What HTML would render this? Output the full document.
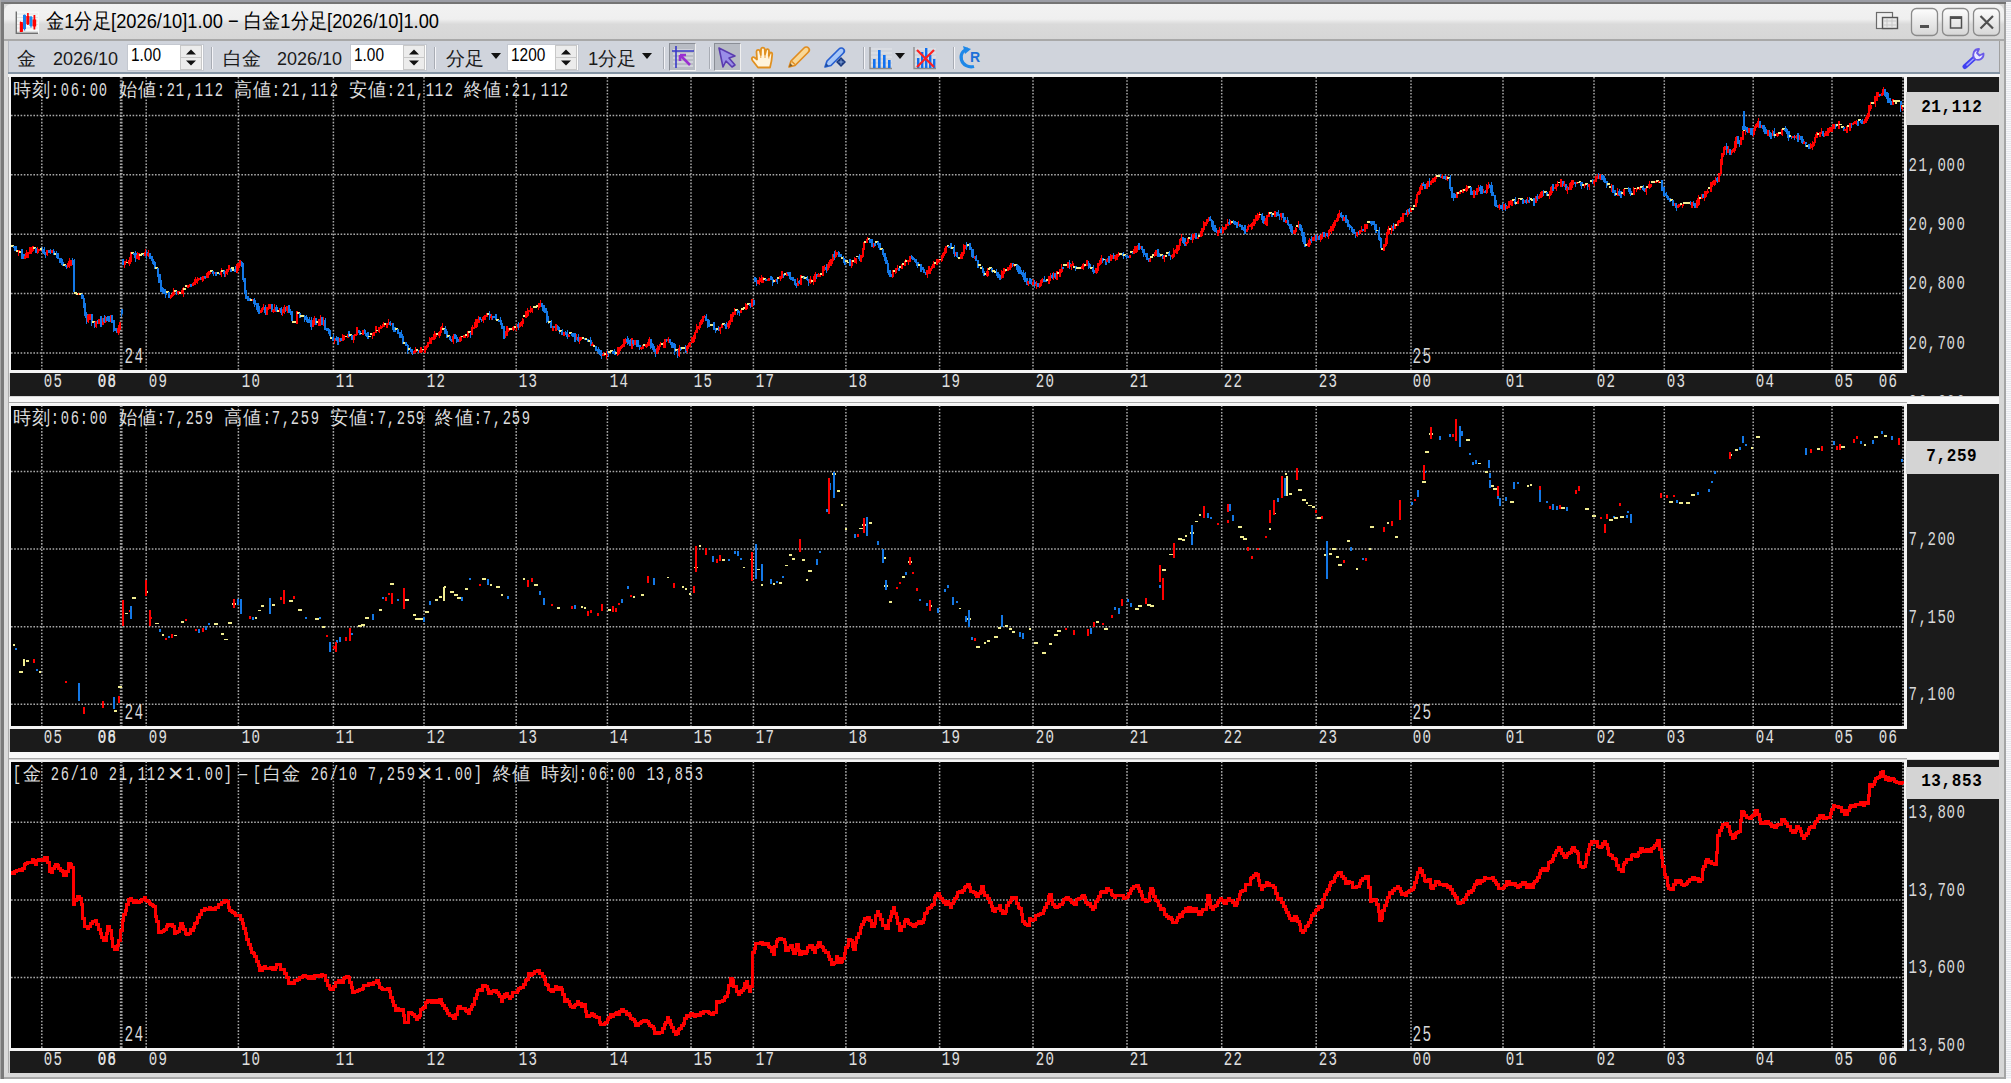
<!DOCTYPE html><html><head><meta charset="utf-8"><style>
*{margin:0;padding:0;box-sizing:border-box}
html,body{width:2011px;height:1083px;overflow:hidden;background:#ffffff}
body{position:relative;font-family:"Liberation Sans",sans-serif}
.abs{position:absolute}
.m{position:absolute;height:16px;line-height:16px;font-family:"Liberation Mono",monospace;transform-origin:0 0;white-space:nowrap}
.m i{position:absolute;top:0;font-style:normal;text-align:center;display:block}
.tt{position:absolute;white-space:nowrap;transform-origin:0 0;color:#000}
</style></head><body>
<div class="abs" style="left:0;top:0;width:2011px;height:1080px;background:#d6d6d6"></div>
<div class="abs" style="left:0;top:0;width:2011px;height:2px;background:#9b9da5"></div>
<div class="abs" style="left:0;top:2px;width:2006px;height:2px;background:#747474"></div>
<div class="abs" style="left:0;top:0;width:1px;height:1080px;background:#a8a8a8"></div>
<div class="abs" style="left:1px;top:2px;width:3px;height:1078px;background:#7a7a7a"></div>
<div class="abs" style="left:4px;top:4px;width:5px;height:1076px;background:#dadada"></div>
<div class="abs" style="left:2004px;top:4px;width:2px;height:1076px;background:#a4a4a4"></div>
<div class="abs" style="left:2006px;top:2px;width:5px;height:1078px;background:repeating-linear-gradient(0deg,#e6e8ee 0 1px,#f8f8fa 1px 2px)"></div>
<div class="abs" style="left:8px;top:74px;width:1px;height:999px;background:#acacac"></div>
<div class="abs" style="left:4px;top:1073px;width:2000px;height:5px;background:#d8d8d8"></div>
<div class="abs" style="left:4px;top:1077px;width:2000px;height:2px;background:#a8a8a8"></div>
<div class="abs" style="left:0;top:1079px;width:2011px;height:4px;background:#ffffff"></div>
<div class="abs" style="left:4px;top:4px;width:2000px;height:36px;border-radius:8px 8px 0 0;background:linear-gradient(#f2f2f2,#efefef 42%,#dadada 56%,#d6d6d6)"></div>
<div class="abs" style="left:4px;top:39px;width:2000px;height:2px;background:#a8a8a8"></div>
<svg class="abs" style="left:14px;top:10px" width="26" height="26" viewBox="0 0 26 26">
<rect x="2" y="1.5" width="23" height="22" fill="#f6f8f8"/>
<path d="M3 4H24M3 7.5H24M3 11H24M3 14.5H24M3 18H24M3 21.5H24" stroke="#dcdcdc" stroke-width="0.8"/>
<path d="M2.3 1.5V23.3H24" stroke="#707070" stroke-width="1.4" fill="none"/>
<path d="M6 22V11M9.2 21V4.5M12.8 15V3M16 18V6M19.5 19V4.5" stroke-width="1.4" stroke="#000" stroke-opacity="0"/>
<path d="M6.2 11L8.8 14V21L6.2 22Z" fill="#ff0000"/>
<rect x="5.8" y="12" width="3" height="10" fill="#ff0000"/>
<rect x="9" y="5" width="3" height="14" fill="#1a7ee8"/>
<path d="M10.5 4.5V20.5" stroke="#1a7ee8" stroke-width="1.4"/>
<rect x="12.3" y="6" width="3.2" height="8" fill="#ff0000"/>
<path d="M13.9 3V15" stroke="#ff0000" stroke-width="1.6"/>
<rect x="15.5" y="7" width="3" height="9" fill="#1a8ef0"/>
<path d="M17 6V17.5" stroke="#1a8ef0" stroke-width="1.4"/>
<rect x="18.6" y="9.5" width="3.6" height="7" fill="#ff0000"/>
<path d="M20.4 5V19.5" stroke="#ff0000" stroke-width="1.8"/>
</svg>
<div class="tt" style="left:46px;top:8px;font-size:21px;line-height:26px;transform:scaleX(0.871)">金1分足[2026/10]1.00 − 白金1分足[2026/10]1.00</div>
<svg class="abs" style="left:1874px;top:6px" width="130" height="34" viewBox="0 0 130 34">
<defs><linearGradient id="bg" x1="0" y1="0" x2="0" y2="1"><stop offset="0" stop-color="#fdfdfd"/><stop offset="1" stop-color="#d6d6d6"/></linearGradient></defs>
<rect x="2.5" y="6.5" width="16" height="16" fill="#f0f0f0" stroke="#6a6a6a" stroke-width="1.2"/>
<rect x="8.5" y="11.5" width="15" height="11" fill="#e8e8e8" stroke="#555" stroke-width="1.4"/>
<path d="M9 15H23M9 19H23M13 12V22M18 12V22" stroke="#c8c8c8" stroke-width="1"/>
<rect x="37.5" y="2.5" width="26" height="27" rx="5" fill="url(#bg)" stroke="#8a8a8a" stroke-width="1.3"/>
<rect x="46" y="19" width="9" height="3" fill="#505050"/>
<rect x="68.5" y="2.5" width="26" height="27" rx="5" fill="url(#bg)" stroke="#8a8a8a" stroke-width="1.3"/>
<rect x="76.5" y="11" width="11" height="11" fill="none" stroke="#505050" stroke-width="1.5"/>
<rect x="76" y="10.5" width="12" height="2.5" fill="#505050"/>
<rect x="99.5" y="2.5" width="26" height="27" rx="5" fill="url(#bg)" stroke="#8a8a8a" stroke-width="1.3"/>
<path d="M106.5 10L119 22.5M119 10L106.5 22.5" stroke="#505050" stroke-width="2.2"/>
</svg>
<div class="abs" style="left:8px;top:41px;width:1992px;height:32px;background:#d0d4dc;border-left:1px solid #b4b8c0;border-right:1px solid #a0a0a0"></div>
<div class="abs" style="left:8px;top:72px;width:1992px;height:2px;background:#8494a4"></div>
<div class="abs" style="left:8px;top:74px;width:1992px;height:3px;background:#f4f4f4"></div>
<div class="tt" style="left:17px;top:49px;font-size:18.5px;line-height:20px;color:#1a1a1a;transform:scaleX(1.0)">金</div>
<div class="tt" style="left:53px;top:49px;font-size:18px;line-height:20px;color:#1a1a1a;transform:scaleX(1.0)">2026/10</div>
<div class="abs" style="left:127px;top:44px;width:77px;height:27px;background:#fff;border:1px solid #c4c8d0"></div>
<div class="tt" style="left:131px;top:45px;font-size:17.5px;line-height:20px;color:#000;transform:scaleX(0.88)">1.00</div>
<svg class="abs" style="left:180px;top:45px" width="22" height="25" viewBox="0 0 22 25">
<rect x="0.5" y="0.5" width="21" height="24" fill="#ececec" stroke="#c8c8c8"/>
<path d="M0.5 12.5H21.5" stroke="#c8c8c8"/>
<path d="M6 9.5L11 4.5L16 9.5Z" fill="#111"/><path d="M6 15.5L11 20.5L16 15.5Z" fill="#111"/>
</svg>
<div class="abs" style="left:211px;top:47px;width:1px;height:22px;background:#a8acb4"></div>
<div class="abs" style="left:212px;top:47px;width:1px;height:22px;background:#f4f4f8"></div>
<div class="tt" style="left:223px;top:49px;font-size:18.5px;line-height:20px;color:#1a1a1a;transform:scaleX(1.0)">白金</div>
<div class="tt" style="left:277px;top:49px;font-size:18px;line-height:20px;color:#1a1a1a;transform:scaleX(1.0)">2026/10</div>
<div class="abs" style="left:350px;top:44px;width:77px;height:27px;background:#fff;border:1px solid #c4c8d0"></div>
<div class="tt" style="left:354px;top:45px;font-size:17.5px;line-height:20px;color:#000;transform:scaleX(0.88)">1.00</div>
<svg class="abs" style="left:403px;top:45px" width="22" height="25" viewBox="0 0 22 25">
<rect x="0.5" y="0.5" width="21" height="24" fill="#ececec" stroke="#c8c8c8"/>
<path d="M0.5 12.5H21.5" stroke="#c8c8c8"/>
<path d="M6 9.5L11 4.5L16 9.5Z" fill="#111"/><path d="M6 15.5L11 20.5L16 15.5Z" fill="#111"/>
</svg>
<div class="abs" style="left:434px;top:47px;width:1px;height:22px;background:#a8acb4"></div>
<div class="abs" style="left:435px;top:47px;width:1px;height:22px;background:#f4f4f8"></div>
<div class="tt" style="left:446px;top:49px;font-size:18.5px;line-height:20px;color:#1a1a1a;transform:scaleX(1.0)">分足</div>
<svg class="abs" style="left:491px;top:53px" width="10" height="6" viewBox="0 0 10 6"><path d="M0 0H10L5 6Z" fill="#111"/></svg>
<div class="abs" style="left:507px;top:44px;width:72px;height:27px;background:#fff;border:1px solid #c4c8d0"></div>
<div class="tt" style="left:511px;top:45px;font-size:17.5px;line-height:20px;color:#000;transform:scaleX(0.88)">1200</div>
<svg class="abs" style="left:555px;top:45px" width="22" height="25" viewBox="0 0 22 25">
<rect x="0.5" y="0.5" width="21" height="24" fill="#ececec" stroke="#c8c8c8"/>
<path d="M0.5 12.5H21.5" stroke="#c8c8c8"/>
<path d="M6 9.5L11 4.5L16 9.5Z" fill="#111"/><path d="M6 15.5L11 20.5L16 15.5Z" fill="#111"/>
</svg>
<div class="tt" style="left:588px;top:49px;font-size:18.5px;line-height:20px;color:#1a1a1a;transform:scaleX(1.0)">1分足</div>
<svg class="abs" style="left:642px;top:53px" width="10" height="6" viewBox="0 0 10 6"><path d="M0 0H10L5 6Z" fill="#111"/></svg>
<div class="abs" style="left:663px;top:47px;width:1px;height:22px;background:#a8acb4"></div>
<div class="abs" style="left:664px;top:47px;width:1px;height:22px;background:#f4f4f8"></div>
<div class="abs" style="left:669px;top:43px;width:27px;height:28px;background:#b8bcc4;border:1px solid #8a8e96;border-bottom-color:#f4f4f4;border-right-color:#f0f0f0"></div>
<svg class="abs" style="left:672px;top:46px" width="22" height="22" viewBox="0 0 22 22">
<path d="M1 4H21M1 8H21M1 12H21M1 16H21M1 20H21" stroke="#e8e8f0" stroke-width="1"/>
<path d="M4 0V22M0 5H22" stroke="#3838c8" stroke-width="1.6"/>
<path d="M8 9L18 19M8 9V15M8 9H14" stroke="#9a30d0" stroke-width="2.6" fill="none"/>
</svg>
<div class="abs" style="left:709px;top:47px;width:1px;height:22px;background:#a8acb4"></div>
<div class="abs" style="left:710px;top:47px;width:1px;height:22px;background:#f4f4f8"></div>
<div class="abs" style="left:714px;top:43px;width:27px;height:28px;background:#b8bcc4;border:1px solid #8a8e96;border-bottom-color:#f4f4f4;border-right-color:#f0f0f0"></div>
<svg class="abs" style="left:716px;top:46px" width="24" height="24" viewBox="0 0 24 24">
<path d="M3 2L19 10L13 12L19 19L16 21L10 15L7 21Z" fill="#9a8ee8" stroke="#5a3cb0" stroke-width="1.6" stroke-linejoin="round"/>
</svg>
<svg class="abs" style="left:745px;top:40px" width="32" height="32" viewBox="0 0 32 32">
<path d="M13 27.5C11 25 9.5 23 7.5 20.5C6 18.5 7.5 16 9.5 17.5L12 19.5L11.5 12C11.3 9.5 14.5 9 15 11.5L15.8 15L16 9.5C16.2 7 19.5 7 19.8 9.5L20 14.5L21 10.5C21.5 8.5 24 8.8 24 11L23.8 16L24.8 13.5C25.5 11.8 27.5 12.5 27.2 14.5C27 18 26.5 22 25 27.5Z" fill="#fff4dc" stroke="#e09020" stroke-width="1.8" stroke-linejoin="round"/>
<path d="M15.8 15V18M20 14.5V18M23.8 16V18.5" stroke="#e8a040" stroke-width="1"/>
</svg>
<svg class="abs" style="left:786px;top:45px" width="25" height="25" viewBox="0 0 25 25">
<path d="M3 22L5 16L18 3C19.5 1.5 21.5 2 22.5 3C23.5 4 23.5 6 22 7.5L9 20.5Z" fill="#f8d898" stroke="#e08c20" stroke-width="1.7" stroke-linejoin="round"/>
<path d="M6 16.5L9 19.5" stroke="#e08c20" stroke-width="1.2"/>
<path d="M3 22L4.3 18.3L6.7 20.7Z" fill="#806030"/>
</svg>
<svg class="abs" style="left:822px;top:45px" width="26" height="25" viewBox="0 0 26 25">
<path d="M3 22L5 16L17 4C18.5 2.5 20.5 3 21.5 4C22.5 5 22.5 7 21 8.5L9 20.5Z" fill="#a8c8f8" stroke="#2860d0" stroke-width="1.7" stroke-linejoin="round"/>
<path d="M3 22L4.3 18.3L6.7 20.7Z" fill="#2050a0"/>
<path d="M19 12L24 17L19 22L14 17Z" fill="#1a3a80"/>
<path d="M16.5 17H21.5M19 14.5V19.5" stroke="#a0c0f0" stroke-width="0.8"/>
</svg>
<div class="abs" style="left:863px;top:47px;width:1px;height:22px;background:#a8acb4"></div>
<div class="abs" style="left:864px;top:47px;width:1px;height:22px;background:#f4f4f8"></div>
<svg class="abs" style="left:869px;top:46px" width="24" height="24" viewBox="0 0 24 24">
<path d="M2 3H23M2 7H23M2 11H23M2 15H23M2 19H23" stroke="#e4e6ea" stroke-width="1"/>
<path d="M1 1V22.5H23" stroke="#8a8a8a" stroke-width="1.3" fill="none"/>
<rect x="4" y="13" width="2.6" height="9" fill="#1070f0"/>
<rect x="9" y="4" width="2.6" height="18" fill="#1070f0"/>
<rect x="14" y="9" width="2.6" height="13" fill="#1070f0"/>
<rect x="19" y="14" width="2.6" height="8" fill="#1070f0"/>
</svg>
<svg class="abs" style="left:895px;top:53px" width="10" height="6" viewBox="0 0 10 6"><path d="M0 0H10L5 6Z" fill="#111"/></svg>
<svg class="abs" style="left:913px;top:46px" width="24" height="24" viewBox="0 0 24 24">
<path d="M2 3H23M2 7H23M2 11H23M2 15H23M2 19H23" stroke="#e4e6ea" stroke-width="1"/>
<path d="M1 1V22.5H23" stroke="#8a8a8a" stroke-width="1.3" fill="none"/>
<rect x="4" y="12" width="2.4" height="10" fill="#1070f0"/>
<rect x="8" y="6" width="2.4" height="16" fill="#1070f0"/>
<rect x="12" y="2" width="2.4" height="20" fill="#1070f0"/>
<rect x="16" y="9" width="2.4" height="13" fill="#1070f0"/>
<rect x="20" y="13" width="2.4" height="9" fill="#1070f0"/>
<path d="M4 4L21 21M21 4L4 21" stroke="#ff2020" stroke-width="2.2"/>
</svg>
<div class="abs" style="left:953px;top:47px;width:1px;height:22px;background:#a8acb4"></div>
<div class="abs" style="left:954px;top:47px;width:1px;height:22px;background:#f4f4f8"></div>
<svg class="abs" style="left:958px;top:45px" width="26" height="26" viewBox="0 0 26 26">
<path d="M10 4C4.5 5 2 10 3.5 15C5 20 10.5 23 16 21.5" stroke="#1e88e8" stroke-width="3.2" fill="none"/>
<path d="M5 1L13 4L7 9Z" fill="#1e88e8"/>
<text x="12" y="17" font-family="Liberation Sans" font-weight="bold" font-size="14" fill="#1e70d8">R</text>
</svg>
<svg class="abs" style="left:1962px;top:45px" width="26" height="26" viewBox="0 0 26 26">
<path d="M3 21.5L13 12.5" stroke="#4040f0" stroke-width="5" stroke-linecap="round"/>
<path d="M5 20L12 13.5" stroke="#a0a0ff" stroke-width="1.6" stroke-linecap="round"/>
<path d="M12 13C10 9 12 4 17 4L15 8L17.5 10.5L21.5 8.5C22 13 18 16 13.5 14.5Z" fill="#e8e8ff" stroke="#6a5ae8" stroke-width="1.8" stroke-linejoin="round"/>
</svg>
<svg class="abs" style="left:0;top:0" width="2011" height="1083" viewBox="0 0 2011 1083" shape-rendering="crispEdges">
<defs>
<clipPath id="c0"><rect x="11" y="77" width="1893" height="293"/></clipPath>
<clipPath id="a0"><rect x="1907" y="77" width="92" height="319"/></clipPath>
<clipPath id="c1"><rect x="11" y="405.5" width="1893" height="320.5"/></clipPath>
<clipPath id="a1"><rect x="1907" y="405.5" width="92" height="346.0"/></clipPath>
<clipPath id="c2"><rect x="11" y="761.5" width="1893" height="286.5"/></clipPath>
<clipPath id="a2"><rect x="1907" y="761.5" width="92" height="311.5"/></clipPath>
</defs>
<rect x="10" y="76.5" width="1989" height="319.5" fill="#1b1b1b"/>
<rect x="9" y="76.5" width="1898" height="296.0" fill="#f4f4f4"/>
<rect x="11" y="77" width="1893" height="293" fill="#000"/>
<g clip-path="url(#c0)" stroke="#a8a8a8" stroke-width="1.5" stroke-dasharray="1.6 1.6" fill="none" shape-rendering="geometricPrecision"><path d="M11 115.5H1903"/><path d="M11 174.8H1903"/><path d="M11 234.2H1903"/><path d="M11 293.6H1903"/><path d="M11 352.9H1903"/><path d="M41.8 77V370"/><path d="M121.8 77V370"/><path d="M146.2 77V370"/><path d="M238.4 77V370"/><path d="M333.4 77V370"/><path d="M424.0 77V370"/><path d="M516.2 77V370"/><path d="M607.4 77V370"/><path d="M691.0 77V370"/><path d="M753.4 77V370"/><path d="M845.9 77V370"/><path d="M939.6 77V370"/><path d="M1033.0 77V370"/><path d="M1127.0 77V370"/><path d="M1221.7 77V370"/><path d="M1316.2 77V370"/><path d="M1411.0 77V370"/><path d="M1503.0 77V370"/><path d="M1594.0 77V370"/><path d="M1664.3 77V370"/><path d="M1753.2 77V370"/><path d="M1832.0 77V370"/><path d="M120.6 77V370"/><path d="M1903 77V370"/></g>
<rect x="10" y="403.5" width="1989" height="348.0" fill="#1b1b1b"/>
<rect x="9" y="403.5" width="1898" height="325.0" fill="#f4f4f4"/>
<rect x="11" y="405.5" width="1893" height="320.5" fill="#000"/>
<g clip-path="url(#c1)" stroke="#a8a8a8" stroke-width="1.5" stroke-dasharray="1.6 1.6" fill="none" shape-rendering="geometricPrecision"><path d="M11 471.5H1903"/><path d="M11 549.1H1903"/><path d="M11 626.7H1903"/><path d="M11 704.3H1903"/><path d="M41.8 405.5V726"/><path d="M121.8 405.5V726"/><path d="M146.2 405.5V726"/><path d="M238.4 405.5V726"/><path d="M333.4 405.5V726"/><path d="M424.0 405.5V726"/><path d="M516.2 405.5V726"/><path d="M607.4 405.5V726"/><path d="M691.0 405.5V726"/><path d="M753.4 405.5V726"/><path d="M845.9 405.5V726"/><path d="M939.6 405.5V726"/><path d="M1033.0 405.5V726"/><path d="M1127.0 405.5V726"/><path d="M1221.7 405.5V726"/><path d="M1316.2 405.5V726"/><path d="M1411.0 405.5V726"/><path d="M1503.0 405.5V726"/><path d="M1594.0 405.5V726"/><path d="M1664.3 405.5V726"/><path d="M1753.2 405.5V726"/><path d="M1832.0 405.5V726"/><path d="M120.6 405.5V726"/><path d="M1903 405.5V726"/></g>
<rect x="10" y="759.5" width="1989" height="313.5" fill="#1b1b1b"/>
<rect x="9" y="759.5" width="1898" height="291.0" fill="#f4f4f4"/>
<rect x="11" y="761.5" width="1893" height="286.5" fill="#000"/>
<g clip-path="url(#c2)" stroke="#a8a8a8" stroke-width="1.5" stroke-dasharray="1.6 1.6" fill="none" shape-rendering="geometricPrecision"><path d="M11 822.3H1903"/><path d="M11 899.9H1903"/><path d="M11 977.5H1903"/><path d="M41.8 761.5V1048"/><path d="M121.8 761.5V1048"/><path d="M146.2 761.5V1048"/><path d="M238.4 761.5V1048"/><path d="M333.4 761.5V1048"/><path d="M424.0 761.5V1048"/><path d="M516.2 761.5V1048"/><path d="M607.4 761.5V1048"/><path d="M691.0 761.5V1048"/><path d="M753.4 761.5V1048"/><path d="M845.9 761.5V1048"/><path d="M939.6 761.5V1048"/><path d="M1033.0 761.5V1048"/><path d="M1127.0 761.5V1048"/><path d="M1221.7 761.5V1048"/><path d="M1316.2 761.5V1048"/><path d="M1411.0 761.5V1048"/><path d="M1503.0 761.5V1048"/><path d="M1594.0 761.5V1048"/><path d="M1664.3 761.5V1048"/><path d="M1753.2 761.5V1048"/><path d="M1832.0 761.5V1048"/><path d="M120.6 761.5V1048"/><path d="M1903 761.5V1048"/></g>
<rect x="9" y="396.5" width="1990" height="7.0" fill="#f8f8f8"/>
<rect x="9" y="402" width="1898" height="1" fill="#a8a8a8"/>
<rect x="9" y="752" width="1990" height="7.0" fill="#f8f8f8"/>
<rect x="9" y="757.5" width="1898" height="1" fill="#a8a8a8"/>
<g clip-path="url(#c0)"><rect x="11.1" y="244.9" width="2.8" height="1.9" fill="#f0ec90"/><rect x="13.5" y="245.7" width="1.2" height="5.2" fill="#1478e6"/><rect x="13.1" y="245.7" width="2.1" height="2.2" fill="#1478e6"/><rect x="14.7" y="246.3" width="2.1" height="4.6" fill="#1478e6"/><rect x="15.8" y="250.2" width="2.8" height="1.9" fill="#f0ec90"/><rect x="18.2" y="250.4" width="1.2" height="5.2" fill="#ff0000"/><rect x="17.8" y="250.4" width="2.1" height="2.2" fill="#ff0000"/><rect x="19.0" y="251.4" width="2.8" height="1.9" fill="#f0ec90"/><rect x="21.4" y="249.2" width="1.2" height="9.4" fill="#1478e6"/><rect x="21.0" y="252.2" width="2.1" height="3.4" fill="#1478e6"/><rect x="22.6" y="254.0" width="2.1" height="5.2" fill="#1478e6"/><rect x="24.5" y="253.3" width="1.2" height="5.8" fill="#ff0000"/><rect x="24.1" y="256.3" width="2.1" height="2.8" fill="#ff0000"/><rect x="26.1" y="250.4" width="1.2" height="7.6" fill="#ff0000"/><rect x="25.7" y="253.4" width="2.1" height="4.6" fill="#ff0000"/><rect x="27.7" y="252.2" width="1.2" height="5.8" fill="#ff0000"/><rect x="27.3" y="252.2" width="2.1" height="2.8" fill="#ff0000"/><rect x="29.3" y="247.4" width="1.2" height="6.4" fill="#ff0000"/><rect x="28.9" y="250.4" width="2.1" height="3.4" fill="#ff0000"/><rect x="30.9" y="247.0" width="1.2" height="7.0" fill="#ff0000"/><rect x="30.5" y="248.0" width="2.1" height="4.0" fill="#ff0000"/><rect x="32.4" y="245.5" width="1.2" height="5.2" fill="#ff0000"/><rect x="32.0" y="247.5" width="2.1" height="2.2" fill="#ff0000"/><rect x="33.2" y="246.7" width="2.8" height="1.9" fill="#f0ec90"/><rect x="35.2" y="247.5" width="2.1" height="5.2" fill="#1478e6"/><rect x="37.2" y="247.2" width="1.2" height="6.4" fill="#ff0000"/><rect x="36.8" y="249.2" width="2.1" height="3.4" fill="#ff0000"/><rect x="38.4" y="248.6" width="2.1" height="2.2" fill="#ff0000"/><rect x="39.5" y="247.8" width="2.8" height="1.9" fill="#f0ec90"/><rect x="41.9" y="246.6" width="1.2" height="6.8" fill="#1478e6"/><rect x="41.5" y="248.6" width="2.1" height="2.8" fill="#1478e6"/><rect x="43.5" y="246.8" width="1.2" height="8.6" fill="#1478e6"/><rect x="43.1" y="249.8" width="2.1" height="4.6" fill="#1478e6"/><rect x="45.1" y="251.8" width="1.2" height="6.2" fill="#1478e6"/><rect x="44.7" y="252.8" width="2.1" height="2.2" fill="#1478e6"/><rect x="46.7" y="249.8" width="1.2" height="6.2" fill="#ff0000"/><rect x="46.3" y="249.8" width="2.1" height="5.2" fill="#ff0000"/><rect x="47.8" y="249.8" width="2.1" height="2.8" fill="#1478e6"/><rect x="49.8" y="249.0" width="1.2" height="5.2" fill="#1478e6"/><rect x="49.4" y="251.0" width="2.1" height="2.2" fill="#1478e6"/><rect x="51.4" y="250.0" width="1.2" height="3.2" fill="#ff0000"/><rect x="51.0" y="251.0" width="2.1" height="2.2" fill="#ff0000"/><rect x="53.0" y="249.0" width="1.2" height="6.0" fill="#1478e6"/><rect x="52.6" y="251.0" width="2.1" height="4.0" fill="#1478e6"/><rect x="53.8" y="252.6" width="2.8" height="1.9" fill="#f0ec90"/><rect x="56.1" y="251.4" width="1.2" height="6.8" fill="#1478e6"/><rect x="55.7" y="253.4" width="2.1" height="2.8" fill="#1478e6"/><rect x="57.7" y="252.6" width="1.2" height="6.6" fill="#1478e6"/><rect x="57.3" y="254.6" width="2.1" height="4.6" fill="#1478e6"/><rect x="59.3" y="257.5" width="1.2" height="5.4" fill="#1478e6"/><rect x="58.9" y="257.5" width="2.1" height="3.4" fill="#1478e6"/><rect x="60.9" y="258.3" width="1.2" height="7.0" fill="#1478e6"/><rect x="60.5" y="259.3" width="2.1" height="4.0" fill="#1478e6"/><rect x="62.1" y="261.7" width="2.1" height="4.6" fill="#1478e6"/><rect x="63.2" y="263.8" width="2.8" height="1.9" fill="#f0ec90"/><rect x="65.6" y="264.6" width="1.2" height="4.8" fill="#1478e6"/><rect x="65.2" y="264.6" width="2.1" height="2.8" fill="#1478e6"/><rect x="67.2" y="263.4" width="1.2" height="5.0" fill="#ff0000"/><rect x="66.8" y="263.4" width="2.1" height="4.0" fill="#ff0000"/><rect x="68.8" y="258.1" width="1.2" height="10.0" fill="#ff0000"/><rect x="68.4" y="261.1" width="2.1" height="4.0" fill="#ff0000"/><rect x="70.4" y="259.9" width="1.2" height="5.8" fill="#ff0000"/><rect x="70.0" y="259.9" width="2.1" height="2.8" fill="#ff0000"/><rect x="71.9" y="257.9" width="1.2" height="7.2" fill="#1478e6"/><rect x="71.5" y="259.9" width="2.1" height="2.2" fill="#1478e6"/><rect x="73.5" y="258.5" width="1.2" height="35.8" fill="#1478e6"/><rect x="73.1" y="260.5" width="2.1" height="31.8" fill="#1478e6"/><rect x="74.3" y="291.6" width="2.8" height="1.9" fill="#f0ec90"/><rect x="75.9" y="292.8" width="2.8" height="1.9" fill="#f0ec90"/><rect x="77.9" y="293.0" width="2.1" height="2.2" fill="#ff0000"/><rect x="79.0" y="292.8" width="2.8" height="1.9" fill="#f0ec90"/><rect x="81.0" y="293.6" width="2.1" height="5.7" fill="#1478e6"/><rect x="83.0" y="294.8" width="1.2" height="13.1" fill="#1478e6"/><rect x="82.6" y="297.8" width="2.1" height="8.1" fill="#1478e6"/><rect x="84.6" y="303.3" width="1.2" height="14.7" fill="#1478e6"/><rect x="84.2" y="304.3" width="2.1" height="11.7" fill="#1478e6"/><rect x="86.2" y="312.4" width="1.2" height="11.5" fill="#1478e6"/><rect x="85.8" y="314.4" width="2.1" height="7.5" fill="#1478e6"/><rect x="87.7" y="313.9" width="1.2" height="8.9" fill="#ff0000"/><rect x="87.3" y="314.9" width="2.1" height="6.9" fill="#ff0000"/><rect x="89.3" y="314.4" width="1.2" height="5.2" fill="#ff0000"/><rect x="88.9" y="314.4" width="2.1" height="2.2" fill="#ff0000"/><rect x="90.9" y="314.4" width="1.2" height="11.7" fill="#1478e6"/><rect x="90.5" y="314.4" width="2.1" height="8.7" fill="#1478e6"/><rect x="91.7" y="320.7" width="2.8" height="1.9" fill="#f0ec90"/><rect x="94.1" y="321.5" width="1.2" height="6.2" fill="#1478e6"/><rect x="93.7" y="321.5" width="2.1" height="5.2" fill="#1478e6"/><rect x="95.6" y="320.9" width="1.2" height="6.7" fill="#ff0000"/><rect x="95.2" y="320.9" width="2.1" height="5.7" fill="#ff0000"/><rect x="97.2" y="319.9" width="1.2" height="3.8" fill="#1478e6"/><rect x="96.8" y="320.9" width="2.1" height="2.8" fill="#1478e6"/><rect x="98.4" y="319.1" width="2.1" height="4.6" fill="#ff0000"/><rect x="100.4" y="316.1" width="1.2" height="11.3" fill="#1478e6"/><rect x="100.0" y="319.1" width="2.1" height="6.3" fill="#1478e6"/><rect x="101.6" y="317.9" width="2.1" height="7.5" fill="#ff0000"/><rect x="103.5" y="314.9" width="1.2" height="8.0" fill="#1478e6"/><rect x="103.1" y="317.9" width="2.1" height="4.0" fill="#1478e6"/><rect x="105.1" y="315.7" width="1.2" height="7.2" fill="#ff0000"/><rect x="104.7" y="316.7" width="2.1" height="5.2" fill="#ff0000"/><rect x="106.7" y="315.7" width="1.2" height="5.0" fill="#1478e6"/><rect x="106.3" y="316.7" width="2.1" height="4.0" fill="#1478e6"/><rect x="108.3" y="316.1" width="1.2" height="5.8" fill="#1478e6"/><rect x="107.9" y="319.1" width="2.1" height="2.8" fill="#1478e6"/><rect x="109.5" y="314.9" width="2.1" height="6.9" fill="#ff0000"/><rect x="111.4" y="314.9" width="1.2" height="8.3" fill="#1478e6"/><rect x="111.0" y="314.9" width="2.1" height="6.3" fill="#1478e6"/><rect x="113.0" y="319.7" width="1.2" height="11.9" fill="#1478e6"/><rect x="112.6" y="319.7" width="2.1" height="9.9" fill="#1478e6"/><rect x="114.2" y="328.0" width="2.1" height="3.4" fill="#1478e6"/><rect x="116.2" y="327.7" width="1.2" height="4.8" fill="#1478e6"/><rect x="115.8" y="329.7" width="2.1" height="2.8" fill="#1478e6"/><rect x="117.8" y="325.0" width="1.2" height="9.6" fill="#ff0000"/><rect x="117.4" y="328.0" width="2.1" height="4.6" fill="#ff0000"/><rect x="118.9" y="321.5" width="2.1" height="8.1" fill="#ff0000"/><rect x="120.9" y="308.6" width="1.2" height="8.6" fill="#1478e6"/><rect x="120.5" y="308.6" width="2.1" height="5.6" fill="#1478e6"/><rect x="122.1" y="259.4" width="2.1" height="5.6" fill="#1478e6"/><rect x="124.1" y="260.7" width="1.2" height="7.4" fill="#ff0000"/><rect x="123.7" y="261.7" width="2.1" height="3.4" fill="#ff0000"/><rect x="125.7" y="259.1" width="1.2" height="4.2" fill="#ff0000"/><rect x="125.3" y="261.1" width="2.1" height="2.2" fill="#ff0000"/><rect x="126.4" y="261.5" width="2.8" height="1.9" fill="#f0ec90"/><rect x="128.8" y="256.9" width="1.2" height="9.0" fill="#ff0000"/><rect x="128.4" y="259.9" width="2.1" height="4.0" fill="#ff0000"/><rect x="130.4" y="251.6" width="1.2" height="9.9" fill="#ff0000"/><rect x="130.0" y="254.6" width="2.1" height="6.9" fill="#ff0000"/><rect x="131.2" y="252.0" width="2.8" height="1.9" fill="#f0ec90"/><rect x="133.6" y="252.8" width="1.2" height="5.2" fill="#1478e6"/><rect x="133.2" y="252.8" width="2.1" height="2.2" fill="#1478e6"/><rect x="135.1" y="251.4" width="1.2" height="10.2" fill="#1478e6"/><rect x="134.7" y="253.4" width="2.1" height="5.2" fill="#1478e6"/><rect x="136.7" y="252.2" width="1.2" height="6.4" fill="#ff0000"/><rect x="136.3" y="255.2" width="2.1" height="3.4" fill="#ff0000"/><rect x="138.3" y="253.4" width="1.2" height="6.4" fill="#ff0000"/><rect x="137.9" y="253.4" width="2.1" height="3.4" fill="#ff0000"/><rect x="139.1" y="253.8" width="2.8" height="1.9" fill="#f0ec90"/><rect x="140.7" y="253.2" width="2.8" height="1.9" fill="#f0ec90"/><rect x="142.6" y="254.0" width="2.1" height="2.2" fill="#1478e6"/><rect x="144.6" y="249.2" width="1.2" height="7.0" fill="#ff0000"/><rect x="144.2" y="252.2" width="2.1" height="4.0" fill="#ff0000"/><rect x="146.2" y="250.2" width="1.2" height="9.0" fill="#1478e6"/><rect x="145.8" y="252.2" width="2.1" height="4.0" fill="#1478e6"/><rect x="147.8" y="250.4" width="1.2" height="6.8" fill="#ff0000"/><rect x="147.4" y="253.4" width="2.1" height="2.8" fill="#ff0000"/><rect x="149.4" y="253.4" width="1.2" height="6.0" fill="#1478e6"/><rect x="149.0" y="253.4" width="2.1" height="4.0" fill="#1478e6"/><rect x="150.5" y="255.7" width="2.1" height="5.2" fill="#1478e6"/><rect x="152.5" y="259.3" width="1.2" height="5.6" fill="#1478e6"/><rect x="152.1" y="259.3" width="2.1" height="4.6" fill="#1478e6"/><rect x="154.1" y="261.3" width="1.2" height="7.9" fill="#1478e6"/><rect x="153.7" y="262.3" width="2.1" height="6.9" fill="#1478e6"/><rect x="154.9" y="266.8" width="2.8" height="1.9" fill="#f0ec90"/><rect x="157.3" y="267.6" width="1.2" height="9.5" fill="#1478e6"/><rect x="156.9" y="267.6" width="2.1" height="7.5" fill="#1478e6"/><rect x="158.4" y="273.5" width="2.1" height="9.3" fill="#1478e6"/><rect x="160.4" y="280.2" width="1.2" height="11.7" fill="#1478e6"/><rect x="160.0" y="281.2" width="2.1" height="8.7" fill="#1478e6"/><rect x="162.0" y="287.3" width="1.2" height="5.6" fill="#1478e6"/><rect x="161.6" y="288.3" width="2.1" height="4.6" fill="#1478e6"/><rect x="163.6" y="289.3" width="1.2" height="4.8" fill="#1478e6"/><rect x="163.2" y="291.3" width="2.1" height="2.8" fill="#1478e6"/><rect x="165.2" y="289.4" width="1.2" height="8.8" fill="#1478e6"/><rect x="164.8" y="292.4" width="2.1" height="2.8" fill="#1478e6"/><rect x="165.9" y="291.1" width="2.8" height="1.9" fill="#f0ec90"/><rect x="167.9" y="291.9" width="2.1" height="5.7" fill="#1478e6"/><rect x="169.9" y="294.8" width="1.2" height="3.8" fill="#ff0000"/><rect x="169.5" y="294.8" width="2.1" height="2.8" fill="#ff0000"/><rect x="171.5" y="291.6" width="1.2" height="5.8" fill="#ff0000"/><rect x="171.1" y="293.6" width="2.1" height="2.8" fill="#ff0000"/><rect x="173.1" y="288.1" width="1.2" height="8.2" fill="#ff0000"/><rect x="172.7" y="290.1" width="2.1" height="5.2" fill="#ff0000"/><rect x="173.8" y="289.9" width="2.8" height="1.9" fill="#f0ec90"/><rect x="176.2" y="290.7" width="1.2" height="4.4" fill="#1478e6"/><rect x="175.8" y="290.7" width="2.1" height="3.4" fill="#1478e6"/><rect x="177.8" y="291.3" width="1.2" height="3.8" fill="#ff0000"/><rect x="177.4" y="291.3" width="2.1" height="2.8" fill="#ff0000"/><rect x="178.6" y="291.6" width="2.8" height="1.9" fill="#f0ec90"/><rect x="181.0" y="289.9" width="1.2" height="4.2" fill="#ff0000"/><rect x="180.6" y="291.9" width="2.1" height="2.2" fill="#ff0000"/><rect x="182.5" y="287.3" width="1.2" height="9.2" fill="#ff0000"/><rect x="182.1" y="288.3" width="2.1" height="5.2" fill="#ff0000"/><rect x="183.3" y="288.1" width="2.8" height="1.9" fill="#f0ec90"/><rect x="184.9" y="285.1" width="2.8" height="1.9" fill="#f0ec90"/><rect x="186.9" y="284.8" width="2.1" height="2.8" fill="#ff0000"/><rect x="188.9" y="284.2" width="1.2" height="3.2" fill="#ff0000"/><rect x="188.5" y="284.2" width="2.1" height="2.2" fill="#ff0000"/><rect x="190.4" y="284.2" width="1.2" height="3.2" fill="#1478e6"/><rect x="190.0" y="284.2" width="2.1" height="2.2" fill="#1478e6"/><rect x="191.6" y="283.0" width="2.1" height="3.4" fill="#ff0000"/><rect x="193.6" y="278.8" width="1.2" height="5.8" fill="#ff0000"/><rect x="193.2" y="281.8" width="2.1" height="2.8" fill="#ff0000"/><rect x="195.2" y="277.4" width="1.2" height="8.0" fill="#ff0000"/><rect x="194.8" y="279.4" width="2.1" height="4.0" fill="#ff0000"/><rect x="196.8" y="276.8" width="1.2" height="7.2" fill="#ff0000"/><rect x="196.4" y="278.8" width="2.1" height="2.2" fill="#ff0000"/><rect x="197.9" y="277.6" width="2.1" height="2.8" fill="#ff0000"/><rect x="199.9" y="276.6" width="1.2" height="3.2" fill="#1478e6"/><rect x="199.5" y="277.6" width="2.1" height="2.2" fill="#1478e6"/><rect x="201.5" y="276.1" width="1.2" height="5.8" fill="#ff0000"/><rect x="201.1" y="277.1" width="2.1" height="2.8" fill="#ff0000"/><rect x="203.1" y="275.9" width="1.2" height="4.8" fill="#ff0000"/><rect x="202.7" y="275.9" width="2.1" height="2.8" fill="#ff0000"/><rect x="204.7" y="275.9" width="1.2" height="3.2" fill="#1478e6"/><rect x="204.3" y="275.9" width="2.1" height="2.2" fill="#1478e6"/><rect x="205.8" y="272.9" width="2.1" height="5.2" fill="#ff0000"/><rect x="207.8" y="270.7" width="1.2" height="6.8" fill="#ff0000"/><rect x="207.4" y="271.7" width="2.1" height="2.8" fill="#ff0000"/><rect x="209.4" y="271.1" width="1.2" height="3.2" fill="#ff0000"/><rect x="209.0" y="271.1" width="2.1" height="2.2" fill="#ff0000"/><rect x="210.2" y="270.3" width="2.8" height="1.9" fill="#f0ec90"/><rect x="212.6" y="271.1" width="1.2" height="4.8" fill="#1478e6"/><rect x="212.2" y="271.1" width="2.1" height="2.8" fill="#1478e6"/><rect x="213.7" y="271.7" width="2.1" height="2.2" fill="#ff0000"/><rect x="215.3" y="271.7" width="2.1" height="4.0" fill="#1478e6"/><rect x="216.5" y="272.1" width="2.8" height="1.9" fill="#f0ec90"/><rect x="218.5" y="272.9" width="2.1" height="2.2" fill="#1478e6"/><rect x="220.5" y="268.1" width="1.2" height="9.0" fill="#ff0000"/><rect x="220.1" y="271.1" width="2.1" height="4.0" fill="#ff0000"/><rect x="221.2" y="270.3" width="2.8" height="1.9" fill="#f0ec90"/><rect x="223.6" y="270.1" width="1.2" height="6.8" fill="#1478e6"/><rect x="223.2" y="271.1" width="2.1" height="2.8" fill="#1478e6"/><rect x="225.2" y="270.5" width="1.2" height="6.4" fill="#ff0000"/><rect x="224.8" y="270.5" width="2.1" height="3.4" fill="#ff0000"/><rect x="226.8" y="268.8" width="1.2" height="6.4" fill="#ff0000"/><rect x="226.4" y="268.8" width="2.1" height="3.4" fill="#ff0000"/><rect x="228.4" y="264.6" width="1.2" height="5.8" fill="#ff0000"/><rect x="228.0" y="267.6" width="2.1" height="2.8" fill="#ff0000"/><rect x="229.5" y="267.6" width="2.1" height="4.0" fill="#1478e6"/><rect x="230.7" y="266.8" width="2.8" height="1.9" fill="#f0ec90"/><rect x="232.3" y="268.6" width="2.8" height="1.9" fill="#f0ec90"/><rect x="234.7" y="266.4" width="1.2" height="5.2" fill="#1478e6"/><rect x="234.3" y="269.4" width="2.1" height="2.2" fill="#1478e6"/><rect x="236.3" y="264.4" width="1.2" height="8.2" fill="#ff0000"/><rect x="235.9" y="266.4" width="2.1" height="5.2" fill="#ff0000"/><rect x="237.8" y="262.8" width="1.2" height="8.2" fill="#ff0000"/><rect x="237.4" y="262.8" width="2.1" height="5.2" fill="#ff0000"/><rect x="239.4" y="260.3" width="1.2" height="5.2" fill="#ff0000"/><rect x="239.0" y="262.3" width="2.1" height="2.2" fill="#ff0000"/><rect x="241.0" y="261.3" width="1.2" height="5.6" fill="#1478e6"/><rect x="240.6" y="262.3" width="2.1" height="4.6" fill="#1478e6"/><rect x="242.6" y="263.2" width="1.2" height="18.6" fill="#1478e6"/><rect x="242.2" y="265.2" width="2.1" height="14.6" fill="#1478e6"/><rect x="244.2" y="278.2" width="1.2" height="15.4" fill="#1478e6"/><rect x="243.8" y="278.2" width="2.1" height="13.4" fill="#1478e6"/><rect x="245.3" y="290.1" width="2.1" height="8.7" fill="#1478e6"/><rect x="247.3" y="296.2" width="1.2" height="4.8" fill="#1478e6"/><rect x="246.9" y="297.2" width="2.1" height="2.8" fill="#1478e6"/><rect x="248.5" y="298.4" width="2.1" height="2.8" fill="#1478e6"/><rect x="249.7" y="298.8" width="2.8" height="1.9" fill="#f0ec90"/><rect x="251.7" y="299.0" width="2.1" height="2.2" fill="#ff0000"/><rect x="253.6" y="298.0" width="1.2" height="9.2" fill="#1478e6"/><rect x="253.2" y="299.0" width="2.1" height="5.2" fill="#1478e6"/><rect x="255.2" y="299.5" width="1.2" height="5.2" fill="#1478e6"/><rect x="254.8" y="302.5" width="2.1" height="2.2" fill="#1478e6"/><rect x="256.8" y="303.1" width="1.2" height="8.9" fill="#1478e6"/><rect x="256.4" y="303.1" width="2.1" height="6.9" fill="#1478e6"/><rect x="258.4" y="306.4" width="1.2" height="7.6" fill="#1478e6"/><rect x="258.0" y="308.4" width="2.1" height="4.6" fill="#1478e6"/><rect x="259.6" y="310.2" width="2.1" height="2.8" fill="#ff0000"/><rect x="261.5" y="306.8" width="1.2" height="5.0" fill="#ff0000"/><rect x="261.1" y="307.8" width="2.1" height="4.0" fill="#ff0000"/><rect x="263.1" y="304.2" width="1.2" height="6.2" fill="#ff0000"/><rect x="262.7" y="307.2" width="2.1" height="2.2" fill="#ff0000"/><rect x="264.7" y="305.2" width="1.2" height="9.7" fill="#1478e6"/><rect x="264.3" y="307.2" width="2.1" height="5.7" fill="#1478e6"/><rect x="266.3" y="307.2" width="1.2" height="7.7" fill="#ff0000"/><rect x="265.9" y="307.2" width="2.1" height="5.7" fill="#ff0000"/><rect x="267.9" y="304.1" width="1.2" height="5.8" fill="#ff0000"/><rect x="267.5" y="306.1" width="2.1" height="2.8" fill="#ff0000"/><rect x="269.4" y="304.3" width="1.2" height="4.4" fill="#ff0000"/><rect x="269.0" y="304.3" width="2.1" height="3.4" fill="#ff0000"/><rect x="270.6" y="304.3" width="2.1" height="8.1" fill="#1478e6"/><rect x="272.6" y="309.2" width="1.2" height="4.2" fill="#ff0000"/><rect x="272.2" y="310.2" width="2.1" height="2.2" fill="#ff0000"/><rect x="274.2" y="304.2" width="1.2" height="7.6" fill="#ff0000"/><rect x="273.8" y="307.2" width="2.1" height="4.6" fill="#ff0000"/><rect x="275.8" y="305.2" width="1.2" height="7.0" fill="#1478e6"/><rect x="275.4" y="307.2" width="2.1" height="4.0" fill="#1478e6"/><rect x="276.5" y="310.0" width="2.8" height="1.9" fill="#f0ec90"/><rect x="278.5" y="307.8" width="2.1" height="4.6" fill="#ff0000"/><rect x="280.5" y="306.8" width="1.2" height="8.2" fill="#1478e6"/><rect x="280.1" y="307.8" width="2.1" height="5.2" fill="#1478e6"/><rect x="282.1" y="308.8" width="1.2" height="7.2" fill="#ff0000"/><rect x="281.7" y="310.8" width="2.1" height="2.2" fill="#ff0000"/><rect x="283.7" y="305.2" width="1.2" height="9.2" fill="#ff0000"/><rect x="283.3" y="307.2" width="2.1" height="5.2" fill="#ff0000"/><rect x="285.2" y="307.2" width="1.2" height="4.4" fill="#1478e6"/><rect x="284.8" y="307.2" width="2.1" height="3.4" fill="#1478e6"/><rect x="286.8" y="305.5" width="1.2" height="7.2" fill="#ff0000"/><rect x="286.4" y="305.5" width="2.1" height="5.2" fill="#ff0000"/><rect x="288.4" y="304.5" width="1.2" height="8.9" fill="#1478e6"/><rect x="288.0" y="305.5" width="2.1" height="6.9" fill="#1478e6"/><rect x="290.0" y="308.8" width="1.2" height="6.6" fill="#1478e6"/><rect x="289.6" y="310.8" width="2.1" height="4.6" fill="#1478e6"/><rect x="291.6" y="310.8" width="1.2" height="12.5" fill="#1478e6"/><rect x="291.2" y="313.8" width="2.1" height="7.5" fill="#1478e6"/><rect x="292.3" y="320.7" width="2.8" height="1.9" fill="#f0ec90"/><rect x="293.9" y="320.7" width="2.8" height="1.9" fill="#f0ec90"/><rect x="296.3" y="311.2" width="1.2" height="12.9" fill="#ff0000"/><rect x="295.9" y="313.2" width="2.1" height="9.9" fill="#ff0000"/><rect x="297.1" y="312.4" width="2.8" height="1.9" fill="#f0ec90"/><rect x="299.1" y="313.2" width="2.1" height="4.6" fill="#1478e6"/><rect x="300.2" y="314.7" width="2.8" height="1.9" fill="#f0ec90"/><rect x="301.8" y="314.7" width="2.8" height="1.9" fill="#f0ec90"/><rect x="304.2" y="314.5" width="1.2" height="7.4" fill="#1478e6"/><rect x="303.8" y="315.5" width="2.1" height="3.4" fill="#1478e6"/><rect x="305.8" y="315.3" width="1.2" height="6.8" fill="#1478e6"/><rect x="305.4" y="317.3" width="2.1" height="2.8" fill="#1478e6"/><rect x="307.4" y="318.5" width="1.2" height="4.8" fill="#1478e6"/><rect x="307.0" y="318.5" width="2.1" height="2.8" fill="#1478e6"/><rect x="308.9" y="316.7" width="1.2" height="6.2" fill="#1478e6"/><rect x="308.5" y="319.7" width="2.1" height="2.2" fill="#1478e6"/><rect x="310.5" y="317.3" width="1.2" height="12.3" fill="#1478e6"/><rect x="310.1" y="320.3" width="2.1" height="6.3" fill="#1478e6"/><rect x="312.1" y="319.9" width="1.2" height="6.7" fill="#ff0000"/><rect x="311.7" y="320.9" width="2.1" height="5.7" fill="#ff0000"/><rect x="313.7" y="315.9" width="1.2" height="8.6" fill="#ff0000"/><rect x="313.3" y="317.9" width="2.1" height="4.6" fill="#ff0000"/><rect x="314.9" y="317.9" width="2.1" height="7.5" fill="#1478e6"/><rect x="316.0" y="321.2" width="2.8" height="1.9" fill="#f0ec90"/><rect x="318.4" y="318.5" width="1.2" height="7.2" fill="#ff0000"/><rect x="318.0" y="321.5" width="2.1" height="2.2" fill="#ff0000"/><rect x="320.0" y="315.3" width="1.2" height="10.7" fill="#ff0000"/><rect x="319.6" y="317.3" width="2.1" height="5.7" fill="#ff0000"/><rect x="321.2" y="317.3" width="2.1" height="8.1" fill="#1478e6"/><rect x="323.2" y="317.3" width="1.2" height="8.2" fill="#ff0000"/><rect x="322.8" y="320.3" width="2.1" height="5.2" fill="#ff0000"/><rect x="324.7" y="318.3" width="1.2" height="11.3" fill="#1478e6"/><rect x="324.3" y="320.3" width="2.1" height="9.3" fill="#1478e6"/><rect x="325.9" y="328.0" width="2.1" height="2.8" fill="#1478e6"/><rect x="327.9" y="328.2" width="1.2" height="6.2" fill="#1478e6"/><rect x="327.5" y="329.2" width="2.1" height="5.2" fill="#1478e6"/><rect x="329.5" y="329.7" width="1.2" height="8.4" fill="#1478e6"/><rect x="329.1" y="332.7" width="2.1" height="3.4" fill="#1478e6"/><rect x="330.3" y="336.6" width="2.8" height="1.9" fill="#f0ec90"/><rect x="332.6" y="334.4" width="1.2" height="6.4" fill="#1478e6"/><rect x="332.2" y="337.4" width="2.1" height="3.4" fill="#1478e6"/><rect x="334.2" y="338.0" width="1.2" height="5.8" fill="#ff0000"/><rect x="333.8" y="338.0" width="2.1" height="2.8" fill="#ff0000"/><rect x="335.8" y="336.0" width="1.2" height="5.2" fill="#1478e6"/><rect x="335.4" y="338.0" width="2.1" height="2.2" fill="#1478e6"/><rect x="337.4" y="336.6" width="1.2" height="8.4" fill="#1478e6"/><rect x="337.0" y="338.6" width="2.1" height="3.4" fill="#1478e6"/><rect x="338.6" y="338.0" width="2.1" height="4.0" fill="#ff0000"/><rect x="340.1" y="338.0" width="2.1" height="2.8" fill="#1478e6"/><rect x="342.1" y="334.3" width="1.2" height="6.6" fill="#ff0000"/><rect x="341.7" y="336.3" width="2.1" height="4.6" fill="#ff0000"/><rect x="343.7" y="335.1" width="1.2" height="4.8" fill="#ff0000"/><rect x="343.3" y="335.1" width="2.1" height="2.8" fill="#ff0000"/><rect x="344.5" y="335.5" width="2.8" height="1.9" fill="#f0ec90"/><rect x="346.5" y="333.9" width="2.1" height="4.0" fill="#ff0000"/><rect x="348.4" y="330.9" width="1.2" height="5.8" fill="#1478e6"/><rect x="348.0" y="333.9" width="2.1" height="2.8" fill="#1478e6"/><rect x="349.2" y="334.3" width="2.8" height="1.9" fill="#f0ec90"/><rect x="351.2" y="335.1" width="2.1" height="5.2" fill="#1478e6"/><rect x="353.2" y="334.5" width="1.2" height="8.7" fill="#ff0000"/><rect x="352.8" y="334.5" width="2.1" height="5.7" fill="#ff0000"/><rect x="354.4" y="333.9" width="2.1" height="2.2" fill="#ff0000"/><rect x="356.3" y="326.7" width="1.2" height="8.7" fill="#ff0000"/><rect x="355.9" y="329.7" width="2.1" height="5.7" fill="#ff0000"/><rect x="357.5" y="329.7" width="2.1" height="2.8" fill="#1478e6"/><rect x="359.1" y="330.9" width="2.1" height="4.0" fill="#1478e6"/><rect x="360.3" y="332.5" width="2.8" height="1.9" fill="#f0ec90"/><rect x="362.3" y="329.7" width="2.1" height="5.2" fill="#ff0000"/><rect x="364.2" y="328.7" width="1.2" height="5.6" fill="#1478e6"/><rect x="363.8" y="329.7" width="2.1" height="4.6" fill="#1478e6"/><rect x="365.8" y="332.7" width="1.2" height="3.8" fill="#1478e6"/><rect x="365.4" y="332.7" width="2.1" height="2.8" fill="#1478e6"/><rect x="367.4" y="331.9" width="1.2" height="7.0" fill="#1478e6"/><rect x="367.0" y="333.9" width="2.1" height="4.0" fill="#1478e6"/><rect x="368.2" y="335.5" width="2.8" height="1.9" fill="#f0ec90"/><rect x="369.8" y="333.1" width="2.8" height="1.9" fill="#f0ec90"/><rect x="372.1" y="332.7" width="1.2" height="5.8" fill="#ff0000"/><rect x="371.7" y="332.7" width="2.1" height="2.8" fill="#ff0000"/><rect x="373.7" y="331.5" width="1.2" height="4.8" fill="#ff0000"/><rect x="373.3" y="331.5" width="2.1" height="2.8" fill="#ff0000"/><rect x="375.3" y="326.0" width="1.2" height="7.2" fill="#ff0000"/><rect x="374.9" y="328.0" width="2.1" height="5.2" fill="#ff0000"/><rect x="376.1" y="329.5" width="2.8" height="1.9" fill="#f0ec90"/><rect x="378.5" y="327.4" width="1.2" height="5.6" fill="#ff0000"/><rect x="378.1" y="327.4" width="2.1" height="4.6" fill="#ff0000"/><rect x="380.0" y="324.8" width="1.2" height="4.2" fill="#ff0000"/><rect x="379.6" y="326.8" width="2.1" height="2.2" fill="#ff0000"/><rect x="381.6" y="323.6" width="1.2" height="4.8" fill="#ff0000"/><rect x="381.2" y="325.6" width="2.1" height="2.8" fill="#ff0000"/><rect x="383.2" y="321.8" width="1.2" height="5.4" fill="#ff0000"/><rect x="382.8" y="323.8" width="2.1" height="3.4" fill="#ff0000"/><rect x="384.0" y="323.0" width="2.8" height="1.9" fill="#f0ec90"/><rect x="386.4" y="323.2" width="1.2" height="5.2" fill="#ff0000"/><rect x="386.0" y="323.2" width="2.1" height="2.2" fill="#ff0000"/><rect x="387.9" y="319.0" width="1.2" height="5.8" fill="#ff0000"/><rect x="387.5" y="322.0" width="2.1" height="2.8" fill="#ff0000"/><rect x="389.5" y="321.0" width="1.2" height="4.8" fill="#1478e6"/><rect x="389.1" y="322.0" width="2.1" height="2.8" fill="#1478e6"/><rect x="390.7" y="322.6" width="2.1" height="2.2" fill="#ff0000"/><rect x="392.7" y="322.6" width="1.2" height="8.9" fill="#1478e6"/><rect x="392.3" y="322.6" width="2.1" height="6.9" fill="#1478e6"/><rect x="394.3" y="327.0" width="1.2" height="5.2" fill="#1478e6"/><rect x="393.9" y="328.0" width="2.1" height="2.2" fill="#1478e6"/><rect x="395.0" y="327.8" width="2.8" height="1.9" fill="#f0ec90"/><rect x="397.4" y="328.6" width="1.2" height="5.6" fill="#1478e6"/><rect x="397.0" y="328.6" width="2.1" height="4.6" fill="#1478e6"/><rect x="399.0" y="331.5" width="1.2" height="6.4" fill="#1478e6"/><rect x="398.6" y="331.5" width="2.1" height="3.4" fill="#1478e6"/><rect x="400.6" y="330.3" width="1.2" height="7.6" fill="#1478e6"/><rect x="400.2" y="333.3" width="2.1" height="4.6" fill="#1478e6"/><rect x="402.2" y="334.3" width="1.2" height="9.5" fill="#1478e6"/><rect x="401.8" y="336.3" width="2.1" height="7.5" fill="#1478e6"/><rect x="402.9" y="342.0" width="2.8" height="1.9" fill="#f0ec90"/><rect x="405.3" y="341.8" width="1.2" height="4.4" fill="#1478e6"/><rect x="404.9" y="342.8" width="2.1" height="3.4" fill="#1478e6"/><rect x="406.9" y="343.5" width="1.2" height="10.3" fill="#1478e6"/><rect x="406.5" y="344.5" width="2.1" height="6.3" fill="#1478e6"/><rect x="407.7" y="347.9" width="2.8" height="1.9" fill="#f0ec90"/><rect x="410.1" y="346.7" width="1.2" height="5.4" fill="#1478e6"/><rect x="409.7" y="348.7" width="2.1" height="3.4" fill="#1478e6"/><rect x="411.6" y="348.5" width="1.2" height="6.8" fill="#1478e6"/><rect x="411.2" y="350.5" width="2.1" height="2.8" fill="#1478e6"/><rect x="413.2" y="350.5" width="1.2" height="3.8" fill="#ff0000"/><rect x="412.8" y="350.5" width="2.1" height="2.8" fill="#ff0000"/><rect x="414.8" y="346.9" width="1.2" height="6.2" fill="#ff0000"/><rect x="414.4" y="349.9" width="2.1" height="2.2" fill="#ff0000"/><rect x="415.6" y="349.1" width="2.8" height="1.9" fill="#f0ec90"/><rect x="417.6" y="349.9" width="2.1" height="3.4" fill="#1478e6"/><rect x="419.5" y="346.9" width="1.2" height="6.4" fill="#ff0000"/><rect x="419.1" y="349.9" width="2.1" height="3.4" fill="#ff0000"/><rect x="421.1" y="347.3" width="1.2" height="5.2" fill="#ff0000"/><rect x="420.7" y="349.3" width="2.1" height="2.2" fill="#ff0000"/><rect x="421.9" y="348.5" width="2.8" height="1.9" fill="#f0ec90"/><rect x="424.3" y="346.3" width="1.2" height="6.6" fill="#ff0000"/><rect x="423.9" y="346.3" width="2.1" height="4.6" fill="#ff0000"/><rect x="425.9" y="344.5" width="1.2" height="5.4" fill="#ff0000"/><rect x="425.5" y="344.5" width="2.1" height="3.4" fill="#ff0000"/><rect x="427.4" y="342.2" width="1.2" height="5.0" fill="#ff0000"/><rect x="427.0" y="342.2" width="2.1" height="4.0" fill="#ff0000"/><rect x="429.0" y="336.8" width="1.2" height="7.0" fill="#ff0000"/><rect x="428.6" y="339.8" width="2.1" height="4.0" fill="#ff0000"/><rect x="430.6" y="337.0" width="1.2" height="7.4" fill="#ff0000"/><rect x="430.2" y="338.0" width="2.1" height="3.4" fill="#ff0000"/><rect x="431.8" y="337.4" width="2.1" height="2.2" fill="#ff0000"/><rect x="433.8" y="330.9" width="1.2" height="9.2" fill="#ff0000"/><rect x="433.4" y="333.9" width="2.1" height="5.2" fill="#ff0000"/><rect x="435.3" y="333.3" width="1.2" height="3.2" fill="#ff0000"/><rect x="434.9" y="333.3" width="2.1" height="2.2" fill="#ff0000"/><rect x="436.1" y="333.1" width="2.8" height="1.9" fill="#f0ec90"/><rect x="438.5" y="330.5" width="1.2" height="7.0" fill="#ff0000"/><rect x="438.1" y="331.5" width="2.1" height="4.0" fill="#ff0000"/><rect x="440.1" y="326.8" width="1.2" height="9.3" fill="#ff0000"/><rect x="439.7" y="326.8" width="2.1" height="6.3" fill="#ff0000"/><rect x="441.7" y="323.2" width="1.2" height="7.2" fill="#ff0000"/><rect x="441.3" y="326.2" width="2.1" height="2.2" fill="#ff0000"/><rect x="442.4" y="328.4" width="2.8" height="1.9" fill="#f0ec90"/><rect x="444.8" y="326.2" width="1.2" height="8.2" fill="#1478e6"/><rect x="444.4" y="329.2" width="2.1" height="5.2" fill="#1478e6"/><rect x="446.4" y="330.7" width="1.2" height="7.6" fill="#1478e6"/><rect x="446.0" y="332.7" width="2.1" height="4.6" fill="#1478e6"/><rect x="447.2" y="334.9" width="2.8" height="1.9" fill="#f0ec90"/><rect x="449.6" y="335.7" width="1.2" height="5.6" fill="#1478e6"/><rect x="449.2" y="335.7" width="2.1" height="4.6" fill="#1478e6"/><rect x="451.1" y="338.6" width="1.2" height="3.8" fill="#1478e6"/><rect x="450.7" y="338.6" width="2.1" height="2.8" fill="#1478e6"/><rect x="452.7" y="334.3" width="1.2" height="9.2" fill="#ff0000"/><rect x="452.3" y="336.3" width="2.1" height="5.2" fill="#ff0000"/><rect x="454.3" y="334.3" width="1.2" height="4.8" fill="#1478e6"/><rect x="453.9" y="336.3" width="2.1" height="2.8" fill="#1478e6"/><rect x="455.9" y="335.4" width="1.2" height="7.8" fill="#1478e6"/><rect x="455.5" y="337.4" width="2.1" height="2.8" fill="#1478e6"/><rect x="457.1" y="338.6" width="2.1" height="3.4" fill="#1478e6"/><rect x="459.0" y="337.2" width="1.2" height="4.8" fill="#ff0000"/><rect x="458.6" y="339.2" width="2.1" height="2.8" fill="#ff0000"/><rect x="460.2" y="336.3" width="2.1" height="4.6" fill="#ff0000"/><rect x="461.4" y="335.5" width="2.8" height="1.9" fill="#f0ec90"/><rect x="463.4" y="335.1" width="2.1" height="2.8" fill="#ff0000"/><rect x="464.6" y="334.3" width="2.8" height="1.9" fill="#f0ec90"/><rect x="466.9" y="330.9" width="1.2" height="6.7" fill="#ff0000"/><rect x="466.5" y="330.9" width="2.1" height="5.7" fill="#ff0000"/><rect x="467.7" y="330.7" width="2.8" height="1.9" fill="#f0ec90"/><rect x="470.1" y="331.5" width="1.2" height="6.4" fill="#1478e6"/><rect x="469.7" y="331.5" width="2.1" height="3.4" fill="#1478e6"/><rect x="471.7" y="325.4" width="1.2" height="9.5" fill="#ff0000"/><rect x="471.3" y="327.4" width="2.1" height="7.5" fill="#ff0000"/><rect x="472.9" y="326.8" width="2.1" height="2.2" fill="#ff0000"/><rect x="474.8" y="319.0" width="1.2" height="9.3" fill="#ff0000"/><rect x="474.4" y="322.0" width="2.1" height="6.3" fill="#ff0000"/><rect x="476.4" y="318.9" width="1.2" height="7.8" fill="#ff0000"/><rect x="476.0" y="320.9" width="2.1" height="2.8" fill="#ff0000"/><rect x="478.0" y="316.3" width="1.2" height="6.2" fill="#ff0000"/><rect x="477.6" y="317.3" width="2.1" height="5.2" fill="#ff0000"/><rect x="479.2" y="317.3" width="2.1" height="2.8" fill="#1478e6"/><rect x="481.2" y="318.5" width="1.2" height="3.2" fill="#1478e6"/><rect x="480.8" y="318.5" width="2.1" height="2.2" fill="#1478e6"/><rect x="482.7" y="315.7" width="1.2" height="7.0" fill="#ff0000"/><rect x="482.3" y="316.7" width="2.1" height="4.0" fill="#ff0000"/><rect x="484.3" y="314.9" width="1.2" height="5.4" fill="#ff0000"/><rect x="483.9" y="314.9" width="2.1" height="3.4" fill="#ff0000"/><rect x="485.5" y="312.6" width="2.1" height="4.0" fill="#ff0000"/><rect x="486.7" y="313.0" width="2.8" height="1.9" fill="#f0ec90"/><rect x="489.1" y="310.8" width="1.2" height="9.0" fill="#1478e6"/><rect x="488.7" y="313.8" width="2.1" height="4.0" fill="#1478e6"/><rect x="490.6" y="313.5" width="1.2" height="6.2" fill="#ff0000"/><rect x="490.2" y="315.5" width="2.1" height="2.2" fill="#ff0000"/><rect x="492.2" y="315.5" width="1.2" height="4.2" fill="#1478e6"/><rect x="491.8" y="315.5" width="2.1" height="2.2" fill="#1478e6"/><rect x="493.4" y="316.1" width="2.1" height="2.2" fill="#1478e6"/><rect x="495.4" y="313.7" width="1.2" height="5.8" fill="#1478e6"/><rect x="495.0" y="316.7" width="2.1" height="2.8" fill="#1478e6"/><rect x="496.2" y="318.9" width="2.8" height="1.9" fill="#f0ec90"/><rect x="498.1" y="319.7" width="2.1" height="2.2" fill="#1478e6"/><rect x="500.1" y="317.3" width="1.2" height="7.6" fill="#1478e6"/><rect x="499.7" y="320.3" width="2.1" height="4.6" fill="#1478e6"/><rect x="501.3" y="323.2" width="2.1" height="5.7" fill="#1478e6"/><rect x="503.3" y="326.4" width="1.2" height="12.1" fill="#1478e6"/><rect x="502.9" y="327.4" width="2.1" height="8.1" fill="#1478e6"/><rect x="504.9" y="331.1" width="1.2" height="6.4" fill="#ff0000"/><rect x="504.5" y="332.1" width="2.1" height="3.4" fill="#ff0000"/><rect x="506.4" y="326.2" width="1.2" height="9.6" fill="#ff0000"/><rect x="506.0" y="329.2" width="2.1" height="4.6" fill="#ff0000"/><rect x="508.0" y="327.6" width="1.2" height="4.2" fill="#ff0000"/><rect x="507.6" y="328.6" width="2.1" height="2.2" fill="#ff0000"/><rect x="508.8" y="327.8" width="2.8" height="1.9" fill="#f0ec90"/><rect x="510.4" y="327.8" width="2.8" height="1.9" fill="#f0ec90"/><rect x="512.8" y="325.8" width="1.2" height="5.4" fill="#ff0000"/><rect x="512.4" y="326.8" width="2.1" height="3.4" fill="#ff0000"/><rect x="513.5" y="326.0" width="2.8" height="1.9" fill="#f0ec90"/><rect x="515.9" y="324.4" width="1.2" height="7.0" fill="#ff0000"/><rect x="515.5" y="324.4" width="2.1" height="4.0" fill="#ff0000"/><rect x="517.5" y="322.4" width="1.2" height="7.8" fill="#1478e6"/><rect x="517.1" y="324.4" width="2.1" height="2.8" fill="#1478e6"/><rect x="519.1" y="323.2" width="1.2" height="5.0" fill="#ff0000"/><rect x="518.7" y="323.2" width="2.1" height="4.0" fill="#ff0000"/><rect x="520.7" y="321.0" width="1.2" height="4.8" fill="#ff0000"/><rect x="520.3" y="322.0" width="2.1" height="2.8" fill="#ff0000"/><rect x="522.2" y="317.5" width="1.2" height="9.2" fill="#ff0000"/><rect x="521.8" y="318.5" width="2.1" height="5.2" fill="#ff0000"/><rect x="523.0" y="315.3" width="2.8" height="1.9" fill="#f0ec90"/><rect x="525.4" y="311.4" width="1.2" height="6.4" fill="#ff0000"/><rect x="525.0" y="314.4" width="2.1" height="3.4" fill="#ff0000"/><rect x="527.0" y="307.8" width="1.2" height="9.2" fill="#ff0000"/><rect x="526.6" y="310.8" width="2.1" height="5.2" fill="#ff0000"/><rect x="528.2" y="310.2" width="2.1" height="2.2" fill="#ff0000"/><rect x="530.1" y="306.0" width="1.2" height="6.8" fill="#ff0000"/><rect x="529.7" y="309.0" width="2.1" height="2.8" fill="#ff0000"/><rect x="531.7" y="308.4" width="1.2" height="4.2" fill="#ff0000"/><rect x="531.3" y="308.4" width="2.1" height="2.2" fill="#ff0000"/><rect x="532.5" y="305.9" width="2.8" height="1.9" fill="#f0ec90"/><rect x="534.1" y="305.9" width="2.8" height="1.9" fill="#f0ec90"/><rect x="535.7" y="305.3" width="2.8" height="1.9" fill="#f0ec90"/><rect x="538.0" y="303.1" width="1.2" height="6.6" fill="#ff0000"/><rect x="537.6" y="303.1" width="2.1" height="4.6" fill="#ff0000"/><rect x="539.6" y="299.5" width="1.2" height="7.2" fill="#ff0000"/><rect x="539.2" y="302.5" width="2.1" height="2.2" fill="#ff0000"/><rect x="540.8" y="302.5" width="2.1" height="4.0" fill="#1478e6"/><rect x="542.8" y="304.9" width="1.2" height="6.7" fill="#1478e6"/><rect x="542.4" y="304.9" width="2.1" height="5.7" fill="#1478e6"/><rect x="544.4" y="308.0" width="1.2" height="5.0" fill="#1478e6"/><rect x="544.0" y="309.0" width="2.1" height="4.0" fill="#1478e6"/><rect x="545.9" y="308.4" width="1.2" height="14.7" fill="#1478e6"/><rect x="545.5" y="311.4" width="2.1" height="8.7" fill="#1478e6"/><rect x="547.5" y="315.5" width="1.2" height="8.4" fill="#1478e6"/><rect x="547.1" y="318.5" width="2.1" height="3.4" fill="#1478e6"/><rect x="548.3" y="320.7" width="2.8" height="1.9" fill="#f0ec90"/><rect x="550.7" y="319.5" width="1.2" height="8.3" fill="#1478e6"/><rect x="550.3" y="321.5" width="2.1" height="6.3" fill="#1478e6"/><rect x="552.3" y="325.6" width="1.2" height="5.2" fill="#ff0000"/><rect x="551.9" y="325.6" width="2.1" height="2.2" fill="#ff0000"/><rect x="553.4" y="325.6" width="2.1" height="2.8" fill="#1478e6"/><rect x="555.4" y="323.6" width="1.2" height="7.8" fill="#ff0000"/><rect x="555.0" y="325.6" width="2.1" height="2.8" fill="#ff0000"/><rect x="557.0" y="324.6" width="1.2" height="5.6" fill="#1478e6"/><rect x="556.6" y="325.6" width="2.1" height="4.6" fill="#1478e6"/><rect x="558.6" y="326.6" width="1.2" height="7.2" fill="#1478e6"/><rect x="558.2" y="328.6" width="2.1" height="2.2" fill="#1478e6"/><rect x="559.4" y="330.1" width="2.8" height="1.9" fill="#f0ec90"/><rect x="561.7" y="328.9" width="1.2" height="6.0" fill="#1478e6"/><rect x="561.3" y="330.9" width="2.1" height="4.0" fill="#1478e6"/><rect x="563.3" y="331.5" width="1.2" height="4.4" fill="#ff0000"/><rect x="562.9" y="331.5" width="2.1" height="3.4" fill="#ff0000"/><rect x="564.9" y="330.5" width="1.2" height="4.4" fill="#1478e6"/><rect x="564.5" y="331.5" width="2.1" height="3.4" fill="#1478e6"/><rect x="566.5" y="330.3" width="1.2" height="8.4" fill="#1478e6"/><rect x="566.1" y="333.3" width="2.1" height="3.4" fill="#1478e6"/><rect x="568.1" y="333.5" width="1.2" height="3.2" fill="#ff0000"/><rect x="567.7" y="334.5" width="2.1" height="2.2" fill="#ff0000"/><rect x="568.8" y="331.9" width="2.8" height="1.9" fill="#f0ec90"/><rect x="570.8" y="332.7" width="2.1" height="2.8" fill="#1478e6"/><rect x="572.8" y="332.9" width="1.2" height="4.4" fill="#1478e6"/><rect x="572.4" y="333.9" width="2.1" height="3.4" fill="#1478e6"/><rect x="574.4" y="332.7" width="1.2" height="9.0" fill="#1478e6"/><rect x="574.0" y="335.7" width="2.1" height="4.0" fill="#1478e6"/><rect x="576.0" y="334.4" width="1.2" height="5.2" fill="#ff0000"/><rect x="575.6" y="337.4" width="2.1" height="2.2" fill="#ff0000"/><rect x="577.5" y="334.4" width="1.2" height="8.0" fill="#1478e6"/><rect x="577.1" y="337.4" width="2.1" height="4.0" fill="#1478e6"/><rect x="579.1" y="336.6" width="1.2" height="7.8" fill="#ff0000"/><rect x="578.7" y="338.6" width="2.1" height="2.8" fill="#ff0000"/><rect x="580.3" y="337.4" width="2.1" height="2.8" fill="#ff0000"/><rect x="581.5" y="337.2" width="2.8" height="1.9" fill="#f0ec90"/><rect x="583.5" y="338.0" width="2.1" height="2.2" fill="#1478e6"/><rect x="584.6" y="338.4" width="2.8" height="1.9" fill="#f0ec90"/><rect x="586.6" y="339.2" width="2.1" height="2.8" fill="#1478e6"/><rect x="587.8" y="339.6" width="2.8" height="1.9" fill="#f0ec90"/><rect x="590.2" y="337.4" width="1.2" height="8.7" fill="#1478e6"/><rect x="589.8" y="340.4" width="2.1" height="5.7" fill="#1478e6"/><rect x="591.8" y="342.0" width="1.2" height="4.2" fill="#ff0000"/><rect x="591.4" y="344.0" width="2.1" height="2.2" fill="#ff0000"/><rect x="592.5" y="344.9" width="2.8" height="1.9" fill="#f0ec90"/><rect x="594.9" y="345.7" width="1.2" height="5.6" fill="#1478e6"/><rect x="594.5" y="345.7" width="2.1" height="4.6" fill="#1478e6"/><rect x="596.5" y="348.7" width="1.2" height="3.2" fill="#1478e6"/><rect x="596.1" y="348.7" width="2.1" height="2.2" fill="#1478e6"/><rect x="598.1" y="347.3" width="1.2" height="6.4" fill="#1478e6"/><rect x="597.7" y="349.3" width="2.1" height="3.4" fill="#1478e6"/><rect x="599.7" y="350.1" width="1.2" height="6.0" fill="#1478e6"/><rect x="599.3" y="351.1" width="2.1" height="4.0" fill="#1478e6"/><rect x="601.2" y="350.4" width="1.2" height="8.8" fill="#1478e6"/><rect x="600.8" y="353.4" width="2.1" height="2.8" fill="#1478e6"/><rect x="602.8" y="352.0" width="1.2" height="4.2" fill="#ff0000"/><rect x="602.4" y="354.0" width="2.1" height="2.2" fill="#ff0000"/><rect x="603.6" y="353.2" width="2.8" height="1.9" fill="#f0ec90"/><rect x="606.0" y="351.1" width="1.2" height="7.6" fill="#ff0000"/><rect x="605.6" y="351.1" width="2.1" height="4.6" fill="#ff0000"/><rect x="607.6" y="351.1" width="1.2" height="5.8" fill="#1478e6"/><rect x="607.2" y="351.1" width="2.1" height="2.8" fill="#1478e6"/><rect x="608.3" y="351.4" width="2.8" height="1.9" fill="#f0ec90"/><rect x="609.9" y="349.7" width="2.8" height="1.9" fill="#f0ec90"/><rect x="612.3" y="350.5" width="1.2" height="3.2" fill="#1478e6"/><rect x="611.9" y="350.5" width="2.1" height="2.2" fill="#1478e6"/><rect x="613.9" y="349.1" width="1.2" height="5.4" fill="#1478e6"/><rect x="613.5" y="351.1" width="2.1" height="3.4" fill="#1478e6"/><rect x="614.7" y="352.0" width="2.8" height="1.9" fill="#f0ec90"/><rect x="617.0" y="346.9" width="1.2" height="8.6" fill="#ff0000"/><rect x="616.6" y="349.9" width="2.1" height="4.6" fill="#ff0000"/><rect x="618.6" y="346.9" width="1.2" height="6.6" fill="#ff0000"/><rect x="618.2" y="346.9" width="2.1" height="4.6" fill="#ff0000"/><rect x="620.2" y="345.7" width="1.2" height="4.8" fill="#ff0000"/><rect x="619.8" y="345.7" width="2.1" height="2.8" fill="#ff0000"/><rect x="621.8" y="344.1" width="1.2" height="4.2" fill="#ff0000"/><rect x="621.4" y="345.1" width="2.1" height="2.2" fill="#ff0000"/><rect x="623.4" y="339.0" width="1.2" height="7.7" fill="#ff0000"/><rect x="623.0" y="341.0" width="2.1" height="5.7" fill="#ff0000"/><rect x="624.9" y="338.2" width="1.2" height="5.4" fill="#ff0000"/><rect x="624.5" y="339.2" width="2.1" height="3.4" fill="#ff0000"/><rect x="626.5" y="336.2" width="1.2" height="8.8" fill="#1478e6"/><rect x="626.1" y="339.2" width="2.1" height="2.8" fill="#1478e6"/><rect x="628.1" y="338.4" width="1.2" height="5.4" fill="#1478e6"/><rect x="627.7" y="340.4" width="2.1" height="3.4" fill="#1478e6"/><rect x="629.7" y="339.2" width="1.2" height="7.0" fill="#1478e6"/><rect x="629.3" y="342.2" width="2.1" height="4.0" fill="#1478e6"/><rect x="631.3" y="338.4" width="1.2" height="10.7" fill="#ff0000"/><rect x="630.9" y="340.4" width="2.1" height="5.7" fill="#ff0000"/><rect x="632.8" y="340.4" width="1.2" height="5.4" fill="#1478e6"/><rect x="632.4" y="340.4" width="2.1" height="3.4" fill="#1478e6"/><rect x="634.4" y="339.8" width="1.2" height="5.0" fill="#ff0000"/><rect x="634.0" y="339.8" width="2.1" height="4.0" fill="#ff0000"/><rect x="636.0" y="339.8" width="1.2" height="7.6" fill="#1478e6"/><rect x="635.6" y="339.8" width="2.1" height="4.6" fill="#1478e6"/><rect x="637.6" y="339.8" width="1.2" height="7.0" fill="#1478e6"/><rect x="637.2" y="342.8" width="2.1" height="4.0" fill="#1478e6"/><rect x="639.2" y="345.1" width="1.2" height="5.0" fill="#1478e6"/><rect x="638.8" y="345.1" width="2.1" height="4.0" fill="#1478e6"/><rect x="640.7" y="346.9" width="1.2" height="3.2" fill="#ff0000"/><rect x="640.3" y="346.9" width="2.1" height="2.2" fill="#ff0000"/><rect x="641.9" y="345.1" width="2.1" height="3.4" fill="#ff0000"/><rect x="643.1" y="344.3" width="2.8" height="1.9" fill="#f0ec90"/><rect x="645.5" y="344.0" width="1.2" height="3.8" fill="#ff0000"/><rect x="645.1" y="344.0" width="2.1" height="2.8" fill="#ff0000"/><rect x="647.1" y="342.2" width="1.2" height="4.4" fill="#ff0000"/><rect x="646.7" y="342.2" width="2.1" height="3.4" fill="#ff0000"/><rect x="648.6" y="337.2" width="1.2" height="8.6" fill="#ff0000"/><rect x="648.2" y="339.2" width="2.1" height="4.6" fill="#ff0000"/><rect x="650.2" y="339.2" width="1.2" height="9.3" fill="#1478e6"/><rect x="649.8" y="339.2" width="2.1" height="6.3" fill="#1478e6"/><rect x="651.8" y="343.0" width="1.2" height="7.0" fill="#1478e6"/><rect x="651.4" y="344.0" width="2.1" height="4.0" fill="#1478e6"/><rect x="653.0" y="346.3" width="2.1" height="5.7" fill="#1478e6"/><rect x="655.0" y="348.5" width="1.2" height="8.4" fill="#1478e6"/><rect x="654.6" y="350.5" width="2.1" height="3.4" fill="#1478e6"/><rect x="656.5" y="345.1" width="1.2" height="8.7" fill="#ff0000"/><rect x="656.1" y="348.1" width="2.1" height="5.7" fill="#ff0000"/><rect x="658.1" y="345.7" width="1.2" height="6.0" fill="#ff0000"/><rect x="657.7" y="345.7" width="2.1" height="4.0" fill="#ff0000"/><rect x="659.7" y="342.0" width="1.2" height="5.4" fill="#ff0000"/><rect x="659.3" y="344.0" width="2.1" height="3.4" fill="#ff0000"/><rect x="660.5" y="343.2" width="2.8" height="1.9" fill="#f0ec90"/><rect x="662.9" y="342.4" width="1.2" height="5.2" fill="#ff0000"/><rect x="662.5" y="343.4" width="2.1" height="2.2" fill="#ff0000"/><rect x="664.4" y="339.2" width="1.2" height="8.7" fill="#ff0000"/><rect x="664.0" y="339.2" width="2.1" height="5.7" fill="#ff0000"/><rect x="666.0" y="339.2" width="1.2" height="3.2" fill="#1478e6"/><rect x="665.6" y="339.2" width="2.1" height="2.2" fill="#1478e6"/><rect x="667.6" y="336.6" width="1.2" height="6.8" fill="#ff0000"/><rect x="667.2" y="338.6" width="2.1" height="2.8" fill="#ff0000"/><rect x="668.8" y="338.6" width="2.1" height="4.6" fill="#1478e6"/><rect x="670.8" y="341.6" width="1.2" height="6.4" fill="#1478e6"/><rect x="670.4" y="341.6" width="2.1" height="3.4" fill="#1478e6"/><rect x="672.3" y="343.4" width="1.2" height="4.2" fill="#1478e6"/><rect x="671.9" y="343.4" width="2.1" height="2.2" fill="#1478e6"/><rect x="673.9" y="343.0" width="1.2" height="11.5" fill="#1478e6"/><rect x="673.5" y="344.0" width="2.1" height="7.5" fill="#1478e6"/><rect x="674.7" y="349.1" width="2.8" height="1.9" fill="#f0ec90"/><rect x="677.1" y="349.9" width="1.2" height="7.7" fill="#1478e6"/><rect x="676.7" y="349.9" width="2.1" height="5.7" fill="#1478e6"/><rect x="678.7" y="345.1" width="1.2" height="11.5" fill="#ff0000"/><rect x="678.3" y="348.1" width="2.1" height="7.5" fill="#ff0000"/><rect x="680.2" y="347.1" width="1.2" height="4.2" fill="#1478e6"/><rect x="679.8" y="348.1" width="2.1" height="2.2" fill="#1478e6"/><rect x="681.0" y="347.3" width="2.8" height="1.9" fill="#f0ec90"/><rect x="682.6" y="347.3" width="2.8" height="1.9" fill="#f0ec90"/><rect x="685.0" y="345.1" width="1.2" height="7.4" fill="#1478e6"/><rect x="684.6" y="348.1" width="2.1" height="3.4" fill="#1478e6"/><rect x="686.6" y="344.7" width="1.2" height="8.7" fill="#ff0000"/><rect x="686.2" y="345.7" width="2.1" height="5.7" fill="#ff0000"/><rect x="688.1" y="343.1" width="1.2" height="6.2" fill="#ff0000"/><rect x="687.7" y="345.1" width="2.1" height="2.2" fill="#ff0000"/><rect x="689.3" y="341.6" width="2.1" height="5.2" fill="#ff0000"/><rect x="691.3" y="337.4" width="1.2" height="5.8" fill="#ff0000"/><rect x="690.9" y="340.4" width="2.1" height="2.8" fill="#ff0000"/><rect x="692.9" y="335.1" width="1.2" height="7.9" fill="#ff0000"/><rect x="692.5" y="335.1" width="2.1" height="6.9" fill="#ff0000"/><rect x="694.5" y="329.5" width="1.2" height="9.2" fill="#ff0000"/><rect x="694.1" y="331.5" width="2.1" height="5.2" fill="#ff0000"/><rect x="696.0" y="323.8" width="1.2" height="9.3" fill="#ff0000"/><rect x="695.6" y="326.8" width="2.1" height="6.3" fill="#ff0000"/><rect x="697.6" y="326.2" width="1.2" height="3.2" fill="#ff0000"/><rect x="697.2" y="326.2" width="2.1" height="2.2" fill="#ff0000"/><rect x="699.2" y="321.6" width="1.2" height="8.2" fill="#ff0000"/><rect x="698.8" y="322.6" width="2.1" height="5.2" fill="#ff0000"/><rect x="700.8" y="318.7" width="1.2" height="6.6" fill="#ff0000"/><rect x="700.4" y="319.7" width="2.1" height="4.6" fill="#ff0000"/><rect x="702.4" y="315.7" width="1.2" height="6.6" fill="#ff0000"/><rect x="702.0" y="316.7" width="2.1" height="4.6" fill="#ff0000"/><rect x="703.9" y="315.1" width="1.2" height="3.2" fill="#ff0000"/><rect x="703.5" y="316.1" width="2.1" height="2.2" fill="#ff0000"/><rect x="705.5" y="314.1" width="1.2" height="6.6" fill="#1478e6"/><rect x="705.1" y="316.1" width="2.1" height="4.6" fill="#1478e6"/><rect x="707.1" y="319.1" width="1.2" height="8.7" fill="#1478e6"/><rect x="706.7" y="319.1" width="2.1" height="5.7" fill="#1478e6"/><rect x="708.7" y="320.2" width="1.2" height="6.4" fill="#1478e6"/><rect x="708.3" y="323.2" width="2.1" height="3.4" fill="#1478e6"/><rect x="709.5" y="324.2" width="2.8" height="1.9" fill="#f0ec90"/><rect x="711.0" y="324.2" width="2.8" height="1.9" fill="#f0ec90"/><rect x="713.4" y="322.0" width="1.2" height="7.6" fill="#1478e6"/><rect x="713.0" y="325.0" width="2.1" height="4.6" fill="#1478e6"/><rect x="715.0" y="328.0" width="1.2" height="4.8" fill="#1478e6"/><rect x="714.6" y="328.0" width="2.1" height="2.8" fill="#1478e6"/><rect x="715.8" y="328.4" width="2.8" height="1.9" fill="#f0ec90"/><rect x="718.2" y="326.2" width="1.2" height="5.2" fill="#1478e6"/><rect x="717.8" y="329.2" width="2.1" height="2.2" fill="#1478e6"/><rect x="719.7" y="326.8" width="1.2" height="7.6" fill="#ff0000"/><rect x="719.3" y="326.8" width="2.1" height="4.6" fill="#ff0000"/><rect x="721.3" y="324.0" width="1.2" height="4.4" fill="#ff0000"/><rect x="720.9" y="325.0" width="2.1" height="3.4" fill="#ff0000"/><rect x="722.1" y="323.0" width="2.8" height="1.9" fill="#f0ec90"/><rect x="724.5" y="323.8" width="1.2" height="5.2" fill="#1478e6"/><rect x="724.1" y="323.8" width="2.1" height="2.2" fill="#1478e6"/><rect x="726.1" y="322.4" width="1.2" height="6.8" fill="#1478e6"/><rect x="725.7" y="324.4" width="2.1" height="2.8" fill="#1478e6"/><rect x="727.6" y="321.2" width="1.2" height="8.0" fill="#ff0000"/><rect x="727.2" y="323.2" width="2.1" height="4.0" fill="#ff0000"/><rect x="729.2" y="320.3" width="1.2" height="7.6" fill="#ff0000"/><rect x="728.8" y="320.3" width="2.1" height="4.6" fill="#ff0000"/><rect x="730.4" y="313.8" width="2.1" height="8.1" fill="#ff0000"/><rect x="732.4" y="312.2" width="1.2" height="5.2" fill="#ff0000"/><rect x="732.0" y="313.2" width="2.1" height="2.2" fill="#ff0000"/><rect x="734.0" y="308.2" width="1.2" height="6.6" fill="#ff0000"/><rect x="733.6" y="310.2" width="2.1" height="4.6" fill="#ff0000"/><rect x="734.7" y="309.4" width="2.8" height="1.9" fill="#f0ec90"/><rect x="737.1" y="310.2" width="1.2" height="5.2" fill="#1478e6"/><rect x="736.7" y="310.2" width="2.1" height="2.2" fill="#1478e6"/><rect x="738.7" y="310.8" width="1.2" height="5.2" fill="#1478e6"/><rect x="738.3" y="310.8" width="2.1" height="2.2" fill="#1478e6"/><rect x="739.9" y="310.2" width="2.1" height="2.8" fill="#ff0000"/><rect x="741.1" y="307.6" width="2.8" height="1.9" fill="#f0ec90"/><rect x="742.6" y="307.0" width="2.8" height="1.9" fill="#f0ec90"/><rect x="745.0" y="302.5" width="1.2" height="7.0" fill="#ff0000"/><rect x="744.6" y="305.5" width="2.1" height="4.0" fill="#ff0000"/><rect x="746.6" y="302.7" width="1.2" height="6.4" fill="#ff0000"/><rect x="746.2" y="303.7" width="2.1" height="3.4" fill="#ff0000"/><rect x="747.4" y="302.9" width="2.8" height="1.9" fill="#f0ec90"/><rect x="749.8" y="302.7" width="1.2" height="5.2" fill="#1478e6"/><rect x="749.4" y="303.7" width="2.1" height="2.2" fill="#1478e6"/><rect x="751.3" y="298.9" width="1.2" height="8.0" fill="#ff0000"/><rect x="750.9" y="301.9" width="2.1" height="4.0" fill="#ff0000"/><rect x="752.9" y="299.7" width="1.2" height="6.6" fill="#1478e6"/><rect x="752.5" y="299.7" width="2.1" height="5.6" fill="#1478e6"/><rect x="754.1" y="276.6" width="2.1" height="5.6" fill="#1478e6"/><rect x="756.1" y="277.6" width="1.2" height="8.4" fill="#1478e6"/><rect x="755.7" y="280.6" width="2.1" height="3.4" fill="#1478e6"/><rect x="757.3" y="280.0" width="2.1" height="4.0" fill="#ff0000"/><rect x="759.2" y="276.8" width="1.2" height="7.8" fill="#ff0000"/><rect x="758.8" y="278.8" width="2.1" height="2.8" fill="#ff0000"/><rect x="760.8" y="275.2" width="1.2" height="8.2" fill="#ff0000"/><rect x="760.4" y="278.2" width="2.1" height="2.2" fill="#ff0000"/><rect x="762.4" y="277.1" width="1.2" height="5.8" fill="#ff0000"/><rect x="762.0" y="277.1" width="2.1" height="2.8" fill="#ff0000"/><rect x="763.2" y="278.0" width="2.8" height="1.9" fill="#f0ec90"/><rect x="765.2" y="278.8" width="2.1" height="2.2" fill="#1478e6"/><rect x="766.7" y="278.8" width="2.1" height="2.2" fill="#ff0000"/><rect x="768.7" y="277.6" width="1.2" height="3.8" fill="#ff0000"/><rect x="768.3" y="277.6" width="2.1" height="2.8" fill="#ff0000"/><rect x="770.3" y="275.6" width="1.2" height="4.8" fill="#1478e6"/><rect x="769.9" y="277.6" width="2.1" height="2.8" fill="#1478e6"/><rect x="771.9" y="276.8" width="1.2" height="9.0" fill="#1478e6"/><rect x="771.5" y="278.8" width="2.1" height="4.0" fill="#1478e6"/><rect x="772.7" y="279.8" width="2.8" height="1.9" fill="#f0ec90"/><rect x="774.6" y="279.4" width="2.1" height="2.8" fill="#ff0000"/><rect x="776.6" y="277.4" width="1.2" height="6.2" fill="#1478e6"/><rect x="776.2" y="279.4" width="2.1" height="2.2" fill="#1478e6"/><rect x="777.4" y="276.8" width="2.8" height="1.9" fill="#f0ec90"/><rect x="779.8" y="275.9" width="1.2" height="5.4" fill="#ff0000"/><rect x="779.4" y="275.9" width="2.1" height="3.4" fill="#ff0000"/><rect x="781.4" y="270.5" width="1.2" height="7.0" fill="#ff0000"/><rect x="781.0" y="273.5" width="2.1" height="4.0" fill="#ff0000"/><rect x="782.9" y="273.5" width="1.2" height="4.8" fill="#1478e6"/><rect x="782.5" y="273.5" width="2.1" height="2.8" fill="#1478e6"/><rect x="783.7" y="273.3" width="2.8" height="1.9" fill="#f0ec90"/><rect x="785.7" y="271.7" width="2.1" height="4.0" fill="#ff0000"/><rect x="787.7" y="271.7" width="1.2" height="4.2" fill="#1478e6"/><rect x="787.3" y="271.7" width="2.1" height="2.2" fill="#1478e6"/><rect x="788.9" y="272.3" width="2.1" height="6.3" fill="#1478e6"/><rect x="790.4" y="277.1" width="2.1" height="2.8" fill="#1478e6"/><rect x="792.4" y="277.2" width="1.2" height="3.8" fill="#1478e6"/><rect x="792.0" y="278.2" width="2.1" height="2.8" fill="#1478e6"/><rect x="793.6" y="279.4" width="2.1" height="5.2" fill="#1478e6"/><rect x="795.6" y="283.0" width="1.2" height="4.8" fill="#1478e6"/><rect x="795.2" y="283.0" width="2.1" height="2.8" fill="#1478e6"/><rect x="797.2" y="278.2" width="1.2" height="7.6" fill="#ff0000"/><rect x="796.8" y="281.2" width="2.1" height="4.6" fill="#ff0000"/><rect x="798.7" y="280.2" width="1.2" height="4.2" fill="#1478e6"/><rect x="798.3" y="281.2" width="2.1" height="2.2" fill="#1478e6"/><rect x="800.3" y="275.1" width="1.2" height="10.3" fill="#ff0000"/><rect x="799.9" y="277.1" width="2.1" height="6.3" fill="#ff0000"/><rect x="801.1" y="276.3" width="2.8" height="1.9" fill="#f0ec90"/><rect x="803.5" y="276.1" width="1.2" height="3.2" fill="#1478e6"/><rect x="803.1" y="277.1" width="2.1" height="2.2" fill="#1478e6"/><rect x="804.3" y="276.8" width="2.8" height="1.9" fill="#f0ec90"/><rect x="806.6" y="275.6" width="1.2" height="5.8" fill="#1478e6"/><rect x="806.2" y="277.6" width="2.1" height="2.8" fill="#1478e6"/><rect x="808.2" y="278.8" width="1.2" height="7.0" fill="#1478e6"/><rect x="807.8" y="278.8" width="2.1" height="4.0" fill="#1478e6"/><rect x="809.8" y="275.8" width="1.2" height="8.0" fill="#ff0000"/><rect x="809.4" y="278.8" width="2.1" height="4.0" fill="#ff0000"/><rect x="810.6" y="279.8" width="2.8" height="1.9" fill="#f0ec90"/><rect x="813.0" y="276.1" width="1.2" height="9.2" fill="#ff0000"/><rect x="812.6" y="277.1" width="2.1" height="5.2" fill="#ff0000"/><rect x="814.5" y="271.5" width="1.2" height="10.2" fill="#ff0000"/><rect x="814.1" y="273.5" width="2.1" height="5.2" fill="#ff0000"/><rect x="816.1" y="273.5" width="1.2" height="5.4" fill="#1478e6"/><rect x="815.7" y="273.5" width="2.1" height="3.4" fill="#1478e6"/><rect x="817.7" y="272.7" width="1.2" height="4.2" fill="#ff0000"/><rect x="817.3" y="274.7" width="2.1" height="2.2" fill="#ff0000"/><rect x="819.3" y="274.1" width="1.2" height="3.2" fill="#ff0000"/><rect x="818.9" y="274.1" width="2.1" height="2.2" fill="#ff0000"/><rect x="820.1" y="273.3" width="2.8" height="1.9" fill="#f0ec90"/><rect x="822.4" y="265.8" width="1.2" height="9.9" fill="#ff0000"/><rect x="822.0" y="268.8" width="2.1" height="6.9" fill="#ff0000"/><rect x="824.0" y="265.0" width="1.2" height="6.4" fill="#ff0000"/><rect x="823.6" y="267.0" width="2.1" height="3.4" fill="#ff0000"/><rect x="825.6" y="264.0" width="1.2" height="9.4" fill="#1478e6"/><rect x="825.2" y="267.0" width="2.1" height="3.4" fill="#1478e6"/><rect x="827.2" y="264.0" width="1.2" height="7.3" fill="#ff0000"/><rect x="826.8" y="264.0" width="2.1" height="6.3" fill="#ff0000"/><rect x="828.8" y="260.3" width="1.2" height="7.4" fill="#ff0000"/><rect x="828.4" y="262.3" width="2.1" height="3.4" fill="#ff0000"/><rect x="830.3" y="259.3" width="1.2" height="6.6" fill="#ff0000"/><rect x="829.9" y="259.3" width="2.1" height="4.6" fill="#ff0000"/><rect x="831.9" y="254.0" width="1.2" height="9.9" fill="#ff0000"/><rect x="831.5" y="254.0" width="2.1" height="6.9" fill="#ff0000"/><rect x="833.5" y="251.0" width="1.2" height="9.4" fill="#1478e6"/><rect x="833.1" y="254.0" width="2.1" height="3.4" fill="#1478e6"/><rect x="835.1" y="250.4" width="1.2" height="8.0" fill="#ff0000"/><rect x="834.7" y="253.4" width="2.1" height="4.0" fill="#ff0000"/><rect x="836.3" y="252.2" width="2.1" height="2.8" fill="#ff0000"/><rect x="838.2" y="251.2" width="1.2" height="5.4" fill="#1478e6"/><rect x="837.8" y="252.2" width="2.1" height="3.4" fill="#1478e6"/><rect x="839.4" y="254.0" width="2.1" height="2.8" fill="#1478e6"/><rect x="840.6" y="256.7" width="2.8" height="1.9" fill="#f0ec90"/><rect x="843.0" y="255.5" width="1.2" height="7.7" fill="#1478e6"/><rect x="842.6" y="257.5" width="2.1" height="5.7" fill="#1478e6"/><rect x="844.6" y="258.7" width="1.2" height="6.4" fill="#1478e6"/><rect x="844.2" y="261.7" width="2.1" height="3.4" fill="#1478e6"/><rect x="845.3" y="260.3" width="2.8" height="1.9" fill="#f0ec90"/><rect x="846.9" y="261.5" width="2.8" height="1.9" fill="#f0ec90"/><rect x="849.3" y="259.3" width="1.2" height="6.4" fill="#1478e6"/><rect x="848.9" y="262.3" width="2.1" height="3.4" fill="#1478e6"/><rect x="850.9" y="260.1" width="1.2" height="7.6" fill="#ff0000"/><rect x="850.5" y="261.1" width="2.1" height="4.6" fill="#ff0000"/><rect x="851.7" y="260.3" width="2.8" height="1.9" fill="#f0ec90"/><rect x="854.0" y="256.9" width="1.2" height="5.8" fill="#ff0000"/><rect x="853.6" y="259.9" width="2.1" height="2.8" fill="#ff0000"/><rect x="855.6" y="257.5" width="1.2" height="6.0" fill="#ff0000"/><rect x="855.2" y="257.5" width="2.1" height="4.0" fill="#ff0000"/><rect x="856.4" y="255.5" width="2.8" height="1.9" fill="#f0ec90"/><rect x="858.8" y="254.3" width="1.2" height="6.2" fill="#1478e6"/><rect x="858.4" y="256.3" width="2.1" height="2.2" fill="#1478e6"/><rect x="860.4" y="255.2" width="1.2" height="6.4" fill="#ff0000"/><rect x="860.0" y="255.2" width="2.1" height="3.4" fill="#ff0000"/><rect x="861.9" y="248.0" width="1.2" height="9.7" fill="#ff0000"/><rect x="861.5" y="248.0" width="2.1" height="8.7" fill="#ff0000"/><rect x="863.1" y="241.5" width="2.1" height="8.1" fill="#ff0000"/><rect x="864.3" y="240.7" width="2.8" height="1.9" fill="#f0ec90"/><rect x="866.7" y="237.2" width="1.2" height="6.0" fill="#ff0000"/><rect x="866.3" y="239.2" width="2.1" height="4.0" fill="#ff0000"/><rect x="867.5" y="238.4" width="2.8" height="1.9" fill="#f0ec90"/><rect x="869.4" y="239.2" width="2.1" height="4.0" fill="#1478e6"/><rect x="871.4" y="238.5" width="1.2" height="8.7" fill="#1478e6"/><rect x="871.0" y="241.5" width="2.1" height="5.7" fill="#1478e6"/><rect x="873.0" y="243.3" width="1.2" height="5.0" fill="#ff0000"/><rect x="872.6" y="243.3" width="2.1" height="4.0" fill="#ff0000"/><rect x="874.6" y="241.3" width="1.2" height="4.8" fill="#1478e6"/><rect x="874.2" y="243.3" width="2.1" height="2.8" fill="#1478e6"/><rect x="875.4" y="241.3" width="2.8" height="1.9" fill="#f0ec90"/><rect x="877.7" y="241.1" width="1.2" height="6.8" fill="#1478e6"/><rect x="877.3" y="242.1" width="2.1" height="2.8" fill="#1478e6"/><rect x="879.3" y="243.3" width="1.2" height="6.6" fill="#1478e6"/><rect x="878.9" y="243.3" width="2.1" height="4.6" fill="#1478e6"/><rect x="880.1" y="248.4" width="2.8" height="1.9" fill="#f0ec90"/><rect x="882.5" y="249.2" width="1.2" height="7.7" fill="#1478e6"/><rect x="882.1" y="249.2" width="2.1" height="5.7" fill="#1478e6"/><rect x="884.1" y="253.4" width="1.2" height="7.2" fill="#1478e6"/><rect x="883.7" y="253.4" width="2.1" height="5.2" fill="#1478e6"/><rect x="885.2" y="256.9" width="2.1" height="7.5" fill="#1478e6"/><rect x="887.2" y="259.8" width="1.2" height="12.7" fill="#1478e6"/><rect x="886.8" y="262.8" width="2.1" height="8.7" fill="#1478e6"/><rect x="888.8" y="270.0" width="1.2" height="7.2" fill="#1478e6"/><rect x="888.4" y="270.0" width="2.1" height="5.2" fill="#1478e6"/><rect x="890.0" y="273.5" width="2.1" height="3.4" fill="#1478e6"/><rect x="892.0" y="270.1" width="1.2" height="7.7" fill="#ff0000"/><rect x="891.6" y="271.1" width="2.1" height="5.7" fill="#ff0000"/><rect x="892.7" y="270.3" width="2.8" height="1.9" fill="#f0ec90"/><rect x="895.1" y="268.2" width="1.2" height="5.6" fill="#ff0000"/><rect x="894.7" y="268.2" width="2.1" height="4.6" fill="#ff0000"/><rect x="896.7" y="264.6" width="1.2" height="5.2" fill="#ff0000"/><rect x="896.3" y="267.6" width="2.1" height="2.2" fill="#ff0000"/><rect x="898.3" y="267.6" width="1.2" height="3.2" fill="#1478e6"/><rect x="897.9" y="267.6" width="2.1" height="2.2" fill="#1478e6"/><rect x="899.1" y="265.6" width="2.8" height="1.9" fill="#f0ec90"/><rect x="901.4" y="264.2" width="1.2" height="4.8" fill="#ff0000"/><rect x="901.0" y="265.2" width="2.1" height="2.8" fill="#ff0000"/><rect x="902.2" y="263.2" width="2.8" height="1.9" fill="#f0ec90"/><rect x="904.6" y="258.5" width="1.2" height="7.2" fill="#ff0000"/><rect x="904.2" y="260.5" width="2.1" height="5.2" fill="#ff0000"/><rect x="905.4" y="259.7" width="2.8" height="1.9" fill="#f0ec90"/><rect x="907.8" y="259.9" width="1.2" height="5.2" fill="#ff0000"/><rect x="907.4" y="259.9" width="2.1" height="2.2" fill="#ff0000"/><rect x="909.3" y="255.7" width="1.2" height="6.7" fill="#ff0000"/><rect x="908.9" y="255.7" width="2.1" height="5.7" fill="#ff0000"/><rect x="910.9" y="254.7" width="1.2" height="3.8" fill="#1478e6"/><rect x="910.5" y="255.7" width="2.1" height="2.8" fill="#1478e6"/><rect x="912.1" y="256.9" width="2.1" height="3.4" fill="#1478e6"/><rect x="914.1" y="257.7" width="1.2" height="3.8" fill="#1478e6"/><rect x="913.7" y="258.7" width="2.1" height="2.8" fill="#1478e6"/><rect x="915.7" y="258.9" width="1.2" height="7.4" fill="#1478e6"/><rect x="915.3" y="259.9" width="2.1" height="3.4" fill="#1478e6"/><rect x="917.2" y="261.7" width="1.2" height="6.4" fill="#1478e6"/><rect x="916.8" y="261.7" width="2.1" height="3.4" fill="#1478e6"/><rect x="918.0" y="263.8" width="2.8" height="1.9" fill="#f0ec90"/><rect x="920.4" y="263.6" width="1.2" height="8.0" fill="#1478e6"/><rect x="920.0" y="264.6" width="2.1" height="4.0" fill="#1478e6"/><rect x="921.6" y="267.0" width="2.1" height="3.4" fill="#1478e6"/><rect x="923.2" y="268.8" width="2.1" height="4.6" fill="#1478e6"/><rect x="924.7" y="271.7" width="2.1" height="2.8" fill="#1478e6"/><rect x="926.7" y="270.0" width="1.2" height="7.6" fill="#ff0000"/><rect x="926.3" y="270.0" width="2.1" height="4.6" fill="#ff0000"/><rect x="928.3" y="266.4" width="1.2" height="7.2" fill="#ff0000"/><rect x="927.9" y="269.4" width="2.1" height="2.2" fill="#ff0000"/><rect x="929.9" y="267.6" width="1.2" height="6.4" fill="#ff0000"/><rect x="929.5" y="267.6" width="2.1" height="3.4" fill="#ff0000"/><rect x="931.5" y="264.4" width="1.2" height="4.8" fill="#ff0000"/><rect x="931.1" y="266.4" width="2.1" height="2.8" fill="#ff0000"/><rect x="933.0" y="260.8" width="1.2" height="7.2" fill="#ff0000"/><rect x="932.6" y="262.8" width="2.1" height="5.2" fill="#ff0000"/><rect x="933.8" y="262.0" width="2.8" height="1.9" fill="#f0ec90"/><rect x="936.2" y="258.9" width="1.2" height="5.6" fill="#ff0000"/><rect x="935.8" y="259.9" width="2.1" height="4.6" fill="#ff0000"/><rect x="937.8" y="259.3" width="1.2" height="3.2" fill="#ff0000"/><rect x="937.4" y="259.3" width="2.1" height="2.2" fill="#ff0000"/><rect x="938.6" y="258.5" width="2.8" height="1.9" fill="#f0ec90"/><rect x="940.9" y="254.6" width="1.2" height="7.3" fill="#ff0000"/><rect x="940.5" y="254.6" width="2.1" height="6.3" fill="#ff0000"/><rect x="942.5" y="251.8" width="1.2" height="6.4" fill="#ff0000"/><rect x="942.1" y="252.8" width="2.1" height="3.4" fill="#ff0000"/><rect x="944.1" y="248.0" width="1.2" height="8.3" fill="#ff0000"/><rect x="943.7" y="248.0" width="2.1" height="6.3" fill="#ff0000"/><rect x="945.7" y="245.7" width="1.2" height="7.0" fill="#ff0000"/><rect x="945.3" y="245.7" width="2.1" height="4.0" fill="#ff0000"/><rect x="946.5" y="244.9" width="2.8" height="1.9" fill="#f0ec90"/><rect x="948.4" y="245.7" width="2.1" height="2.2" fill="#1478e6"/><rect x="950.4" y="243.3" width="1.2" height="5.8" fill="#1478e6"/><rect x="950.0" y="246.3" width="2.1" height="2.8" fill="#1478e6"/><rect x="951.2" y="247.2" width="2.8" height="1.9" fill="#f0ec90"/><rect x="953.6" y="245.0" width="1.2" height="11.7" fill="#1478e6"/><rect x="953.2" y="248.0" width="2.1" height="5.7" fill="#1478e6"/><rect x="955.2" y="251.6" width="1.2" height="4.2" fill="#ff0000"/><rect x="954.8" y="251.6" width="2.1" height="2.2" fill="#ff0000"/><rect x="956.7" y="251.6" width="1.2" height="6.2" fill="#1478e6"/><rect x="956.3" y="251.6" width="2.1" height="5.2" fill="#1478e6"/><rect x="957.5" y="256.7" width="2.8" height="1.9" fill="#f0ec90"/><rect x="959.5" y="254.0" width="2.1" height="5.2" fill="#ff0000"/><rect x="961.5" y="252.2" width="1.2" height="6.4" fill="#ff0000"/><rect x="961.1" y="252.2" width="2.1" height="3.4" fill="#ff0000"/><rect x="963.1" y="243.9" width="1.2" height="11.9" fill="#ff0000"/><rect x="962.7" y="246.9" width="2.1" height="6.9" fill="#ff0000"/><rect x="964.2" y="244.5" width="2.1" height="4.0" fill="#ff0000"/><rect x="966.2" y="241.5" width="1.2" height="8.8" fill="#1478e6"/><rect x="965.8" y="244.5" width="2.1" height="2.8" fill="#1478e6"/><rect x="967.0" y="243.7" width="2.8" height="1.9" fill="#f0ec90"/><rect x="969.4" y="242.5" width="1.2" height="7.7" fill="#1478e6"/><rect x="969.0" y="244.5" width="2.1" height="5.7" fill="#1478e6"/><rect x="971.0" y="246.6" width="1.2" height="10.2" fill="#1478e6"/><rect x="970.6" y="248.6" width="2.1" height="5.2" fill="#1478e6"/><rect x="972.5" y="249.2" width="1.2" height="8.7" fill="#1478e6"/><rect x="972.1" y="252.2" width="2.1" height="5.7" fill="#1478e6"/><rect x="974.1" y="255.7" width="1.2" height="3.2" fill="#ff0000"/><rect x="973.7" y="255.7" width="2.1" height="2.2" fill="#ff0000"/><rect x="975.7" y="254.7" width="1.2" height="6.7" fill="#1478e6"/><rect x="975.3" y="255.7" width="2.1" height="5.7" fill="#1478e6"/><rect x="977.3" y="259.9" width="1.2" height="7.9" fill="#1478e6"/><rect x="976.9" y="259.9" width="2.1" height="6.9" fill="#1478e6"/><rect x="978.1" y="264.4" width="2.8" height="1.9" fill="#f0ec90"/><rect x="979.6" y="266.8" width="2.8" height="1.9" fill="#f0ec90"/><rect x="982.0" y="265.6" width="1.2" height="7.2" fill="#1478e6"/><rect x="981.6" y="267.6" width="2.1" height="5.2" fill="#1478e6"/><rect x="983.2" y="271.1" width="2.1" height="4.6" fill="#1478e6"/><rect x="984.4" y="273.3" width="2.8" height="1.9" fill="#f0ec90"/><rect x="986.8" y="268.1" width="1.2" height="8.6" fill="#ff0000"/><rect x="986.4" y="271.1" width="2.1" height="4.6" fill="#ff0000"/><rect x="987.5" y="268.0" width="2.8" height="1.9" fill="#f0ec90"/><rect x="989.1" y="266.8" width="2.8" height="1.9" fill="#f0ec90"/><rect x="991.5" y="267.6" width="1.2" height="5.0" fill="#1478e6"/><rect x="991.1" y="267.6" width="2.1" height="4.0" fill="#1478e6"/><rect x="992.3" y="270.3" width="2.8" height="1.9" fill="#f0ec90"/><rect x="993.9" y="270.9" width="2.8" height="1.9" fill="#f0ec90"/><rect x="996.2" y="268.7" width="1.2" height="7.4" fill="#1478e6"/><rect x="995.8" y="271.7" width="2.1" height="3.4" fill="#1478e6"/><rect x="997.8" y="271.5" width="1.2" height="6.0" fill="#1478e6"/><rect x="997.4" y="273.5" width="2.1" height="4.0" fill="#1478e6"/><rect x="999.4" y="274.9" width="1.2" height="5.2" fill="#1478e6"/><rect x="999.0" y="275.9" width="2.1" height="2.2" fill="#1478e6"/><rect x="1001.0" y="269.9" width="1.2" height="9.2" fill="#ff0000"/><rect x="1000.6" y="272.9" width="2.1" height="5.2" fill="#ff0000"/><rect x="1002.6" y="267.5" width="1.2" height="10.0" fill="#ff0000"/><rect x="1002.2" y="270.5" width="2.1" height="4.0" fill="#ff0000"/><rect x="1004.1" y="268.4" width="1.2" height="5.8" fill="#ff0000"/><rect x="1003.7" y="269.4" width="2.1" height="2.8" fill="#ff0000"/><rect x="1004.9" y="268.6" width="2.8" height="1.9" fill="#f0ec90"/><rect x="1007.3" y="267.2" width="1.2" height="3.8" fill="#ff0000"/><rect x="1006.9" y="268.2" width="2.1" height="2.8" fill="#ff0000"/><rect x="1008.5" y="265.2" width="2.1" height="4.6" fill="#ff0000"/><rect x="1010.5" y="263.4" width="1.2" height="4.4" fill="#ff0000"/><rect x="1010.1" y="263.4" width="2.1" height="3.4" fill="#ff0000"/><rect x="1012.0" y="263.4" width="1.2" height="3.8" fill="#1478e6"/><rect x="1011.6" y="263.4" width="2.1" height="2.8" fill="#1478e6"/><rect x="1013.6" y="264.0" width="1.2" height="3.2" fill="#ff0000"/><rect x="1013.2" y="264.0" width="2.1" height="2.2" fill="#ff0000"/><rect x="1014.4" y="264.4" width="2.8" height="1.9" fill="#f0ec90"/><rect x="1016.8" y="264.2" width="1.2" height="8.2" fill="#1478e6"/><rect x="1016.4" y="265.2" width="2.1" height="5.2" fill="#1478e6"/><rect x="1018.4" y="265.8" width="1.2" height="7.8" fill="#1478e6"/><rect x="1018.0" y="268.8" width="2.1" height="2.8" fill="#1478e6"/><rect x="1019.9" y="267.0" width="1.2" height="7.0" fill="#1478e6"/><rect x="1019.5" y="270.0" width="2.1" height="4.0" fill="#1478e6"/><rect x="1021.5" y="272.3" width="1.2" height="4.2" fill="#1478e6"/><rect x="1021.1" y="272.3" width="2.1" height="2.2" fill="#1478e6"/><rect x="1023.1" y="269.9" width="1.2" height="10.0" fill="#1478e6"/><rect x="1022.7" y="272.9" width="2.1" height="4.0" fill="#1478e6"/><rect x="1024.7" y="272.3" width="1.2" height="9.3" fill="#1478e6"/><rect x="1024.3" y="275.3" width="2.1" height="6.3" fill="#1478e6"/><rect x="1026.3" y="278.0" width="1.2" height="7.0" fill="#1478e6"/><rect x="1025.9" y="280.0" width="2.1" height="4.0" fill="#1478e6"/><rect x="1027.8" y="280.6" width="1.2" height="5.4" fill="#ff0000"/><rect x="1027.4" y="280.6" width="2.1" height="3.4" fill="#ff0000"/><rect x="1029.4" y="277.6" width="1.2" height="6.4" fill="#1478e6"/><rect x="1029.0" y="280.6" width="2.1" height="3.4" fill="#1478e6"/><rect x="1031.0" y="279.4" width="1.2" height="5.8" fill="#1478e6"/><rect x="1030.6" y="282.4" width="2.1" height="2.8" fill="#1478e6"/><rect x="1032.6" y="278.8" width="1.2" height="6.4" fill="#ff0000"/><rect x="1032.2" y="281.8" width="2.1" height="3.4" fill="#ff0000"/><rect x="1034.2" y="279.8" width="1.2" height="8.6" fill="#1478e6"/><rect x="1033.8" y="281.8" width="2.1" height="4.6" fill="#1478e6"/><rect x="1035.7" y="281.2" width="1.2" height="8.2" fill="#ff0000"/><rect x="1035.3" y="284.2" width="2.1" height="2.2" fill="#ff0000"/><rect x="1037.3" y="283.2" width="1.2" height="3.8" fill="#1478e6"/><rect x="1036.9" y="284.2" width="2.1" height="2.8" fill="#1478e6"/><rect x="1038.9" y="282.8" width="1.2" height="5.2" fill="#ff0000"/><rect x="1038.5" y="284.8" width="2.1" height="2.2" fill="#ff0000"/><rect x="1040.5" y="279.0" width="1.2" height="7.3" fill="#ff0000"/><rect x="1040.1" y="280.0" width="2.1" height="6.3" fill="#ff0000"/><rect x="1042.1" y="277.8" width="1.2" height="4.8" fill="#ff0000"/><rect x="1041.7" y="278.8" width="2.1" height="2.8" fill="#ff0000"/><rect x="1043.6" y="275.8" width="1.2" height="5.8" fill="#1478e6"/><rect x="1043.2" y="278.8" width="2.1" height="2.8" fill="#1478e6"/><rect x="1044.8" y="280.0" width="2.1" height="2.2" fill="#1478e6"/><rect x="1046.0" y="278.6" width="2.8" height="1.9" fill="#f0ec90"/><rect x="1048.4" y="275.5" width="1.2" height="8.6" fill="#ff0000"/><rect x="1048.0" y="276.5" width="2.1" height="4.6" fill="#ff0000"/><rect x="1050.0" y="273.3" width="1.2" height="7.8" fill="#ff0000"/><rect x="1049.6" y="275.3" width="2.1" height="2.8" fill="#ff0000"/><rect x="1051.5" y="273.3" width="1.2" height="5.8" fill="#1478e6"/><rect x="1051.1" y="275.3" width="2.1" height="2.8" fill="#1478e6"/><rect x="1053.1" y="271.9" width="1.2" height="8.2" fill="#ff0000"/><rect x="1052.7" y="272.9" width="2.1" height="5.2" fill="#ff0000"/><rect x="1054.7" y="272.9" width="1.2" height="6.0" fill="#1478e6"/><rect x="1054.3" y="272.9" width="2.1" height="4.0" fill="#1478e6"/><rect x="1056.3" y="270.9" width="1.2" height="9.0" fill="#ff0000"/><rect x="1055.9" y="272.9" width="2.1" height="4.0" fill="#ff0000"/><rect x="1057.1" y="272.1" width="2.8" height="1.9" fill="#f0ec90"/><rect x="1059.4" y="268.5" width="1.2" height="8.0" fill="#ff0000"/><rect x="1059.0" y="270.5" width="2.1" height="4.0" fill="#ff0000"/><rect x="1061.0" y="264.0" width="1.2" height="9.2" fill="#ff0000"/><rect x="1060.6" y="267.0" width="2.1" height="5.2" fill="#ff0000"/><rect x="1062.2" y="267.0" width="2.1" height="2.2" fill="#1478e6"/><rect x="1063.4" y="264.4" width="2.8" height="1.9" fill="#f0ec90"/><rect x="1065.0" y="264.4" width="2.8" height="1.9" fill="#f0ec90"/><rect x="1067.3" y="262.4" width="1.2" height="5.4" fill="#ff0000"/><rect x="1066.9" y="263.4" width="2.1" height="3.4" fill="#ff0000"/><rect x="1068.9" y="260.4" width="1.2" height="8.4" fill="#1478e6"/><rect x="1068.5" y="263.4" width="2.1" height="3.4" fill="#1478e6"/><rect x="1070.5" y="264.0" width="1.2" height="5.8" fill="#ff0000"/><rect x="1070.1" y="264.0" width="2.1" height="2.8" fill="#ff0000"/><rect x="1072.1" y="261.4" width="1.2" height="4.2" fill="#ff0000"/><rect x="1071.7" y="263.4" width="2.1" height="2.2" fill="#ff0000"/><rect x="1072.9" y="265.6" width="2.8" height="1.9" fill="#f0ec90"/><rect x="1075.2" y="266.4" width="1.2" height="4.8" fill="#1478e6"/><rect x="1074.8" y="266.4" width="2.1" height="2.8" fill="#1478e6"/><rect x="1076.0" y="266.8" width="2.8" height="1.9" fill="#f0ec90"/><rect x="1077.6" y="266.8" width="2.8" height="1.9" fill="#f0ec90"/><rect x="1079.2" y="266.8" width="2.8" height="1.9" fill="#f0ec90"/><rect x="1081.6" y="263.8" width="1.2" height="5.4" fill="#ff0000"/><rect x="1081.2" y="265.8" width="2.1" height="3.4" fill="#ff0000"/><rect x="1083.1" y="262.6" width="1.2" height="7.8" fill="#ff0000"/><rect x="1082.7" y="264.6" width="2.1" height="2.8" fill="#ff0000"/><rect x="1083.9" y="263.8" width="2.8" height="1.9" fill="#f0ec90"/><rect x="1086.3" y="259.8" width="1.2" height="6.4" fill="#ff0000"/><rect x="1085.9" y="262.8" width="2.1" height="3.4" fill="#ff0000"/><rect x="1087.9" y="260.8" width="1.2" height="7.8" fill="#1478e6"/><rect x="1087.5" y="262.8" width="2.1" height="2.8" fill="#1478e6"/><rect x="1089.1" y="264.0" width="2.1" height="4.0" fill="#1478e6"/><rect x="1090.2" y="267.4" width="2.8" height="1.9" fill="#f0ec90"/><rect x="1092.6" y="265.2" width="1.2" height="8.4" fill="#1478e6"/><rect x="1092.2" y="268.2" width="2.1" height="3.4" fill="#1478e6"/><rect x="1093.8" y="270.0" width="2.1" height="3.4" fill="#1478e6"/><rect x="1095.8" y="268.2" width="1.2" height="6.2" fill="#ff0000"/><rect x="1095.4" y="268.2" width="2.1" height="5.2" fill="#ff0000"/><rect x="1097.4" y="263.4" width="1.2" height="7.3" fill="#ff0000"/><rect x="1097.0" y="263.4" width="2.1" height="6.3" fill="#ff0000"/><rect x="1098.9" y="259.9" width="1.2" height="6.2" fill="#ff0000"/><rect x="1098.5" y="259.9" width="2.1" height="5.2" fill="#ff0000"/><rect x="1100.5" y="254.5" width="1.2" height="9.0" fill="#ff0000"/><rect x="1100.1" y="257.5" width="2.1" height="4.0" fill="#ff0000"/><rect x="1102.1" y="257.5" width="1.2" height="5.4" fill="#1478e6"/><rect x="1101.7" y="257.5" width="2.1" height="3.4" fill="#1478e6"/><rect x="1102.9" y="258.5" width="2.8" height="1.9" fill="#f0ec90"/><rect x="1105.3" y="259.3" width="1.2" height="5.2" fill="#1478e6"/><rect x="1104.9" y="259.3" width="2.1" height="2.2" fill="#1478e6"/><rect x="1106.8" y="257.7" width="1.2" height="3.8" fill="#ff0000"/><rect x="1106.4" y="258.7" width="2.1" height="2.8" fill="#ff0000"/><rect x="1108.4" y="255.7" width="1.2" height="6.8" fill="#1478e6"/><rect x="1108.0" y="258.7" width="2.1" height="2.8" fill="#1478e6"/><rect x="1110.0" y="253.7" width="1.2" height="7.7" fill="#ff0000"/><rect x="1109.6" y="255.7" width="2.1" height="5.7" fill="#ff0000"/><rect x="1111.6" y="255.2" width="1.2" height="4.2" fill="#ff0000"/><rect x="1111.2" y="255.2" width="2.1" height="2.2" fill="#ff0000"/><rect x="1113.2" y="253.2" width="1.2" height="5.4" fill="#1478e6"/><rect x="1112.8" y="255.2" width="2.1" height="3.4" fill="#1478e6"/><rect x="1114.7" y="255.3" width="1.2" height="5.2" fill="#ff0000"/><rect x="1114.3" y="256.3" width="2.1" height="2.2" fill="#ff0000"/><rect x="1116.3" y="253.6" width="1.2" height="6.4" fill="#ff0000"/><rect x="1115.9" y="254.6" width="2.1" height="3.4" fill="#ff0000"/><rect x="1117.9" y="252.0" width="1.2" height="5.2" fill="#ff0000"/><rect x="1117.5" y="254.0" width="2.1" height="2.2" fill="#ff0000"/><rect x="1118.7" y="253.2" width="2.8" height="1.9" fill="#f0ec90"/><rect x="1120.3" y="252.6" width="2.8" height="1.9" fill="#f0ec90"/><rect x="1122.6" y="252.4" width="1.2" height="6.8" fill="#1478e6"/><rect x="1122.2" y="253.4" width="2.1" height="2.8" fill="#1478e6"/><rect x="1123.4" y="253.8" width="2.8" height="1.9" fill="#f0ec90"/><rect x="1125.8" y="254.6" width="1.2" height="4.8" fill="#1478e6"/><rect x="1125.4" y="254.6" width="2.1" height="2.8" fill="#1478e6"/><rect x="1127.0" y="255.7" width="2.1" height="2.2" fill="#1478e6"/><rect x="1128.6" y="254.6" width="2.1" height="3.4" fill="#ff0000"/><rect x="1129.7" y="250.8" width="2.8" height="1.9" fill="#f0ec90"/><rect x="1131.7" y="251.6" width="2.1" height="2.8" fill="#1478e6"/><rect x="1133.7" y="245.6" width="1.2" height="8.7" fill="#ff0000"/><rect x="1133.3" y="248.6" width="2.1" height="5.7" fill="#ff0000"/><rect x="1135.3" y="245.5" width="1.2" height="7.8" fill="#ff0000"/><rect x="1134.9" y="247.5" width="2.1" height="2.8" fill="#ff0000"/><rect x="1136.9" y="245.3" width="1.2" height="6.8" fill="#ff0000"/><rect x="1136.5" y="246.3" width="2.1" height="2.8" fill="#ff0000"/><rect x="1138.4" y="243.3" width="1.2" height="6.2" fill="#1478e6"/><rect x="1138.0" y="246.3" width="2.1" height="2.2" fill="#1478e6"/><rect x="1139.6" y="246.3" width="2.1" height="2.2" fill="#ff0000"/><rect x="1141.6" y="246.3" width="1.2" height="7.0" fill="#1478e6"/><rect x="1141.2" y="246.3" width="2.1" height="4.0" fill="#1478e6"/><rect x="1143.2" y="248.6" width="1.2" height="8.7" fill="#1478e6"/><rect x="1142.8" y="248.6" width="2.1" height="5.7" fill="#1478e6"/><rect x="1144.8" y="252.8" width="1.2" height="4.2" fill="#1478e6"/><rect x="1144.4" y="252.8" width="2.1" height="2.2" fill="#1478e6"/><rect x="1146.3" y="253.4" width="1.2" height="6.7" fill="#1478e6"/><rect x="1145.9" y="253.4" width="2.1" height="5.7" fill="#1478e6"/><rect x="1147.5" y="257.5" width="2.1" height="4.0" fill="#1478e6"/><rect x="1149.5" y="257.7" width="1.2" height="3.8" fill="#ff0000"/><rect x="1149.1" y="258.7" width="2.1" height="2.8" fill="#ff0000"/><rect x="1150.3" y="256.1" width="2.8" height="1.9" fill="#f0ec90"/><rect x="1151.9" y="253.8" width="2.8" height="1.9" fill="#f0ec90"/><rect x="1154.2" y="252.4" width="1.2" height="4.8" fill="#ff0000"/><rect x="1153.8" y="253.4" width="2.1" height="2.8" fill="#ff0000"/><rect x="1155.8" y="250.4" width="1.2" height="5.6" fill="#ff0000"/><rect x="1155.4" y="250.4" width="2.1" height="4.6" fill="#ff0000"/><rect x="1157.4" y="249.4" width="1.2" height="7.7" fill="#1478e6"/><rect x="1157.0" y="250.4" width="2.1" height="5.7" fill="#1478e6"/><rect x="1159.0" y="252.6" width="1.2" height="4.2" fill="#1478e6"/><rect x="1158.6" y="254.6" width="2.1" height="2.2" fill="#1478e6"/><rect x="1159.8" y="254.4" width="2.8" height="1.9" fill="#f0ec90"/><rect x="1161.7" y="255.2" width="2.1" height="3.4" fill="#1478e6"/><rect x="1163.7" y="255.3" width="1.2" height="6.2" fill="#ff0000"/><rect x="1163.3" y="256.3" width="2.1" height="2.2" fill="#ff0000"/><rect x="1164.5" y="254.9" width="2.8" height="1.9" fill="#f0ec90"/><rect x="1166.1" y="252.0" width="2.8" height="1.9" fill="#f0ec90"/><rect x="1168.5" y="250.8" width="1.2" height="5.4" fill="#1478e6"/><rect x="1168.1" y="252.8" width="2.1" height="3.4" fill="#1478e6"/><rect x="1170.0" y="254.6" width="1.2" height="5.8" fill="#1478e6"/><rect x="1169.6" y="254.6" width="2.1" height="2.8" fill="#1478e6"/><rect x="1171.6" y="254.2" width="1.2" height="5.2" fill="#ff0000"/><rect x="1171.2" y="255.2" width="2.1" height="2.2" fill="#ff0000"/><rect x="1173.2" y="248.0" width="1.2" height="9.7" fill="#ff0000"/><rect x="1172.8" y="251.0" width="2.1" height="5.7" fill="#ff0000"/><rect x="1174.8" y="248.8" width="1.2" height="3.8" fill="#ff0000"/><rect x="1174.4" y="249.8" width="2.1" height="2.8" fill="#ff0000"/><rect x="1176.4" y="245.0" width="1.2" height="9.4" fill="#ff0000"/><rect x="1176.0" y="248.0" width="2.1" height="3.4" fill="#ff0000"/><rect x="1177.9" y="244.5" width="1.2" height="6.2" fill="#ff0000"/><rect x="1177.5" y="244.5" width="2.1" height="5.2" fill="#ff0000"/><rect x="1179.5" y="238.2" width="1.2" height="7.9" fill="#ff0000"/><rect x="1179.1" y="239.2" width="2.1" height="6.9" fill="#ff0000"/><rect x="1181.1" y="234.4" width="1.2" height="6.4" fill="#ff0000"/><rect x="1180.7" y="237.4" width="2.1" height="3.4" fill="#ff0000"/><rect x="1182.7" y="237.4" width="1.2" height="6.2" fill="#1478e6"/><rect x="1182.3" y="237.4" width="2.1" height="5.2" fill="#1478e6"/><rect x="1184.3" y="237.9" width="1.2" height="8.4" fill="#1478e6"/><rect x="1183.9" y="240.9" width="2.1" height="3.4" fill="#1478e6"/><rect x="1185.8" y="241.5" width="1.2" height="4.8" fill="#ff0000"/><rect x="1185.4" y="241.5" width="2.1" height="2.8" fill="#ff0000"/><rect x="1187.4" y="238.4" width="1.2" height="4.8" fill="#ff0000"/><rect x="1187.0" y="240.4" width="2.1" height="2.8" fill="#ff0000"/><rect x="1188.2" y="236.6" width="2.8" height="1.9" fill="#f0ec90"/><rect x="1190.6" y="234.4" width="1.2" height="5.2" fill="#1478e6"/><rect x="1190.2" y="237.4" width="2.1" height="2.2" fill="#1478e6"/><rect x="1192.2" y="234.4" width="1.2" height="8.2" fill="#ff0000"/><rect x="1191.8" y="234.4" width="2.1" height="5.2" fill="#ff0000"/><rect x="1193.7" y="232.8" width="1.2" height="5.2" fill="#ff0000"/><rect x="1193.3" y="233.8" width="2.1" height="2.2" fill="#ff0000"/><rect x="1195.3" y="232.8" width="1.2" height="6.2" fill="#1478e6"/><rect x="1194.9" y="233.8" width="2.1" height="5.2" fill="#1478e6"/><rect x="1196.5" y="236.8" width="2.1" height="2.2" fill="#ff0000"/><rect x="1197.7" y="234.8" width="2.8" height="1.9" fill="#f0ec90"/><rect x="1200.1" y="230.5" width="1.2" height="6.7" fill="#ff0000"/><rect x="1199.7" y="231.5" width="2.1" height="5.7" fill="#ff0000"/><rect x="1201.6" y="227.9" width="1.2" height="8.2" fill="#ff0000"/><rect x="1201.2" y="227.9" width="2.1" height="5.2" fill="#ff0000"/><rect x="1203.2" y="221.4" width="1.2" height="10.2" fill="#ff0000"/><rect x="1202.8" y="224.4" width="2.1" height="5.2" fill="#ff0000"/><rect x="1204.4" y="222.0" width="2.1" height="4.0" fill="#ff0000"/><rect x="1206.0" y="219.0" width="2.1" height="4.6" fill="#ff0000"/><rect x="1208.0" y="217.3" width="1.2" height="4.4" fill="#ff0000"/><rect x="1207.6" y="217.3" width="2.1" height="3.4" fill="#ff0000"/><rect x="1209.5" y="216.3" width="1.2" height="5.0" fill="#1478e6"/><rect x="1209.1" y="217.3" width="2.1" height="4.0" fill="#1478e6"/><rect x="1211.1" y="218.6" width="1.2" height="8.7" fill="#1478e6"/><rect x="1210.7" y="219.6" width="2.1" height="5.7" fill="#1478e6"/><rect x="1212.7" y="220.8" width="1.2" height="9.7" fill="#1478e6"/><rect x="1212.3" y="223.8" width="2.1" height="5.7" fill="#1478e6"/><rect x="1214.3" y="224.9" width="1.2" height="7.0" fill="#1478e6"/><rect x="1213.9" y="227.9" width="2.1" height="4.0" fill="#1478e6"/><rect x="1215.9" y="228.3" width="1.2" height="4.8" fill="#1478e6"/><rect x="1215.5" y="230.3" width="2.1" height="2.8" fill="#1478e6"/><rect x="1217.4" y="229.9" width="1.2" height="6.2" fill="#ff0000"/><rect x="1217.0" y="230.9" width="2.1" height="2.2" fill="#ff0000"/><rect x="1219.0" y="227.1" width="1.2" height="5.4" fill="#ff0000"/><rect x="1218.6" y="229.1" width="2.1" height="3.4" fill="#ff0000"/><rect x="1220.6" y="228.1" width="1.2" height="4.4" fill="#1478e6"/><rect x="1220.2" y="229.1" width="2.1" height="3.4" fill="#1478e6"/><rect x="1222.2" y="225.5" width="1.2" height="8.0" fill="#ff0000"/><rect x="1221.8" y="228.5" width="2.1" height="4.0" fill="#ff0000"/><rect x="1223.4" y="226.7" width="2.1" height="3.4" fill="#ff0000"/><rect x="1225.3" y="224.4" width="1.2" height="5.0" fill="#ff0000"/><rect x="1224.9" y="224.4" width="2.1" height="4.0" fill="#ff0000"/><rect x="1226.9" y="219.0" width="1.2" height="7.0" fill="#ff0000"/><rect x="1226.5" y="222.0" width="2.1" height="4.0" fill="#ff0000"/><rect x="1228.5" y="219.0" width="1.2" height="6.2" fill="#1478e6"/><rect x="1228.1" y="222.0" width="2.1" height="2.2" fill="#1478e6"/><rect x="1230.1" y="220.4" width="1.2" height="4.8" fill="#ff0000"/><rect x="1229.7" y="221.4" width="2.1" height="2.8" fill="#ff0000"/><rect x="1230.9" y="220.6" width="2.8" height="1.9" fill="#f0ec90"/><rect x="1233.2" y="220.4" width="1.2" height="3.8" fill="#1478e6"/><rect x="1232.8" y="221.4" width="2.1" height="2.8" fill="#1478e6"/><rect x="1234.8" y="220.6" width="1.2" height="4.8" fill="#1478e6"/><rect x="1234.4" y="222.6" width="2.1" height="2.8" fill="#1478e6"/><rect x="1236.4" y="221.8" width="1.2" height="6.2" fill="#1478e6"/><rect x="1236.0" y="223.8" width="2.1" height="2.2" fill="#1478e6"/><rect x="1238.0" y="220.8" width="1.2" height="5.2" fill="#ff0000"/><rect x="1237.6" y="223.8" width="2.1" height="2.2" fill="#ff0000"/><rect x="1239.2" y="223.8" width="2.1" height="2.8" fill="#1478e6"/><rect x="1241.1" y="225.0" width="1.2" height="5.4" fill="#1478e6"/><rect x="1240.7" y="225.0" width="2.1" height="3.4" fill="#1478e6"/><rect x="1242.7" y="226.7" width="1.2" height="3.8" fill="#1478e6"/><rect x="1242.3" y="226.7" width="2.1" height="2.8" fill="#1478e6"/><rect x="1244.3" y="224.9" width="1.2" height="9.0" fill="#1478e6"/><rect x="1243.9" y="227.9" width="2.1" height="4.0" fill="#1478e6"/><rect x="1245.5" y="228.5" width="2.1" height="3.4" fill="#ff0000"/><rect x="1247.5" y="223.6" width="1.2" height="6.6" fill="#ff0000"/><rect x="1247.1" y="225.6" width="2.1" height="4.6" fill="#ff0000"/><rect x="1248.6" y="225.0" width="2.1" height="2.2" fill="#ff0000"/><rect x="1250.6" y="223.4" width="1.2" height="6.2" fill="#ff0000"/><rect x="1250.2" y="224.4" width="2.1" height="2.2" fill="#ff0000"/><rect x="1252.2" y="222.0" width="1.2" height="7.0" fill="#ff0000"/><rect x="1251.8" y="222.0" width="2.1" height="4.0" fill="#ff0000"/><rect x="1253.8" y="219.0" width="1.2" height="6.6" fill="#ff0000"/><rect x="1253.4" y="219.0" width="2.1" height="4.6" fill="#ff0000"/><rect x="1255.4" y="215.4" width="1.2" height="5.2" fill="#ff0000"/><rect x="1255.0" y="218.4" width="2.1" height="2.2" fill="#ff0000"/><rect x="1256.9" y="212.5" width="1.2" height="8.6" fill="#ff0000"/><rect x="1256.5" y="215.5" width="2.1" height="4.6" fill="#ff0000"/><rect x="1258.5" y="212.3" width="1.2" height="5.8" fill="#ff0000"/><rect x="1258.1" y="214.3" width="2.1" height="2.8" fill="#ff0000"/><rect x="1259.3" y="213.5" width="2.8" height="1.9" fill="#f0ec90"/><rect x="1261.7" y="213.3" width="1.2" height="9.7" fill="#1478e6"/><rect x="1261.3" y="214.3" width="2.1" height="5.7" fill="#1478e6"/><rect x="1263.3" y="216.4" width="1.2" height="7.2" fill="#1478e6"/><rect x="1262.9" y="218.4" width="2.1" height="5.2" fill="#1478e6"/><rect x="1264.8" y="218.4" width="1.2" height="6.2" fill="#ff0000"/><rect x="1264.4" y="221.4" width="2.1" height="2.2" fill="#ff0000"/><rect x="1266.4" y="214.9" width="1.2" height="11.1" fill="#ff0000"/><rect x="1266.0" y="214.9" width="2.1" height="8.1" fill="#ff0000"/><rect x="1268.0" y="211.5" width="1.2" height="5.0" fill="#ff0000"/><rect x="1267.6" y="212.5" width="2.1" height="4.0" fill="#ff0000"/><rect x="1268.8" y="211.7" width="2.8" height="1.9" fill="#f0ec90"/><rect x="1270.8" y="212.5" width="2.1" height="4.0" fill="#1478e6"/><rect x="1271.9" y="212.9" width="2.8" height="1.9" fill="#f0ec90"/><rect x="1274.3" y="210.9" width="1.2" height="6.4" fill="#ff0000"/><rect x="1273.9" y="211.9" width="2.1" height="3.4" fill="#ff0000"/><rect x="1275.9" y="211.9" width="1.2" height="5.2" fill="#1478e6"/><rect x="1275.5" y="211.9" width="2.1" height="2.2" fill="#1478e6"/><rect x="1277.5" y="209.5" width="1.2" height="6.4" fill="#1478e6"/><rect x="1277.1" y="212.5" width="2.1" height="3.4" fill="#1478e6"/><rect x="1279.1" y="214.3" width="1.2" height="5.8" fill="#1478e6"/><rect x="1278.7" y="214.3" width="2.1" height="2.8" fill="#1478e6"/><rect x="1280.6" y="212.5" width="1.2" height="7.6" fill="#ff0000"/><rect x="1280.2" y="212.5" width="2.1" height="4.6" fill="#ff0000"/><rect x="1281.8" y="212.5" width="2.1" height="5.7" fill="#1478e6"/><rect x="1283.4" y="216.7" width="2.1" height="5.2" fill="#1478e6"/><rect x="1285.4" y="219.6" width="1.2" height="3.2" fill="#ff0000"/><rect x="1285.0" y="219.6" width="2.1" height="2.2" fill="#ff0000"/><rect x="1287.0" y="216.6" width="1.2" height="8.7" fill="#1478e6"/><rect x="1286.6" y="219.6" width="2.1" height="5.7" fill="#1478e6"/><rect x="1288.5" y="223.8" width="1.2" height="5.2" fill="#1478e6"/><rect x="1288.1" y="223.8" width="2.1" height="2.2" fill="#1478e6"/><rect x="1290.1" y="224.4" width="1.2" height="7.6" fill="#1478e6"/><rect x="1289.7" y="224.4" width="2.1" height="4.6" fill="#1478e6"/><rect x="1291.7" y="226.3" width="1.2" height="7.7" fill="#1478e6"/><rect x="1291.3" y="227.3" width="2.1" height="5.7" fill="#1478e6"/><rect x="1293.3" y="230.3" width="1.2" height="3.8" fill="#ff0000"/><rect x="1292.9" y="230.3" width="2.1" height="2.8" fill="#ff0000"/><rect x="1294.9" y="226.9" width="1.2" height="7.0" fill="#ff0000"/><rect x="1294.5" y="227.9" width="2.1" height="4.0" fill="#ff0000"/><rect x="1295.6" y="225.3" width="2.8" height="1.9" fill="#f0ec90"/><rect x="1298.0" y="220.8" width="1.2" height="7.0" fill="#ff0000"/><rect x="1297.6" y="223.8" width="2.1" height="4.0" fill="#ff0000"/><rect x="1299.6" y="223.8" width="1.2" height="6.7" fill="#1478e6"/><rect x="1299.2" y="223.8" width="2.1" height="5.7" fill="#1478e6"/><rect x="1301.2" y="224.9" width="1.2" height="10.7" fill="#1478e6"/><rect x="1300.8" y="227.9" width="2.1" height="5.7" fill="#1478e6"/><rect x="1302.8" y="232.1" width="1.2" height="11.9" fill="#1478e6"/><rect x="1302.4" y="232.1" width="2.1" height="9.9" fill="#1478e6"/><rect x="1304.3" y="237.4" width="1.2" height="9.7" fill="#1478e6"/><rect x="1303.9" y="240.4" width="2.1" height="5.7" fill="#1478e6"/><rect x="1305.1" y="243.7" width="2.8" height="1.9" fill="#f0ec90"/><rect x="1307.5" y="240.3" width="1.2" height="6.8" fill="#ff0000"/><rect x="1307.1" y="243.3" width="2.1" height="2.8" fill="#ff0000"/><rect x="1309.1" y="237.6" width="1.2" height="9.3" fill="#ff0000"/><rect x="1308.7" y="238.6" width="2.1" height="6.3" fill="#ff0000"/><rect x="1310.7" y="235.6" width="1.2" height="7.2" fill="#1478e6"/><rect x="1310.3" y="238.6" width="2.1" height="2.2" fill="#1478e6"/><rect x="1311.8" y="237.4" width="2.1" height="3.4" fill="#ff0000"/><rect x="1313.8" y="234.8" width="1.2" height="6.2" fill="#ff0000"/><rect x="1313.4" y="236.8" width="2.1" height="2.2" fill="#ff0000"/><rect x="1315.4" y="234.8" width="1.2" height="6.2" fill="#1478e6"/><rect x="1315.0" y="236.8" width="2.1" height="2.2" fill="#1478e6"/><rect x="1317.0" y="235.2" width="1.2" height="4.8" fill="#ff0000"/><rect x="1316.6" y="236.2" width="2.1" height="2.8" fill="#ff0000"/><rect x="1318.6" y="235.2" width="1.2" height="5.0" fill="#1478e6"/><rect x="1318.2" y="236.2" width="2.1" height="4.0" fill="#1478e6"/><rect x="1320.1" y="234.6" width="1.2" height="7.6" fill="#ff0000"/><rect x="1319.7" y="235.6" width="2.1" height="4.6" fill="#ff0000"/><rect x="1321.7" y="231.8" width="1.2" height="7.4" fill="#ff0000"/><rect x="1321.3" y="233.8" width="2.1" height="3.4" fill="#ff0000"/><rect x="1323.3" y="231.8" width="1.2" height="5.2" fill="#1478e6"/><rect x="1322.9" y="233.8" width="2.1" height="2.2" fill="#1478e6"/><rect x="1324.9" y="232.7" width="1.2" height="5.4" fill="#ff0000"/><rect x="1324.5" y="232.7" width="2.1" height="3.4" fill="#ff0000"/><rect x="1326.5" y="232.7" width="1.2" height="3.8" fill="#1478e6"/><rect x="1326.1" y="232.7" width="2.1" height="2.8" fill="#1478e6"/><rect x="1328.0" y="230.3" width="1.2" height="8.2" fill="#ff0000"/><rect x="1327.6" y="230.3" width="2.1" height="5.2" fill="#ff0000"/><rect x="1329.6" y="226.1" width="1.2" height="5.8" fill="#ff0000"/><rect x="1329.2" y="229.1" width="2.1" height="2.8" fill="#ff0000"/><rect x="1331.2" y="226.1" width="1.2" height="7.6" fill="#ff0000"/><rect x="1330.8" y="226.1" width="2.1" height="4.6" fill="#ff0000"/><rect x="1332.8" y="221.8" width="1.2" height="9.0" fill="#ff0000"/><rect x="1332.4" y="223.8" width="2.1" height="4.0" fill="#ff0000"/><rect x="1334.4" y="219.8" width="1.2" height="6.6" fill="#ff0000"/><rect x="1334.0" y="220.8" width="2.1" height="4.6" fill="#ff0000"/><rect x="1335.5" y="218.4" width="2.1" height="4.0" fill="#ff0000"/><rect x="1337.5" y="213.3" width="1.2" height="7.7" fill="#ff0000"/><rect x="1337.1" y="214.3" width="2.1" height="5.7" fill="#ff0000"/><rect x="1339.1" y="210.1" width="1.2" height="7.8" fill="#ff0000"/><rect x="1338.7" y="213.1" width="2.1" height="2.8" fill="#ff0000"/><rect x="1340.7" y="212.1" width="1.2" height="5.4" fill="#1478e6"/><rect x="1340.3" y="213.1" width="2.1" height="3.4" fill="#1478e6"/><rect x="1341.9" y="214.9" width="2.1" height="5.7" fill="#1478e6"/><rect x="1343.4" y="217.3" width="2.1" height="3.4" fill="#ff0000"/><rect x="1345.4" y="215.3" width="1.2" height="8.0" fill="#1478e6"/><rect x="1345.0" y="217.3" width="2.1" height="4.0" fill="#1478e6"/><rect x="1347.0" y="218.6" width="1.2" height="7.9" fill="#1478e6"/><rect x="1346.6" y="219.6" width="2.1" height="6.9" fill="#1478e6"/><rect x="1348.6" y="224.0" width="1.2" height="6.2" fill="#1478e6"/><rect x="1348.2" y="225.0" width="2.1" height="2.2" fill="#1478e6"/><rect x="1350.2" y="224.6" width="1.2" height="3.8" fill="#1478e6"/><rect x="1349.8" y="225.6" width="2.1" height="2.8" fill="#1478e6"/><rect x="1351.7" y="226.7" width="1.2" height="6.7" fill="#1478e6"/><rect x="1351.3" y="226.7" width="2.1" height="5.7" fill="#1478e6"/><rect x="1353.3" y="228.9" width="1.2" height="5.2" fill="#1478e6"/><rect x="1352.9" y="230.9" width="2.1" height="2.2" fill="#1478e6"/><rect x="1354.9" y="231.5" width="1.2" height="6.0" fill="#1478e6"/><rect x="1354.5" y="231.5" width="2.1" height="4.0" fill="#1478e6"/><rect x="1356.5" y="232.1" width="1.2" height="4.4" fill="#ff0000"/><rect x="1356.1" y="232.1" width="2.1" height="3.4" fill="#ff0000"/><rect x="1358.1" y="231.1" width="1.2" height="3.2" fill="#1478e6"/><rect x="1357.7" y="232.1" width="2.1" height="2.2" fill="#1478e6"/><rect x="1359.2" y="230.3" width="2.1" height="4.0" fill="#ff0000"/><rect x="1361.2" y="226.1" width="1.2" height="5.8" fill="#ff0000"/><rect x="1360.8" y="229.1" width="2.1" height="2.8" fill="#ff0000"/><rect x="1362.4" y="229.1" width="2.1" height="2.2" fill="#1478e6"/><rect x="1364.4" y="224.3" width="1.2" height="8.0" fill="#ff0000"/><rect x="1364.0" y="227.3" width="2.1" height="4.0" fill="#ff0000"/><rect x="1365.6" y="224.4" width="2.1" height="4.6" fill="#ff0000"/><rect x="1366.7" y="220.6" width="2.8" height="1.9" fill="#f0ec90"/><rect x="1368.3" y="220.6" width="2.8" height="1.9" fill="#f0ec90"/><rect x="1370.7" y="221.4" width="1.2" height="4.2" fill="#1478e6"/><rect x="1370.3" y="221.4" width="2.1" height="2.2" fill="#1478e6"/><rect x="1372.3" y="221.0" width="1.2" height="4.4" fill="#1478e6"/><rect x="1371.9" y="222.0" width="2.1" height="3.4" fill="#1478e6"/><rect x="1373.9" y="220.8" width="1.2" height="9.2" fill="#1478e6"/><rect x="1373.5" y="223.8" width="2.1" height="5.2" fill="#1478e6"/><rect x="1375.4" y="224.3" width="1.2" height="8.4" fill="#1478e6"/><rect x="1375.0" y="227.3" width="2.1" height="3.4" fill="#1478e6"/><rect x="1376.2" y="229.5" width="2.8" height="1.9" fill="#f0ec90"/><rect x="1378.6" y="227.3" width="1.2" height="13.3" fill="#1478e6"/><rect x="1378.2" y="230.3" width="2.1" height="9.3" fill="#1478e6"/><rect x="1380.2" y="237.0" width="1.2" height="10.9" fill="#1478e6"/><rect x="1379.8" y="238.0" width="2.1" height="9.9" fill="#1478e6"/><rect x="1381.0" y="247.8" width="2.8" height="1.9" fill="#f0ec90"/><rect x="1383.3" y="243.9" width="1.2" height="7.3" fill="#ff0000"/><rect x="1382.9" y="243.9" width="2.1" height="6.3" fill="#ff0000"/><rect x="1384.9" y="237.8" width="1.2" height="8.7" fill="#ff0000"/><rect x="1384.5" y="239.8" width="2.1" height="5.7" fill="#ff0000"/><rect x="1386.5" y="229.1" width="1.2" height="15.3" fill="#ff0000"/><rect x="1386.1" y="232.1" width="2.1" height="9.3" fill="#ff0000"/><rect x="1388.1" y="226.1" width="1.2" height="8.6" fill="#ff0000"/><rect x="1387.7" y="229.1" width="2.1" height="4.6" fill="#ff0000"/><rect x="1388.9" y="228.3" width="2.8" height="1.9" fill="#f0ec90"/><rect x="1391.2" y="224.6" width="1.2" height="9.2" fill="#ff0000"/><rect x="1390.8" y="225.6" width="2.1" height="5.2" fill="#ff0000"/><rect x="1392.8" y="222.6" width="1.2" height="8.8" fill="#1478e6"/><rect x="1392.4" y="225.6" width="2.1" height="2.8" fill="#1478e6"/><rect x="1394.4" y="224.4" width="1.2" height="5.0" fill="#ff0000"/><rect x="1394.0" y="224.4" width="2.1" height="4.0" fill="#ff0000"/><rect x="1395.2" y="223.6" width="2.8" height="1.9" fill="#f0ec90"/><rect x="1397.6" y="220.4" width="1.2" height="5.6" fill="#ff0000"/><rect x="1397.2" y="221.4" width="2.1" height="4.6" fill="#ff0000"/><rect x="1398.7" y="220.2" width="2.1" height="2.8" fill="#ff0000"/><rect x="1400.3" y="217.3" width="2.1" height="4.6" fill="#ff0000"/><rect x="1402.3" y="212.7" width="1.2" height="9.2" fill="#ff0000"/><rect x="1401.9" y="213.7" width="2.1" height="5.2" fill="#ff0000"/><rect x="1403.5" y="212.5" width="2.1" height="2.8" fill="#ff0000"/><rect x="1405.5" y="209.5" width="1.2" height="5.8" fill="#1478e6"/><rect x="1405.1" y="212.5" width="2.1" height="2.8" fill="#1478e6"/><rect x="1407.0" y="209.0" width="1.2" height="8.3" fill="#ff0000"/><rect x="1406.6" y="209.0" width="2.1" height="6.3" fill="#ff0000"/><rect x="1408.6" y="208.0" width="1.2" height="6.4" fill="#1478e6"/><rect x="1408.2" y="209.0" width="2.1" height="3.4" fill="#1478e6"/><rect x="1410.2" y="207.4" width="1.2" height="5.0" fill="#ff0000"/><rect x="1409.8" y="208.4" width="2.1" height="4.0" fill="#ff0000"/><rect x="1411.0" y="207.6" width="2.8" height="1.9" fill="#f0ec90"/><rect x="1412.6" y="204.6" width="2.8" height="1.9" fill="#f0ec90"/><rect x="1414.5" y="198.9" width="2.1" height="8.1" fill="#ff0000"/><rect x="1416.5" y="191.6" width="1.2" height="10.9" fill="#ff0000"/><rect x="1416.1" y="193.6" width="2.1" height="6.9" fill="#ff0000"/><rect x="1418.1" y="191.4" width="1.2" height="3.8" fill="#ff0000"/><rect x="1417.7" y="192.4" width="2.1" height="2.8" fill="#ff0000"/><rect x="1419.7" y="185.1" width="1.2" height="8.9" fill="#ff0000"/><rect x="1419.3" y="187.1" width="2.1" height="6.9" fill="#ff0000"/><rect x="1421.3" y="182.5" width="1.2" height="7.2" fill="#ff0000"/><rect x="1420.9" y="183.5" width="2.1" height="5.2" fill="#ff0000"/><rect x="1422.8" y="181.5" width="1.2" height="4.8" fill="#1478e6"/><rect x="1422.4" y="183.5" width="2.1" height="2.8" fill="#1478e6"/><rect x="1424.4" y="183.7" width="1.2" height="5.0" fill="#1478e6"/><rect x="1424.0" y="184.7" width="2.1" height="4.0" fill="#1478e6"/><rect x="1426.0" y="183.1" width="1.2" height="5.6" fill="#ff0000"/><rect x="1425.6" y="184.1" width="2.1" height="4.6" fill="#ff0000"/><rect x="1427.6" y="181.2" width="1.2" height="5.6" fill="#ff0000"/><rect x="1427.2" y="181.2" width="2.1" height="4.6" fill="#ff0000"/><rect x="1429.2" y="178.2" width="1.2" height="8.4" fill="#1478e6"/><rect x="1428.8" y="181.2" width="2.1" height="3.4" fill="#1478e6"/><rect x="1430.7" y="180.2" width="1.2" height="4.4" fill="#ff0000"/><rect x="1430.3" y="181.2" width="2.1" height="3.4" fill="#ff0000"/><rect x="1432.3" y="178.0" width="1.2" height="4.8" fill="#ff0000"/><rect x="1431.9" y="180.0" width="2.1" height="2.8" fill="#ff0000"/><rect x="1433.5" y="177.0" width="2.1" height="4.6" fill="#ff0000"/><rect x="1435.1" y="175.8" width="2.1" height="2.8" fill="#ff0000"/><rect x="1436.3" y="175.0" width="2.8" height="1.9" fill="#f0ec90"/><rect x="1437.8" y="175.0" width="2.8" height="1.9" fill="#f0ec90"/><rect x="1440.2" y="173.8" width="1.2" height="4.2" fill="#1478e6"/><rect x="1439.8" y="175.8" width="2.1" height="2.2" fill="#1478e6"/><rect x="1441.8" y="173.8" width="1.2" height="5.2" fill="#ff0000"/><rect x="1441.4" y="175.8" width="2.1" height="2.2" fill="#ff0000"/><rect x="1443.0" y="175.8" width="2.1" height="3.4" fill="#1478e6"/><rect x="1445.0" y="174.6" width="1.2" height="5.8" fill="#1478e6"/><rect x="1444.6" y="177.6" width="2.1" height="2.8" fill="#1478e6"/><rect x="1446.5" y="176.4" width="1.2" height="5.0" fill="#ff0000"/><rect x="1446.1" y="176.4" width="2.1" height="4.0" fill="#ff0000"/><rect x="1447.3" y="177.4" width="2.8" height="1.9" fill="#f0ec90"/><rect x="1449.7" y="175.2" width="1.2" height="15.5" fill="#1478e6"/><rect x="1449.3" y="178.2" width="2.1" height="10.5" fill="#1478e6"/><rect x="1451.3" y="187.1" width="1.2" height="10.5" fill="#1478e6"/><rect x="1450.9" y="187.1" width="2.1" height="7.5" fill="#1478e6"/><rect x="1452.9" y="193.0" width="1.2" height="7.6" fill="#1478e6"/><rect x="1452.5" y="193.0" width="2.1" height="4.6" fill="#1478e6"/><rect x="1454.4" y="194.0" width="1.2" height="4.2" fill="#1478e6"/><rect x="1454.0" y="196.0" width="2.1" height="2.2" fill="#1478e6"/><rect x="1455.6" y="192.4" width="2.1" height="5.7" fill="#ff0000"/><rect x="1456.8" y="191.6" width="2.8" height="1.9" fill="#f0ec90"/><rect x="1458.8" y="190.6" width="2.1" height="3.4" fill="#ff0000"/><rect x="1460.0" y="189.8" width="2.8" height="1.9" fill="#f0ec90"/><rect x="1462.3" y="189.0" width="1.2" height="4.2" fill="#ff0000"/><rect x="1461.9" y="190.0" width="2.1" height="2.2" fill="#ff0000"/><rect x="1463.1" y="188.6" width="2.8" height="1.9" fill="#f0ec90"/><rect x="1465.5" y="184.7" width="1.2" height="7.4" fill="#ff0000"/><rect x="1465.1" y="187.7" width="2.1" height="3.4" fill="#ff0000"/><rect x="1467.1" y="185.5" width="1.2" height="5.8" fill="#ff0000"/><rect x="1466.7" y="186.5" width="2.1" height="2.8" fill="#ff0000"/><rect x="1467.9" y="185.7" width="2.8" height="1.9" fill="#f0ec90"/><rect x="1470.2" y="186.5" width="1.2" height="8.3" fill="#1478e6"/><rect x="1469.8" y="186.5" width="2.1" height="6.3" fill="#1478e6"/><rect x="1471.4" y="191.2" width="2.1" height="4.0" fill="#1478e6"/><rect x="1473.4" y="190.2" width="1.2" height="8.0" fill="#ff0000"/><rect x="1473.0" y="191.2" width="2.1" height="4.0" fill="#ff0000"/><rect x="1474.6" y="191.2" width="2.1" height="3.4" fill="#1478e6"/><rect x="1476.2" y="187.7" width="2.1" height="6.9" fill="#ff0000"/><rect x="1478.1" y="185.1" width="1.2" height="7.2" fill="#ff0000"/><rect x="1477.7" y="187.1" width="2.1" height="2.2" fill="#ff0000"/><rect x="1479.7" y="185.1" width="1.2" height="8.4" fill="#1478e6"/><rect x="1479.3" y="187.1" width="2.1" height="3.4" fill="#1478e6"/><rect x="1481.3" y="185.8" width="1.2" height="8.6" fill="#1478e6"/><rect x="1480.9" y="188.8" width="2.1" height="4.6" fill="#1478e6"/><rect x="1482.9" y="188.6" width="1.2" height="4.8" fill="#ff0000"/><rect x="1482.5" y="190.6" width="2.1" height="2.8" fill="#ff0000"/><rect x="1484.5" y="189.6" width="1.2" height="3.2" fill="#1478e6"/><rect x="1484.1" y="190.6" width="2.1" height="2.2" fill="#1478e6"/><rect x="1486.0" y="184.1" width="1.2" height="9.7" fill="#ff0000"/><rect x="1485.6" y="187.1" width="2.1" height="5.7" fill="#ff0000"/><rect x="1487.6" y="181.7" width="1.2" height="7.0" fill="#ff0000"/><rect x="1487.2" y="184.7" width="2.1" height="4.0" fill="#ff0000"/><rect x="1489.2" y="183.7" width="1.2" height="4.2" fill="#1478e6"/><rect x="1488.8" y="184.7" width="2.1" height="2.2" fill="#1478e6"/><rect x="1490.8" y="182.3" width="1.2" height="14.1" fill="#1478e6"/><rect x="1490.4" y="185.3" width="2.1" height="8.1" fill="#1478e6"/><rect x="1492.0" y="191.8" width="2.1" height="4.6" fill="#1478e6"/><rect x="1493.9" y="194.8" width="1.2" height="11.1" fill="#1478e6"/><rect x="1493.5" y="194.8" width="2.1" height="8.1" fill="#1478e6"/><rect x="1495.5" y="200.3" width="1.2" height="6.7" fill="#1478e6"/><rect x="1495.1" y="201.3" width="2.1" height="5.7" fill="#1478e6"/><rect x="1496.7" y="205.4" width="2.1" height="2.2" fill="#1478e6"/><rect x="1498.7" y="203.8" width="1.2" height="5.8" fill="#ff0000"/><rect x="1498.3" y="204.8" width="2.1" height="2.8" fill="#ff0000"/><rect x="1500.3" y="204.8" width="1.2" height="3.8" fill="#1478e6"/><rect x="1499.9" y="204.8" width="2.1" height="2.8" fill="#1478e6"/><rect x="1501.8" y="203.0" width="1.2" height="8.2" fill="#1478e6"/><rect x="1501.4" y="206.0" width="2.1" height="2.2" fill="#1478e6"/><rect x="1503.4" y="204.4" width="1.2" height="5.8" fill="#ff0000"/><rect x="1503.0" y="205.4" width="2.1" height="2.8" fill="#ff0000"/><rect x="1505.0" y="203.4" width="1.2" height="7.4" fill="#1478e6"/><rect x="1504.6" y="205.4" width="2.1" height="3.4" fill="#1478e6"/><rect x="1506.2" y="206.0" width="2.1" height="2.8" fill="#ff0000"/><rect x="1508.2" y="200.6" width="1.2" height="7.0" fill="#ff0000"/><rect x="1507.8" y="203.6" width="2.1" height="4.0" fill="#ff0000"/><rect x="1509.7" y="200.3" width="1.2" height="5.0" fill="#ff0000"/><rect x="1509.3" y="201.3" width="2.1" height="4.0" fill="#ff0000"/><rect x="1511.3" y="200.1" width="1.2" height="5.8" fill="#ff0000"/><rect x="1510.9" y="200.1" width="2.1" height="2.8" fill="#ff0000"/><rect x="1512.1" y="199.3" width="2.8" height="1.9" fill="#f0ec90"/><rect x="1514.5" y="197.1" width="1.2" height="8.0" fill="#1478e6"/><rect x="1514.1" y="200.1" width="2.1" height="4.0" fill="#1478e6"/><rect x="1515.3" y="201.7" width="2.8" height="1.9" fill="#f0ec90"/><rect x="1517.6" y="198.7" width="1.2" height="5.4" fill="#ff0000"/><rect x="1517.2" y="200.7" width="2.1" height="3.4" fill="#ff0000"/><rect x="1518.4" y="197.5" width="2.8" height="1.9" fill="#f0ec90"/><rect x="1520.0" y="198.1" width="2.8" height="1.9" fill="#f0ec90"/><rect x="1522.4" y="198.9" width="1.2" height="5.4" fill="#1478e6"/><rect x="1522.0" y="198.9" width="2.1" height="3.4" fill="#1478e6"/><rect x="1524.0" y="200.1" width="1.2" height="3.2" fill="#ff0000"/><rect x="1523.6" y="200.1" width="2.1" height="2.2" fill="#ff0000"/><rect x="1525.5" y="199.1" width="1.2" height="4.8" fill="#1478e6"/><rect x="1525.1" y="200.1" width="2.1" height="2.8" fill="#1478e6"/><rect x="1527.1" y="197.1" width="1.2" height="5.8" fill="#ff0000"/><rect x="1526.7" y="200.1" width="2.1" height="2.8" fill="#ff0000"/><rect x="1528.7" y="197.1" width="1.2" height="6.2" fill="#1478e6"/><rect x="1528.3" y="200.1" width="2.1" height="2.2" fill="#1478e6"/><rect x="1529.5" y="198.1" width="2.8" height="1.9" fill="#f0ec90"/><rect x="1531.1" y="198.7" width="2.8" height="1.9" fill="#f0ec90"/><rect x="1533.4" y="197.5" width="1.2" height="8.4" fill="#1478e6"/><rect x="1533.0" y="199.5" width="2.1" height="3.4" fill="#1478e6"/><rect x="1534.6" y="196.0" width="2.1" height="6.9" fill="#ff0000"/><rect x="1536.6" y="194.0" width="1.2" height="7.4" fill="#1478e6"/><rect x="1536.2" y="196.0" width="2.1" height="3.4" fill="#1478e6"/><rect x="1537.8" y="196.0" width="2.1" height="3.4" fill="#ff0000"/><rect x="1539.8" y="191.6" width="1.2" height="6.0" fill="#ff0000"/><rect x="1539.4" y="193.6" width="2.1" height="4.0" fill="#ff0000"/><rect x="1541.3" y="190.6" width="1.2" height="6.6" fill="#ff0000"/><rect x="1540.9" y="190.6" width="2.1" height="4.6" fill="#ff0000"/><rect x="1542.9" y="189.6" width="1.2" height="6.8" fill="#1478e6"/><rect x="1542.5" y="190.6" width="2.1" height="2.8" fill="#1478e6"/><rect x="1543.7" y="191.0" width="2.8" height="1.9" fill="#f0ec90"/><rect x="1545.7" y="191.8" width="2.1" height="4.0" fill="#1478e6"/><rect x="1546.9" y="194.0" width="2.8" height="1.9" fill="#f0ec90"/><rect x="1549.2" y="191.2" width="1.2" height="8.2" fill="#ff0000"/><rect x="1548.8" y="191.2" width="2.1" height="5.2" fill="#ff0000"/><rect x="1550.8" y="186.1" width="1.2" height="8.7" fill="#ff0000"/><rect x="1550.4" y="187.1" width="2.1" height="5.7" fill="#ff0000"/><rect x="1552.4" y="184.1" width="1.2" height="7.2" fill="#1478e6"/><rect x="1552.0" y="187.1" width="2.1" height="2.2" fill="#1478e6"/><rect x="1553.6" y="186.5" width="2.1" height="2.8" fill="#ff0000"/><rect x="1555.6" y="184.1" width="1.2" height="7.0" fill="#ff0000"/><rect x="1555.2" y="184.1" width="2.1" height="4.0" fill="#ff0000"/><rect x="1557.1" y="180.5" width="1.2" height="6.2" fill="#ff0000"/><rect x="1556.7" y="183.5" width="2.1" height="2.2" fill="#ff0000"/><rect x="1557.9" y="181.5" width="2.8" height="1.9" fill="#f0ec90"/><rect x="1560.3" y="179.2" width="1.2" height="7.8" fill="#ff0000"/><rect x="1559.9" y="181.2" width="2.1" height="2.8" fill="#ff0000"/><rect x="1561.9" y="181.2" width="1.2" height="6.2" fill="#1478e6"/><rect x="1561.5" y="181.2" width="2.1" height="5.2" fill="#1478e6"/><rect x="1563.5" y="181.1" width="1.2" height="6.2" fill="#ff0000"/><rect x="1563.1" y="184.1" width="2.1" height="2.2" fill="#ff0000"/><rect x="1564.6" y="184.1" width="2.1" height="6.3" fill="#1478e6"/><rect x="1566.6" y="185.7" width="1.2" height="7.8" fill="#ff0000"/><rect x="1566.2" y="187.7" width="2.1" height="2.8" fill="#ff0000"/><rect x="1568.2" y="186.7" width="1.2" height="3.2" fill="#1478e6"/><rect x="1567.8" y="187.7" width="2.1" height="2.2" fill="#1478e6"/><rect x="1569.8" y="181.9" width="1.2" height="7.9" fill="#ff0000"/><rect x="1569.4" y="182.9" width="2.1" height="6.9" fill="#ff0000"/><rect x="1571.4" y="180.3" width="1.2" height="7.2" fill="#ff0000"/><rect x="1571.0" y="182.3" width="2.1" height="2.2" fill="#ff0000"/><rect x="1572.9" y="179.7" width="1.2" height="5.2" fill="#ff0000"/><rect x="1572.5" y="181.7" width="2.1" height="2.2" fill="#ff0000"/><rect x="1574.5" y="181.7" width="1.2" height="5.2" fill="#1478e6"/><rect x="1574.1" y="181.7" width="2.1" height="2.2" fill="#1478e6"/><rect x="1575.7" y="181.7" width="2.1" height="2.2" fill="#ff0000"/><rect x="1576.9" y="181.5" width="2.8" height="1.9" fill="#f0ec90"/><rect x="1578.5" y="180.9" width="2.8" height="1.9" fill="#f0ec90"/><rect x="1580.8" y="181.7" width="1.2" height="7.6" fill="#1478e6"/><rect x="1580.4" y="181.7" width="2.1" height="4.6" fill="#1478e6"/><rect x="1581.6" y="183.9" width="2.8" height="1.9" fill="#f0ec90"/><rect x="1584.0" y="184.1" width="1.2" height="4.2" fill="#ff0000"/><rect x="1583.6" y="184.1" width="2.1" height="2.2" fill="#ff0000"/><rect x="1584.8" y="183.3" width="2.8" height="1.9" fill="#f0ec90"/><rect x="1587.2" y="184.1" width="1.2" height="5.8" fill="#1478e6"/><rect x="1586.8" y="184.1" width="2.1" height="2.8" fill="#1478e6"/><rect x="1588.7" y="184.1" width="1.2" height="5.8" fill="#ff0000"/><rect x="1588.3" y="184.1" width="2.1" height="2.8" fill="#ff0000"/><rect x="1589.5" y="180.4" width="2.8" height="1.9" fill="#f0ec90"/><rect x="1591.9" y="179.2" width="1.2" height="4.8" fill="#1478e6"/><rect x="1591.5" y="181.2" width="2.1" height="2.8" fill="#1478e6"/><rect x="1593.5" y="179.6" width="1.2" height="6.4" fill="#ff0000"/><rect x="1593.1" y="180.6" width="2.1" height="3.4" fill="#ff0000"/><rect x="1594.7" y="176.4" width="2.1" height="5.7" fill="#ff0000"/><rect x="1596.6" y="173.8" width="1.2" height="5.2" fill="#ff0000"/><rect x="1596.2" y="175.8" width="2.1" height="2.2" fill="#ff0000"/><rect x="1598.2" y="172.8" width="1.2" height="5.8" fill="#1478e6"/><rect x="1597.8" y="175.8" width="2.1" height="2.8" fill="#1478e6"/><rect x="1599.8" y="173.6" width="1.2" height="6.0" fill="#ff0000"/><rect x="1599.4" y="174.6" width="2.1" height="4.0" fill="#ff0000"/><rect x="1601.4" y="174.6" width="1.2" height="5.4" fill="#1478e6"/><rect x="1601.0" y="174.6" width="2.1" height="3.4" fill="#1478e6"/><rect x="1603.0" y="175.4" width="1.2" height="6.4" fill="#1478e6"/><rect x="1602.6" y="176.4" width="2.1" height="3.4" fill="#1478e6"/><rect x="1604.1" y="178.2" width="2.1" height="4.6" fill="#1478e6"/><rect x="1606.1" y="181.2" width="1.2" height="6.6" fill="#1478e6"/><rect x="1605.7" y="181.2" width="2.1" height="4.6" fill="#1478e6"/><rect x="1606.9" y="183.3" width="2.8" height="1.9" fill="#f0ec90"/><rect x="1608.5" y="186.3" width="2.8" height="1.9" fill="#f0ec90"/><rect x="1610.9" y="183.5" width="1.2" height="8.2" fill="#ff0000"/><rect x="1610.5" y="186.5" width="2.1" height="2.2" fill="#ff0000"/><rect x="1612.4" y="184.5" width="1.2" height="8.2" fill="#1478e6"/><rect x="1612.0" y="186.5" width="2.1" height="5.2" fill="#1478e6"/><rect x="1613.6" y="190.0" width="2.1" height="5.7" fill="#1478e6"/><rect x="1614.8" y="193.4" width="2.8" height="1.9" fill="#f0ec90"/><rect x="1617.2" y="188.2" width="1.2" height="7.6" fill="#ff0000"/><rect x="1616.8" y="191.2" width="2.1" height="4.6" fill="#ff0000"/><rect x="1618.8" y="189.2" width="1.2" height="7.0" fill="#1478e6"/><rect x="1618.4" y="191.2" width="2.1" height="4.0" fill="#1478e6"/><rect x="1620.3" y="190.6" width="1.2" height="7.4" fill="#1478e6"/><rect x="1619.9" y="193.6" width="2.1" height="3.4" fill="#1478e6"/><rect x="1621.1" y="192.2" width="2.8" height="1.9" fill="#f0ec90"/><rect x="1623.5" y="189.4" width="1.2" height="6.2" fill="#ff0000"/><rect x="1623.1" y="189.4" width="2.1" height="5.2" fill="#ff0000"/><rect x="1624.3" y="187.5" width="2.8" height="1.9" fill="#f0ec90"/><rect x="1625.9" y="187.5" width="2.8" height="1.9" fill="#f0ec90"/><rect x="1628.2" y="187.3" width="1.2" height="5.0" fill="#1478e6"/><rect x="1627.8" y="188.3" width="2.1" height="4.0" fill="#1478e6"/><rect x="1629.8" y="187.6" width="1.2" height="8.4" fill="#1478e6"/><rect x="1629.4" y="190.6" width="2.1" height="3.4" fill="#1478e6"/><rect x="1630.6" y="192.8" width="2.8" height="1.9" fill="#f0ec90"/><rect x="1633.0" y="186.8" width="1.2" height="8.3" fill="#ff0000"/><rect x="1632.6" y="188.8" width="2.1" height="6.3" fill="#ff0000"/><rect x="1633.8" y="187.5" width="2.8" height="1.9" fill="#f0ec90"/><rect x="1636.1" y="187.7" width="1.2" height="4.2" fill="#ff0000"/><rect x="1635.7" y="187.7" width="2.1" height="2.2" fill="#ff0000"/><rect x="1636.9" y="186.9" width="2.8" height="1.9" fill="#f0ec90"/><rect x="1639.3" y="186.5" width="1.2" height="3.8" fill="#ff0000"/><rect x="1638.9" y="186.5" width="2.1" height="2.8" fill="#ff0000"/><rect x="1640.1" y="185.7" width="2.8" height="1.9" fill="#f0ec90"/><rect x="1642.5" y="184.5" width="1.2" height="6.4" fill="#1478e6"/><rect x="1642.1" y="186.5" width="2.1" height="3.4" fill="#1478e6"/><rect x="1643.6" y="188.3" width="2.1" height="4.0" fill="#1478e6"/><rect x="1645.6" y="185.8" width="1.2" height="9.4" fill="#ff0000"/><rect x="1645.2" y="188.8" width="2.1" height="3.4" fill="#ff0000"/><rect x="1646.4" y="185.7" width="2.8" height="1.9" fill="#f0ec90"/><rect x="1648.8" y="181.1" width="1.2" height="8.0" fill="#ff0000"/><rect x="1648.4" y="184.1" width="2.1" height="4.0" fill="#ff0000"/><rect x="1650.4" y="183.5" width="1.2" height="3.2" fill="#ff0000"/><rect x="1650.0" y="183.5" width="2.1" height="2.2" fill="#ff0000"/><rect x="1651.1" y="180.9" width="2.8" height="1.9" fill="#f0ec90"/><rect x="1652.7" y="180.9" width="2.8" height="1.9" fill="#f0ec90"/><rect x="1654.7" y="180.6" width="2.1" height="2.8" fill="#ff0000"/><rect x="1655.9" y="180.4" width="2.8" height="1.9" fill="#f0ec90"/><rect x="1657.9" y="180.6" width="2.1" height="2.2" fill="#ff0000"/><rect x="1659.0" y="181.5" width="2.8" height="1.9" fill="#f0ec90"/><rect x="1661.4" y="180.3" width="1.2" height="10.3" fill="#1478e6"/><rect x="1661.0" y="182.3" width="2.1" height="6.3" fill="#1478e6"/><rect x="1663.0" y="187.1" width="1.2" height="8.5" fill="#1478e6"/><rect x="1662.6" y="187.1" width="2.1" height="7.5" fill="#1478e6"/><rect x="1664.2" y="193.0" width="2.1" height="3.4" fill="#1478e6"/><rect x="1666.2" y="191.8" width="1.2" height="5.8" fill="#1478e6"/><rect x="1665.8" y="194.8" width="2.1" height="2.8" fill="#1478e6"/><rect x="1667.3" y="196.0" width="2.1" height="4.0" fill="#1478e6"/><rect x="1669.3" y="198.3" width="1.2" height="3.8" fill="#1478e6"/><rect x="1668.9" y="198.3" width="2.1" height="2.8" fill="#1478e6"/><rect x="1670.1" y="198.7" width="2.8" height="1.9" fill="#f0ec90"/><rect x="1672.1" y="199.5" width="2.1" height="6.3" fill="#1478e6"/><rect x="1673.7" y="202.5" width="2.1" height="3.4" fill="#ff0000"/><rect x="1675.6" y="202.5" width="1.2" height="8.7" fill="#1478e6"/><rect x="1675.2" y="202.5" width="2.1" height="5.7" fill="#1478e6"/><rect x="1676.8" y="204.8" width="2.1" height="3.4" fill="#ff0000"/><rect x="1678.8" y="203.6" width="1.2" height="3.8" fill="#ff0000"/><rect x="1678.4" y="203.6" width="2.1" height="2.8" fill="#ff0000"/><rect x="1679.6" y="203.4" width="2.8" height="1.9" fill="#f0ec90"/><rect x="1682.0" y="203.6" width="1.2" height="4.2" fill="#ff0000"/><rect x="1681.6" y="203.6" width="2.1" height="2.2" fill="#ff0000"/><rect x="1682.7" y="201.7" width="2.8" height="1.9" fill="#f0ec90"/><rect x="1684.3" y="201.7" width="2.8" height="1.9" fill="#f0ec90"/><rect x="1685.9" y="201.7" width="2.8" height="1.9" fill="#f0ec90"/><rect x="1687.5" y="201.7" width="2.8" height="1.9" fill="#f0ec90"/><rect x="1689.9" y="200.5" width="1.2" height="4.8" fill="#1478e6"/><rect x="1689.5" y="202.5" width="2.1" height="2.8" fill="#1478e6"/><rect x="1691.4" y="201.5" width="1.2" height="6.8" fill="#ff0000"/><rect x="1691.0" y="202.5" width="2.1" height="2.8" fill="#ff0000"/><rect x="1693.0" y="200.5" width="1.2" height="5.4" fill="#1478e6"/><rect x="1692.6" y="202.5" width="2.1" height="3.4" fill="#1478e6"/><rect x="1694.6" y="203.2" width="1.2" height="4.4" fill="#1478e6"/><rect x="1694.2" y="204.2" width="2.1" height="3.4" fill="#1478e6"/><rect x="1696.2" y="200.1" width="1.2" height="7.6" fill="#ff0000"/><rect x="1695.8" y="203.1" width="2.1" height="4.6" fill="#ff0000"/><rect x="1697.8" y="194.7" width="1.2" height="10.9" fill="#ff0000"/><rect x="1697.4" y="197.7" width="2.1" height="6.9" fill="#ff0000"/><rect x="1698.5" y="196.9" width="2.8" height="1.9" fill="#f0ec90"/><rect x="1700.5" y="193.6" width="2.1" height="5.7" fill="#ff0000"/><rect x="1702.1" y="193.6" width="2.1" height="4.0" fill="#1478e6"/><rect x="1704.1" y="191.0" width="1.2" height="9.6" fill="#ff0000"/><rect x="1703.7" y="193.0" width="2.1" height="4.6" fill="#ff0000"/><rect x="1705.7" y="191.2" width="1.2" height="5.4" fill="#ff0000"/><rect x="1705.3" y="191.2" width="2.1" height="3.4" fill="#ff0000"/><rect x="1707.2" y="188.6" width="1.2" height="5.2" fill="#ff0000"/><rect x="1706.8" y="190.6" width="2.1" height="2.2" fill="#ff0000"/><rect x="1708.0" y="186.9" width="2.8" height="1.9" fill="#f0ec90"/><rect x="1710.4" y="181.9" width="1.2" height="10.3" fill="#ff0000"/><rect x="1710.0" y="182.9" width="2.1" height="6.3" fill="#ff0000"/><rect x="1712.0" y="181.3" width="1.2" height="5.2" fill="#ff0000"/><rect x="1711.6" y="182.3" width="2.1" height="2.2" fill="#ff0000"/><rect x="1713.6" y="180.0" width="1.2" height="6.0" fill="#ff0000"/><rect x="1713.2" y="180.0" width="2.1" height="4.0" fill="#ff0000"/><rect x="1715.1" y="176.6" width="1.2" height="8.0" fill="#ff0000"/><rect x="1714.7" y="177.6" width="2.1" height="4.0" fill="#ff0000"/><rect x="1716.7" y="176.6" width="1.2" height="6.4" fill="#1478e6"/><rect x="1716.3" y="177.6" width="2.1" height="3.4" fill="#1478e6"/><rect x="1718.3" y="172.9" width="1.2" height="9.1" fill="#ff0000"/><rect x="1717.9" y="172.9" width="2.1" height="8.1" fill="#ff0000"/><rect x="1719.9" y="159.0" width="1.2" height="17.4" fill="#ff0000"/><rect x="1719.5" y="161.0" width="2.1" height="13.4" fill="#ff0000"/><rect x="1721.5" y="153.3" width="1.2" height="11.3" fill="#ff0000"/><rect x="1721.1" y="153.3" width="2.1" height="9.3" fill="#ff0000"/><rect x="1723.0" y="147.4" width="1.2" height="9.5" fill="#ff0000"/><rect x="1722.6" y="147.4" width="2.1" height="7.5" fill="#ff0000"/><rect x="1724.6" y="145.6" width="1.2" height="4.4" fill="#ff0000"/><rect x="1724.2" y="145.6" width="2.1" height="3.4" fill="#ff0000"/><rect x="1726.2" y="142.6" width="1.2" height="12.5" fill="#1478e6"/><rect x="1725.8" y="145.6" width="2.1" height="7.5" fill="#1478e6"/><rect x="1727.8" y="146.2" width="1.2" height="7.0" fill="#ff0000"/><rect x="1727.4" y="149.2" width="2.1" height="4.0" fill="#ff0000"/><rect x="1729.4" y="149.2" width="1.2" height="5.4" fill="#1478e6"/><rect x="1729.0" y="149.2" width="2.1" height="3.4" fill="#1478e6"/><rect x="1730.9" y="149.8" width="1.2" height="4.8" fill="#ff0000"/><rect x="1730.5" y="149.8" width="2.1" height="2.8" fill="#ff0000"/><rect x="1732.5" y="148.2" width="1.2" height="4.2" fill="#ff0000"/><rect x="1732.1" y="149.2" width="2.1" height="2.2" fill="#ff0000"/><rect x="1734.1" y="140.9" width="1.2" height="11.9" fill="#ff0000"/><rect x="1733.7" y="143.9" width="2.1" height="6.9" fill="#ff0000"/><rect x="1735.7" y="135.8" width="1.2" height="11.7" fill="#ff0000"/><rect x="1735.3" y="136.8" width="2.1" height="8.7" fill="#ff0000"/><rect x="1737.3" y="135.8" width="1.2" height="8.3" fill="#1478e6"/><rect x="1736.9" y="136.8" width="2.1" height="6.3" fill="#1478e6"/><rect x="1738.8" y="139.5" width="1.2" height="7.2" fill="#1478e6"/><rect x="1738.4" y="141.5" width="2.1" height="2.2" fill="#1478e6"/><rect x="1740.4" y="136.5" width="1.2" height="8.2" fill="#ff0000"/><rect x="1740.0" y="138.5" width="2.1" height="5.2" fill="#ff0000"/><rect x="1741.6" y="131.4" width="2.1" height="8.7" fill="#ff0000"/><rect x="1742.8" y="129.4" width="2.8" height="1.9" fill="#f0ec90"/><rect x="1745.2" y="125.7" width="1.2" height="9.2" fill="#ff0000"/><rect x="1744.8" y="126.7" width="2.1" height="5.2" fill="#ff0000"/><rect x="1746.7" y="126.7" width="1.2" height="6.2" fill="#1478e6"/><rect x="1746.3" y="126.7" width="2.1" height="5.2" fill="#1478e6"/><rect x="1748.3" y="127.9" width="1.2" height="5.0" fill="#ff0000"/><rect x="1747.9" y="127.9" width="2.1" height="4.0" fill="#ff0000"/><rect x="1749.9" y="127.9" width="1.2" height="6.6" fill="#1478e6"/><rect x="1749.5" y="127.9" width="2.1" height="4.6" fill="#1478e6"/><rect x="1751.5" y="127.8" width="1.2" height="8.0" fill="#1478e6"/><rect x="1751.1" y="130.8" width="2.1" height="4.0" fill="#1478e6"/><rect x="1753.1" y="129.1" width="1.2" height="7.7" fill="#ff0000"/><rect x="1752.7" y="129.1" width="2.1" height="5.7" fill="#ff0000"/><rect x="1754.6" y="123.5" width="1.2" height="7.2" fill="#ff0000"/><rect x="1754.2" y="125.5" width="2.1" height="5.2" fill="#ff0000"/><rect x="1756.2" y="123.3" width="1.2" height="4.8" fill="#ff0000"/><rect x="1755.8" y="124.3" width="2.1" height="2.8" fill="#ff0000"/><rect x="1757.8" y="117.8" width="1.2" height="10.2" fill="#ff0000"/><rect x="1757.4" y="120.8" width="2.1" height="5.2" fill="#ff0000"/><rect x="1759.0" y="120.8" width="2.1" height="6.9" fill="#1478e6"/><rect x="1760.6" y="124.9" width="2.1" height="2.8" fill="#ff0000"/><rect x="1762.5" y="124.9" width="1.2" height="7.0" fill="#1478e6"/><rect x="1762.1" y="124.9" width="2.1" height="4.0" fill="#1478e6"/><rect x="1764.1" y="125.3" width="1.2" height="8.7" fill="#1478e6"/><rect x="1763.7" y="127.3" width="2.1" height="5.7" fill="#1478e6"/><rect x="1765.7" y="129.4" width="1.2" height="4.8" fill="#1478e6"/><rect x="1765.3" y="131.4" width="2.1" height="2.8" fill="#1478e6"/><rect x="1767.3" y="130.0" width="1.2" height="6.2" fill="#ff0000"/><rect x="1766.9" y="132.0" width="2.1" height="2.2" fill="#ff0000"/><rect x="1768.9" y="130.0" width="1.2" height="6.8" fill="#1478e6"/><rect x="1768.5" y="132.0" width="2.1" height="2.8" fill="#1478e6"/><rect x="1770.4" y="133.2" width="1.2" height="5.8" fill="#1478e6"/><rect x="1770.0" y="133.2" width="2.1" height="2.8" fill="#1478e6"/><rect x="1772.0" y="130.4" width="1.2" height="5.6" fill="#ff0000"/><rect x="1771.6" y="131.4" width="2.1" height="4.6" fill="#ff0000"/><rect x="1773.6" y="128.4" width="1.2" height="9.6" fill="#1478e6"/><rect x="1773.2" y="131.4" width="2.1" height="4.6" fill="#1478e6"/><rect x="1774.4" y="133.6" width="2.8" height="1.9" fill="#f0ec90"/><rect x="1776.8" y="133.2" width="1.2" height="3.8" fill="#ff0000"/><rect x="1776.4" y="133.2" width="2.1" height="2.8" fill="#ff0000"/><rect x="1777.5" y="132.4" width="2.8" height="1.9" fill="#f0ec90"/><rect x="1779.1" y="132.4" width="2.8" height="1.9" fill="#f0ec90"/><rect x="1781.5" y="128.5" width="1.2" height="7.3" fill="#ff0000"/><rect x="1781.1" y="128.5" width="2.1" height="6.3" fill="#ff0000"/><rect x="1782.3" y="127.7" width="2.8" height="1.9" fill="#f0ec90"/><rect x="1784.7" y="125.5" width="1.2" height="6.2" fill="#1478e6"/><rect x="1784.3" y="128.5" width="2.1" height="2.2" fill="#1478e6"/><rect x="1786.2" y="128.1" width="1.2" height="6.0" fill="#1478e6"/><rect x="1785.8" y="129.1" width="2.1" height="4.0" fill="#1478e6"/><rect x="1787.8" y="131.4" width="1.2" height="9.3" fill="#1478e6"/><rect x="1787.4" y="131.4" width="2.1" height="6.3" fill="#1478e6"/><rect x="1788.6" y="135.4" width="2.8" height="1.9" fill="#f0ec90"/><rect x="1791.0" y="136.2" width="1.2" height="3.2" fill="#1478e6"/><rect x="1790.6" y="136.2" width="2.1" height="2.2" fill="#1478e6"/><rect x="1792.2" y="136.2" width="2.1" height="2.2" fill="#ff0000"/><rect x="1794.1" y="135.2" width="1.2" height="5.2" fill="#1478e6"/><rect x="1793.7" y="136.2" width="2.1" height="2.2" fill="#1478e6"/><rect x="1795.7" y="134.6" width="1.2" height="4.8" fill="#ff0000"/><rect x="1795.3" y="135.6" width="2.1" height="2.8" fill="#ff0000"/><rect x="1797.3" y="132.6" width="1.2" height="9.0" fill="#1478e6"/><rect x="1796.9" y="135.6" width="2.1" height="4.0" fill="#1478e6"/><rect x="1798.9" y="134.6" width="1.2" height="5.0" fill="#ff0000"/><rect x="1798.5" y="135.6" width="2.1" height="4.0" fill="#ff0000"/><rect x="1800.5" y="135.6" width="1.2" height="7.6" fill="#1478e6"/><rect x="1800.1" y="135.6" width="2.1" height="4.6" fill="#1478e6"/><rect x="1802.0" y="135.5" width="1.2" height="8.7" fill="#1478e6"/><rect x="1801.6" y="138.5" width="2.1" height="5.7" fill="#1478e6"/><rect x="1803.6" y="141.1" width="1.2" height="3.2" fill="#ff0000"/><rect x="1803.2" y="142.1" width="2.1" height="2.2" fill="#ff0000"/><rect x="1805.2" y="142.1" width="1.2" height="5.2" fill="#1478e6"/><rect x="1804.8" y="142.1" width="2.1" height="2.2" fill="#1478e6"/><rect x="1806.0" y="144.8" width="2.8" height="1.9" fill="#f0ec90"/><rect x="1808.4" y="143.6" width="1.2" height="5.2" fill="#1478e6"/><rect x="1808.0" y="145.6" width="2.1" height="2.2" fill="#1478e6"/><rect x="1809.9" y="142.6" width="1.2" height="6.2" fill="#ff0000"/><rect x="1809.5" y="145.6" width="2.1" height="2.2" fill="#ff0000"/><rect x="1811.5" y="141.4" width="1.2" height="8.8" fill="#ff0000"/><rect x="1811.1" y="144.4" width="2.1" height="2.8" fill="#ff0000"/><rect x="1813.1" y="141.5" width="1.2" height="5.6" fill="#ff0000"/><rect x="1812.7" y="141.5" width="2.1" height="4.6" fill="#ff0000"/><rect x="1814.7" y="133.8" width="1.2" height="9.3" fill="#ff0000"/><rect x="1814.3" y="136.8" width="2.1" height="6.3" fill="#ff0000"/><rect x="1816.3" y="132.2" width="1.2" height="6.2" fill="#ff0000"/><rect x="1815.9" y="133.2" width="2.1" height="5.2" fill="#ff0000"/><rect x="1817.0" y="133.0" width="2.8" height="1.9" fill="#f0ec90"/><rect x="1819.4" y="132.0" width="1.2" height="5.4" fill="#ff0000"/><rect x="1819.0" y="132.0" width="2.1" height="3.4" fill="#ff0000"/><rect x="1821.0" y="127.8" width="1.2" height="5.8" fill="#ff0000"/><rect x="1820.6" y="130.8" width="2.1" height="2.8" fill="#ff0000"/><rect x="1822.6" y="130.8" width="1.2" height="6.2" fill="#1478e6"/><rect x="1822.2" y="130.8" width="2.1" height="5.2" fill="#1478e6"/><rect x="1824.2" y="132.8" width="1.2" height="4.2" fill="#ff0000"/><rect x="1823.8" y="133.8" width="2.1" height="2.2" fill="#ff0000"/><rect x="1825.7" y="131.4" width="1.2" height="5.0" fill="#ff0000"/><rect x="1825.3" y="131.4" width="2.1" height="4.0" fill="#ff0000"/><rect x="1827.3" y="127.8" width="1.2" height="8.2" fill="#ff0000"/><rect x="1826.9" y="130.8" width="2.1" height="2.2" fill="#ff0000"/><rect x="1828.9" y="126.6" width="1.2" height="6.8" fill="#ff0000"/><rect x="1828.5" y="129.6" width="2.1" height="2.8" fill="#ff0000"/><rect x="1830.5" y="127.3" width="1.2" height="5.0" fill="#ff0000"/><rect x="1830.1" y="127.3" width="2.1" height="4.0" fill="#ff0000"/><rect x="1832.1" y="123.7" width="1.2" height="8.2" fill="#ff0000"/><rect x="1831.7" y="126.7" width="2.1" height="2.2" fill="#ff0000"/><rect x="1833.6" y="123.7" width="1.2" height="5.6" fill="#ff0000"/><rect x="1833.2" y="123.7" width="2.1" height="4.6" fill="#ff0000"/><rect x="1835.2" y="123.7" width="1.2" height="4.8" fill="#1478e6"/><rect x="1834.8" y="123.7" width="2.1" height="2.8" fill="#1478e6"/><rect x="1836.0" y="124.1" width="2.8" height="1.9" fill="#f0ec90"/><rect x="1838.4" y="121.3" width="1.2" height="7.2" fill="#ff0000"/><rect x="1838.0" y="124.3" width="2.1" height="2.2" fill="#ff0000"/><rect x="1839.2" y="123.5" width="2.8" height="1.9" fill="#f0ec90"/><rect x="1840.7" y="125.9" width="2.8" height="1.9" fill="#f0ec90"/><rect x="1842.7" y="126.7" width="2.1" height="4.0" fill="#1478e6"/><rect x="1844.3" y="128.5" width="2.1" height="2.2" fill="#ff0000"/><rect x="1846.3" y="126.1" width="1.2" height="7.0" fill="#ff0000"/><rect x="1845.9" y="126.1" width="2.1" height="4.0" fill="#ff0000"/><rect x="1847.1" y="125.3" width="2.8" height="1.9" fill="#f0ec90"/><rect x="1849.4" y="122.5" width="1.2" height="8.2" fill="#ff0000"/><rect x="1849.0" y="122.5" width="2.1" height="5.2" fill="#ff0000"/><rect x="1851.0" y="122.5" width="1.2" height="5.2" fill="#1478e6"/><rect x="1850.6" y="122.5" width="2.1" height="2.2" fill="#1478e6"/><rect x="1852.6" y="121.5" width="1.2" height="3.2" fill="#ff0000"/><rect x="1852.2" y="122.5" width="2.1" height="2.2" fill="#ff0000"/><rect x="1853.8" y="121.4" width="2.1" height="2.8" fill="#ff0000"/><rect x="1855.8" y="119.8" width="1.2" height="5.2" fill="#ff0000"/><rect x="1855.4" y="120.8" width="2.1" height="2.2" fill="#ff0000"/><rect x="1857.3" y="120.8" width="1.2" height="5.0" fill="#1478e6"/><rect x="1856.9" y="120.8" width="2.1" height="4.0" fill="#1478e6"/><rect x="1858.1" y="119.4" width="2.8" height="1.9" fill="#f0ec90"/><rect x="1860.5" y="120.2" width="1.2" height="3.8" fill="#1478e6"/><rect x="1860.1" y="120.2" width="2.1" height="2.8" fill="#1478e6"/><rect x="1862.1" y="119.4" width="1.2" height="4.2" fill="#1478e6"/><rect x="1861.7" y="121.4" width="2.1" height="2.2" fill="#1478e6"/><rect x="1863.7" y="119.4" width="1.2" height="4.2" fill="#ff0000"/><rect x="1863.3" y="121.4" width="2.1" height="2.2" fill="#ff0000"/><rect x="1864.8" y="117.2" width="2.1" height="5.7" fill="#ff0000"/><rect x="1866.8" y="113.4" width="1.2" height="7.4" fill="#ff0000"/><rect x="1866.4" y="115.4" width="2.1" height="3.4" fill="#ff0000"/><rect x="1868.4" y="105.2" width="1.2" height="11.9" fill="#ff0000"/><rect x="1868.0" y="107.2" width="2.1" height="9.9" fill="#ff0000"/><rect x="1870.0" y="102.4" width="1.2" height="8.4" fill="#ff0000"/><rect x="1869.6" y="105.4" width="2.1" height="3.4" fill="#ff0000"/><rect x="1870.8" y="102.2" width="2.8" height="1.9" fill="#f0ec90"/><rect x="1872.3" y="101.6" width="2.8" height="1.9" fill="#f0ec90"/><rect x="1874.7" y="95.9" width="1.2" height="11.1" fill="#ff0000"/><rect x="1874.3" y="95.9" width="2.1" height="8.1" fill="#ff0000"/><rect x="1876.3" y="92.3" width="1.2" height="8.2" fill="#ff0000"/><rect x="1875.9" y="95.3" width="2.1" height="2.2" fill="#ff0000"/><rect x="1877.9" y="92.1" width="1.2" height="4.8" fill="#ff0000"/><rect x="1877.5" y="94.1" width="2.1" height="2.8" fill="#ff0000"/><rect x="1879.1" y="94.1" width="2.1" height="2.2" fill="#1478e6"/><rect x="1880.6" y="92.9" width="2.1" height="3.4" fill="#ff0000"/><rect x="1882.6" y="87.4" width="1.2" height="7.2" fill="#ff0000"/><rect x="1882.2" y="89.4" width="2.1" height="5.2" fill="#ff0000"/><rect x="1884.2" y="89.4" width="1.2" height="6.6" fill="#1478e6"/><rect x="1883.8" y="89.4" width="2.1" height="4.6" fill="#1478e6"/><rect x="1885.8" y="92.4" width="1.2" height="6.6" fill="#1478e6"/><rect x="1885.4" y="92.4" width="2.1" height="4.6" fill="#1478e6"/><rect x="1887.4" y="93.3" width="1.2" height="9.6" fill="#1478e6"/><rect x="1887.0" y="95.3" width="2.1" height="4.6" fill="#1478e6"/><rect x="1888.5" y="98.3" width="2.1" height="4.6" fill="#1478e6"/><rect x="1890.1" y="101.2" width="2.1" height="3.4" fill="#1478e6"/><rect x="1891.7" y="98.9" width="2.1" height="5.7" fill="#ff0000"/><rect x="1892.9" y="99.8" width="2.8" height="1.9" fill="#f0ec90"/><rect x="1894.5" y="102.2" width="2.8" height="1.9" fill="#f0ec90"/><rect x="1896.0" y="100.4" width="2.8" height="1.9" fill="#f0ec90"/><rect x="1897.6" y="100.4" width="2.8" height="1.9" fill="#f0ec90"/><rect x="1900.0" y="101.2" width="1.2" height="10.5" fill="#1478e6"/><rect x="1899.6" y="101.2" width="2.1" height="7.5" fill="#1478e6"/><rect x="1901.6" y="105.4" width="1.2" height="5.4" fill="#ff0000"/><rect x="1901.2" y="105.4" width="2.1" height="3.4" fill="#ff0000"/><rect x="1902.4" y="104.6" width="2.8" height="1.9" fill="#f0ec90"/><rect x="1743" y="111" width="2" height="17" fill="#1478e6"/><rect x="1742" y="126" width="4" height="4" fill="#1478e6"/></g>
<g clip-path="url(#c1)"><rect x="12.8" y="643.7" width="2.5" height="1.9" fill="#f0ec90"/><rect x="14.5" y="647.7" width="2" height="2" fill="#1478e6"/><rect x="25.5" y="659.6" width="3" height="1.9" fill="#f0ec90"/><rect x="32.6" y="658.5" width="2" height="4" fill="#ff0000"/><rect x="18.8" y="670.6" width="4.5" height="1.9" fill="#f0ec90"/><rect x="36.0" y="668.6" width="2" height="2" fill="#1478e6"/><rect x="38.8" y="670.6" width="2.5" height="1.9" fill="#f0ec90"/><rect x="65.0" y="681.4" width="2" height="2" fill="#ff0000"/><rect x="83.0" y="706.5" width="2" height="7" fill="#ff0000"/><rect x="101.6" y="700.5" width="2" height="7" fill="#ff0000"/><rect x="114.2" y="709.7" width="2.5" height="1.9" fill="#f0ec90"/><rect x="118.0" y="695.5" width="2" height="7" fill="#ff0000"/><rect x="117.8" y="686.1" width="4.5" height="1.9" fill="#f0ec90"/><rect x="122.0" y="608.1" width="2" height="7" fill="#ff0000"/><rect x="129.0" y="610.0" width="2" height="2" fill="#ff0000"/><rect x="131.8" y="596.8" width="4.5" height="1.9" fill="#f0ec90"/><rect x="144.5" y="590.8" width="3" height="1.9" fill="#f0ec90"/><rect x="150.0" y="616.6" width="2" height="2" fill="#ff0000"/><rect x="165.0" y="638.4" width="2" height="2" fill="#ff0000"/><rect x="171.0" y="633.5" width="2" height="4" fill="#ff0000"/><rect x="185.0" y="618.6" width="2" height="2" fill="#ff0000"/><rect x="195.0" y="628.5" width="2" height="2" fill="#ff0000"/><rect x="214.0" y="622.6" width="4" height="1.9" fill="#f0ec90"/><rect x="224.0" y="638.5" width="4" height="1.9" fill="#f0ec90"/><rect x="232.0" y="602.8" width="4" height="1.9" fill="#f0ec90"/><rect x="240.0" y="608.6" width="2" height="2" fill="#1478e6"/><rect x="254.8" y="616.7" width="2.5" height="1.9" fill="#f0ec90"/><rect x="260.5" y="604.7" width="3" height="1.9" fill="#f0ec90"/><rect x="269.0" y="607.1" width="2" height="5" fill="#ff0000"/><rect x="283.0" y="592.2" width="2" height="7" fill="#1478e6"/><rect x="293.0" y="596.2" width="2" height="3" fill="#ff0000"/><rect x="305.0" y="616.6" width="2" height="2" fill="#1478e6"/><rect x="319.0" y="616.6" width="2" height="2" fill="#1478e6"/><rect x="326.0" y="634.5" width="2" height="2" fill="#ff0000"/><rect x="333.0" y="645.9" width="2" height="3" fill="#ff0000"/><rect x="339.0" y="636.9" width="2" height="5" fill="#1478e6"/><rect x="351.0" y="632.5" width="2" height="2" fill="#1478e6"/><rect x="358.0" y="624.6" width="4" height="1.9" fill="#f0ec90"/><rect x="378.5" y="608.7" width="3" height="1.9" fill="#f0ec90"/><rect x="390.0" y="582.9" width="4" height="1.9" fill="#f0ec90"/><rect x="397.0" y="598.7" width="2" height="2" fill="#1478e6"/><rect x="402.8" y="598.3" width="2.5" height="1.9" fill="#f0ec90"/><rect x="412.5" y="614.2" width="3" height="1.9" fill="#f0ec90"/><rect x="423.0" y="616.6" width="2" height="5" fill="#1478e6"/><rect x="429.0" y="601.2" width="2" height="4" fill="#1478e6"/><rect x="438.5" y="596.3" width="3" height="1.9" fill="#f0ec90"/><rect x="443.8" y="586.4" width="2.5" height="1.9" fill="#f0ec90"/><rect x="454.0" y="594.4" width="4" height="1.9" fill="#f0ec90"/><rect x="461.0" y="597.2" width="2" height="4" fill="#1478e6"/><rect x="464.5" y="588.4" width="3" height="1.9" fill="#f0ec90"/><rect x="469.0" y="578.3" width="2" height="2" fill="#1478e6"/><rect x="479.0" y="584.3" width="2" height="2" fill="#ff0000"/><rect x="482.0" y="578.4" width="4" height="1.9" fill="#f0ec90"/><rect x="496.0" y="586.4" width="4" height="1.9" fill="#f0ec90"/><rect x="500.8" y="594.4" width="2.5" height="1.9" fill="#f0ec90"/><rect x="507.0" y="595.7" width="2" height="3" fill="#1478e6"/><rect x="522.8" y="578.4" width="2.5" height="1.9" fill="#f0ec90"/><rect x="527.0" y="579.8" width="2" height="7" fill="#ff0000"/><rect x="533.8" y="584.4" width="4.5" height="1.9" fill="#f0ec90"/><rect x="543.0" y="597.7" width="2" height="7" fill="#1478e6"/><rect x="551.0" y="604.2" width="2" height="2" fill="#ff0000"/><rect x="571.0" y="605.7" width="2" height="3" fill="#ff0000"/><rect x="580.8" y="606.3" width="2.5" height="1.9" fill="#f0ec90"/><rect x="587.0" y="610.6" width="2" height="5" fill="#ff0000"/><rect x="597.0" y="612.6" width="2" height="3" fill="#ff0000"/><rect x="601.0" y="603.7" width="2" height="7" fill="#ff0000"/><rect x="615.0" y="608.2" width="2" height="4" fill="#ff0000"/><rect x="627.0" y="585.8" width="2" height="3" fill="#1478e6"/><rect x="632.8" y="596.3" width="2.5" height="1.9" fill="#f0ec90"/><rect x="640.5" y="594.4" width="3" height="1.9" fill="#f0ec90"/><rect x="647.0" y="575.8" width="2" height="7" fill="#ff0000"/><rect x="653.0" y="577.8" width="2" height="7" fill="#1478e6"/><rect x="666.8" y="576.5" width="2.5" height="1.9" fill="#f0ec90"/><rect x="673.0" y="582.8" width="2" height="5" fill="#ff0000"/><rect x="684.8" y="588.4" width="2.5" height="1.9" fill="#f0ec90"/><rect x="693.0" y="585.8" width="2" height="7" fill="#ff0000"/><rect x="694.0" y="566.5" width="4" height="1.9" fill="#f0ec90"/><rect x="698.8" y="544.6" width="2.5" height="1.9" fill="#f0ec90"/><rect x="705.0" y="548.0" width="2" height="7" fill="#ff0000"/><rect x="716.0" y="559.4" width="2" height="4" fill="#ff0000"/><rect x="737.0" y="551.0" width="2" height="5" fill="#1478e6"/><rect x="742.8" y="566.5" width="2.5" height="1.9" fill="#f0ec90"/><rect x="749.8" y="558.5" width="4.5" height="1.9" fill="#f0ec90"/><rect x="756.5" y="568.5" width="3" height="1.9" fill="#f0ec90"/><rect x="760.8" y="584.4" width="2.5" height="1.9" fill="#f0ec90"/><rect x="770.0" y="578.8" width="2" height="5" fill="#1478e6"/><rect x="778.5" y="582.4" width="3" height="1.9" fill="#f0ec90"/><rect x="784.5" y="564.5" width="3" height="1.9" fill="#f0ec90"/><rect x="788.5" y="553.6" width="3" height="1.9" fill="#f0ec90"/><rect x="799.0" y="547.4" width="2" height="4" fill="#1478e6"/><rect x="805.8" y="579.1" width="2.5" height="1.9" fill="#f0ec90"/><rect x="819.0" y="550.5" width="2" height="2" fill="#1478e6"/><rect x="826.0" y="509.3" width="2" height="3" fill="#1478e6"/><rect x="829.0" y="482.9" width="2" height="7" fill="#1478e6"/><rect x="832.0" y="473.3" width="4" height="1.9" fill="#f0ec90"/><rect x="836.5" y="489.6" width="3" height="1.9" fill="#f0ec90"/><rect x="840.8" y="503.8" width="2.5" height="1.9" fill="#f0ec90"/><rect x="844.8" y="528.2" width="2.5" height="1.9" fill="#f0ec90"/><rect x="857.0" y="533.7" width="2" height="3" fill="#ff0000"/><rect x="862.0" y="524.1" width="4" height="1.9" fill="#f0ec90"/><rect x="868.5" y="522.1" width="3" height="1.9" fill="#f0ec90"/><rect x="877.0" y="541.3" width="2" height="4" fill="#1478e6"/><rect x="882.5" y="556.7" width="3" height="1.9" fill="#f0ec90"/><rect x="884.0" y="585.1" width="4" height="1.9" fill="#f0ec90"/><rect x="888.5" y="601.4" width="3" height="1.9" fill="#f0ec90"/><rect x="896.0" y="587.0" width="2" height="2" fill="#ff0000"/><rect x="905.0" y="572.3" width="2" height="3" fill="#1478e6"/><rect x="907.8" y="560.7" width="4.5" height="1.9" fill="#f0ec90"/><rect x="919.0" y="599.2" width="2" height="2" fill="#1478e6"/><rect x="928.5" y="605.4" width="3" height="1.9" fill="#f0ec90"/><rect x="937.0" y="607.9" width="2" height="5" fill="#1478e6"/><rect x="947.0" y="584.5" width="2" height="3" fill="#1478e6"/><rect x="952.0" y="597.7" width="2" height="5" fill="#ff0000"/><rect x="958.8" y="607.5" width="2.5" height="1.9" fill="#f0ec90"/><rect x="966.8" y="617.6" width="4.5" height="1.9" fill="#f0ec90"/><rect x="971.0" y="637.4" width="2" height="3" fill="#1478e6"/><rect x="975.8" y="646.1" width="4.5" height="1.9" fill="#f0ec90"/><rect x="983.8" y="642.0" width="2.5" height="1.9" fill="#f0ec90"/><rect x="993.8" y="635.9" width="4.5" height="1.9" fill="#f0ec90"/><rect x="1000.8" y="621.7" width="2.5" height="1.9" fill="#f0ec90"/><rect x="1008.5" y="627.8" width="3" height="1.9" fill="#f0ec90"/><rect x="1019.0" y="632.3" width="2" height="5" fill="#1478e6"/><rect x="1028.8" y="627.8" width="2.5" height="1.9" fill="#f0ec90"/><rect x="1034.0" y="642.0" width="4" height="1.9" fill="#f0ec90"/><rect x="1041.8" y="652.2" width="4.5" height="1.9" fill="#f0ec90"/><rect x="1054.0" y="633.9" width="4" height="1.9" fill="#f0ec90"/><rect x="1065.0" y="627.7" width="2" height="2" fill="#ff0000"/><rect x="1073.0" y="630.3" width="2" height="5" fill="#ff0000"/><rect x="1087.0" y="629.3" width="2" height="7" fill="#ff0000"/><rect x="1093.0" y="622.1" width="2" height="5" fill="#ff0000"/><rect x="1103.8" y="627.8" width="4.5" height="1.9" fill="#f0ec90"/><rect x="1111.0" y="615.0" width="2" height="3" fill="#ff0000"/><rect x="1121.0" y="598.8" width="2" height="7" fill="#ff0000"/><rect x="1127.0" y="598.7" width="2" height="3" fill="#1478e6"/><rect x="1137.8" y="605.4" width="4.5" height="1.9" fill="#f0ec90"/><rect x="1149.8" y="605.4" width="4.5" height="1.9" fill="#f0ec90"/><rect x="1159.0" y="584.5" width="2" height="3" fill="#1478e6"/><rect x="1161.8" y="568.9" width="4.5" height="1.9" fill="#f0ec90"/><rect x="1173.0" y="548.2" width="2" height="2" fill="#ff0000"/><rect x="1178.0" y="538.4" width="4" height="1.9" fill="#f0ec90"/><rect x="1189.8" y="532.4" width="4.5" height="1.9" fill="#f0ec90"/><rect x="1194.5" y="520.5" width="3" height="1.9" fill="#f0ec90"/><rect x="1203.0" y="505.9" width="2" height="7" fill="#ff0000"/><rect x="1207.0" y="512.9" width="2" height="5" fill="#1478e6"/><rect x="1217.0" y="523.4" width="2" height="2" fill="#ff0000"/><rect x="1227.0" y="519.9" width="2" height="3" fill="#ff0000"/><rect x="1229.0" y="504.0" width="2" height="7" fill="#1478e6"/><rect x="1238.0" y="526.4" width="4" height="1.9" fill="#f0ec90"/><rect x="1240.0" y="536.4" width="4" height="1.9" fill="#f0ec90"/><rect x="1247.0" y="547.2" width="2" height="4" fill="#ff0000"/><rect x="1251.0" y="555.6" width="2" height="3" fill="#ff0000"/><rect x="1257.0" y="548.2" width="2" height="2" fill="#ff0000"/><rect x="1265.0" y="536.3" width="2" height="2" fill="#ff0000"/><rect x="1268.8" y="528.4" width="2.5" height="1.9" fill="#f0ec90"/><rect x="1272.5" y="512.5" width="3" height="1.9" fill="#f0ec90"/><rect x="1277.0" y="497.5" width="2" height="4" fill="#1478e6"/><rect x="1281.0" y="482.1" width="2" height="7" fill="#ff0000"/><rect x="1284.8" y="472.8" width="2.5" height="1.9" fill="#f0ec90"/><rect x="1288.5" y="492.6" width="3" height="1.9" fill="#f0ec90"/><rect x="1297.8" y="488.6" width="4.5" height="1.9" fill="#f0ec90"/><rect x="1301.8" y="498.6" width="4.5" height="1.9" fill="#f0ec90"/><rect x="1307.8" y="504.5" width="4.5" height="1.9" fill="#f0ec90"/><rect x="1315.0" y="509.9" width="2" height="3" fill="#ff0000"/><rect x="1321.0" y="515.9" width="2" height="3" fill="#ff0000"/><rect x="1323.8" y="554.1" width="4.5" height="1.9" fill="#f0ec90"/><rect x="1331.8" y="548.3" width="4.5" height="1.9" fill="#f0ec90"/><rect x="1338.0" y="564.2" width="4" height="1.9" fill="#f0ec90"/><rect x="1346.5" y="540.3" width="3" height="1.9" fill="#f0ec90"/><rect x="1355.8" y="568.1" width="2.5" height="1.9" fill="#f0ec90"/><rect x="1365.0" y="557.6" width="2" height="3" fill="#ff0000"/><rect x="1368.8" y="548.3" width="2.5" height="1.9" fill="#f0ec90"/><rect x="1370.0" y="526.4" width="4" height="1.9" fill="#f0ec90"/><rect x="1383.0" y="526.8" width="2" height="5" fill="#ff0000"/><rect x="1391.0" y="520.8" width="2" height="5" fill="#ff0000"/><rect x="1394.5" y="536.4" width="3" height="1.9" fill="#f0ec90"/><rect x="1399.0" y="507.4" width="2" height="4" fill="#ff0000"/><rect x="1411.0" y="501.9" width="2" height="3" fill="#1478e6"/><rect x="1417.0" y="490.0" width="2" height="7" fill="#1478e6"/><rect x="1422.0" y="480.7" width="4" height="1.9" fill="#f0ec90"/><rect x="1424.0" y="470.6" width="2" height="2" fill="#1478e6"/><rect x="1424.8" y="450.8" width="4.5" height="1.9" fill="#f0ec90"/><rect x="1428.8" y="433.0" width="4.5" height="1.9" fill="#f0ec90"/><rect x="1439.0" y="435.8" width="2" height="4" fill="#1478e6"/><rect x="1449.0" y="434.3" width="2" height="3" fill="#1478e6"/><rect x="1455.0" y="428.0" width="2" height="4" fill="#1478e6"/><rect x="1461.0" y="431.4" width="2" height="5" fill="#1478e6"/><rect x="1465.8" y="438.9" width="4.5" height="1.9" fill="#f0ec90"/><rect x="1469.0" y="452.7" width="2" height="2" fill="#1478e6"/><rect x="1475.0" y="459.7" width="2" height="4" fill="#1478e6"/><rect x="1484.5" y="470.7" width="3" height="1.9" fill="#f0ec90"/><rect x="1489.0" y="473.1" width="2" height="5" fill="#1478e6"/><rect x="1489.8" y="484.7" width="4.5" height="1.9" fill="#f0ec90"/><rect x="1497.0" y="492.0" width="2" height="7" fill="#1478e6"/><rect x="1499.0" y="499.0" width="2" height="5" fill="#ff0000"/><rect x="1510.0" y="500.6" width="4" height="1.9" fill="#f0ec90"/><rect x="1513.0" y="482.1" width="2" height="7" fill="#1478e6"/><rect x="1526.8" y="484.7" width="2.5" height="1.9" fill="#f0ec90"/><rect x="1539.0" y="485.5" width="2" height="4" fill="#ff0000"/><rect x="1549.0" y="505.9" width="2" height="3" fill="#ff0000"/><rect x="1565.5" y="507.2" width="2" height="4" fill="#1478e6"/><rect x="1578.0" y="485.8" width="2" height="5" fill="#ff0000"/><rect x="1585.0" y="508.0" width="4" height="1.9" fill="#f0ec90"/><rect x="1600.0" y="517.2" width="2" height="2" fill="#ff0000"/><rect x="1604.0" y="527.3" width="2" height="2" fill="#ff0000"/><rect x="1606.0" y="513.7" width="2" height="5" fill="#ff0000"/><rect x="1609.0" y="518.7" width="4" height="1.9" fill="#f0ec90"/><rect x="1613.0" y="516.0" width="2" height="2" fill="#1478e6"/><rect x="1614.0" y="517.1" width="4" height="1.9" fill="#f0ec90"/><rect x="1619.0" y="502.5" width="2" height="3" fill="#ff0000"/><rect x="1620.0" y="515.6" width="4" height="1.9" fill="#f0ec90"/><rect x="1626.0" y="515.0" width="2" height="3" fill="#1478e6"/><rect x="1627.0" y="510.8" width="2" height="2" fill="#1478e6"/><rect x="1630.0" y="516.5" width="2" height="3" fill="#1478e6"/><rect x="1660.0" y="492.5" width="2" height="5" fill="#ff0000"/><rect x="1676.0" y="499.5" width="2" height="3" fill="#1478e6"/><rect x="1686.0" y="501.9" width="4" height="1.9" fill="#f0ec90"/><rect x="1690.8" y="494.1" width="4.5" height="1.9" fill="#f0ec90"/><rect x="1697.0" y="491.7" width="2" height="3" fill="#1478e6"/><rect x="1708.0" y="488.7" width="2" height="3" fill="#1478e6"/><rect x="1711.0" y="481.2" width="2" height="2" fill="#1478e6"/><rect x="1728.5" y="454.3" width="3" height="1.9" fill="#f0ec90"/><rect x="1742.0" y="436.1" width="2" height="7" fill="#1478e6"/><rect x="1750.8" y="447.1" width="2.5" height="1.9" fill="#f0ec90"/><rect x="1755.8" y="436.1" width="4.5" height="1.9" fill="#f0ec90"/><rect x="1805.0" y="447.5" width="2" height="7" fill="#1478e6"/><rect x="1810.0" y="449.0" width="2" height="4" fill="#ff0000"/><rect x="1821.0" y="445.8" width="2" height="5" fill="#ff0000"/><rect x="1840.8" y="445.6" width="4.5" height="1.9" fill="#f0ec90"/><rect x="1856.0" y="435.5" width="2" height="3" fill="#ff0000"/><rect x="1863.8" y="443.9" width="2.5" height="1.9" fill="#f0ec90"/><rect x="1872.0" y="439.8" width="2" height="4" fill="#1478e6"/><rect x="1881.0" y="430.8" width="2" height="3" fill="#1478e6"/><rect x="1898.0" y="438.2" width="2" height="7" fill="#ff0000"/><rect x="1901.0" y="459.0" width="2" height="3" fill="#1478e6"/><rect x="125.2" y="612.5" width="2.5" height="1.9" fill="#f0ec90"/><rect x="155.0" y="622.5" width="4" height="1.9" fill="#f0ec90"/><rect x="159.0" y="628.6" width="2" height="3" fill="#1478e6"/><rect x="161.8" y="633.9" width="2.5" height="1.9" fill="#f0ec90"/><rect x="168.0" y="636.1" width="2" height="2" fill="#1478e6"/><rect x="174.2" y="634.5" width="2.5" height="1.9" fill="#f0ec90"/><rect x="181.0" y="621.1" width="3" height="1.9" fill="#f0ec90"/><rect x="198.3" y="629.1" width="2" height="4" fill="#1478e6"/><rect x="201.7" y="628.4" width="2" height="4" fill="#ff0000"/><rect x="205.0" y="626.4" width="2" height="4" fill="#1478e6"/><rect x="208.3" y="622.9" width="2" height="2" fill="#1478e6"/><rect x="221.4" y="633.3" width="2.5" height="1.9" fill="#f0ec90"/><rect x="228.0" y="622.0" width="4" height="1.9" fill="#f0ec90"/><rect x="236.5" y="599.3" width="2" height="6" fill="#1478e6"/><rect x="249.0" y="616.0" width="2" height="3" fill="#ff0000"/><rect x="252.0" y="616.5" width="2" height="3" fill="#1478e6"/><rect x="257.5" y="609.5" width="3" height="1.9" fill="#f0ec90"/><rect x="272.2" y="603.8" width="2.5" height="1.9" fill="#f0ec90"/><rect x="279.5" y="596.8" width="2" height="3" fill="#ff0000"/><rect x="288.7" y="599.6" width="4" height="1.9" fill="#f0ec90"/><rect x="298.0" y="609.3" width="4" height="1.9" fill="#f0ec90"/><rect x="314.5" y="617.8" width="4" height="1.9" fill="#f0ec90"/><rect x="322.0" y="626.0" width="3" height="1.9" fill="#f0ec90"/><rect x="336.0" y="639.7" width="2" height="3" fill="#1478e6"/><rect x="345.0" y="636.6" width="2" height="4" fill="#ff0000"/><rect x="361.3" y="624.0" width="4" height="1.9" fill="#f0ec90"/><rect x="364.7" y="617.1" width="4" height="1.9" fill="#f0ec90"/><rect x="372.3" y="613.8" width="2" height="6" fill="#1478e6"/><rect x="382.0" y="596.7" width="2" height="2" fill="#1478e6"/><rect x="385.0" y="596.6" width="2" height="4" fill="#ff0000"/><rect x="388.0" y="593.0" width="2" height="2" fill="#ff0000"/><rect x="405.3" y="598.9" width="4" height="1.9" fill="#f0ec90"/><rect x="415.3" y="617.7" width="4" height="1.9" fill="#f0ec90"/><rect x="418.7" y="618.1" width="4" height="1.9" fill="#f0ec90"/><rect x="425.0" y="611.0" width="4" height="1.9" fill="#f0ec90"/><rect x="435.2" y="598.9" width="3" height="1.9" fill="#f0ec90"/><rect x="450.3" y="591.1" width="4" height="1.9" fill="#f0ec90"/><rect x="457.0" y="597.4" width="4" height="1.9" fill="#f0ec90"/><rect x="486.5" y="578.5" width="2" height="6" fill="#1478e6"/><rect x="489.8" y="584.0" width="2.5" height="1.9" fill="#f0ec90"/><rect x="531.0" y="577.7" width="2" height="4" fill="#ff0000"/><rect x="539.0" y="590.9" width="2" height="4" fill="#1478e6"/><rect x="557.2" y="606.8" width="3" height="1.9" fill="#f0ec90"/><rect x="574.3" y="605.2" width="2" height="4" fill="#1478e6"/><rect x="583.8" y="607.4" width="2.5" height="1.9" fill="#f0ec90"/><rect x="590.3" y="610.2" width="2" height="3" fill="#ff0000"/><rect x="607.5" y="609.0" width="3" height="1.9" fill="#f0ec90"/><rect x="611.5" y="605.5" width="2" height="6" fill="#ff0000"/><rect x="618.0" y="602.8" width="2" height="2" fill="#ff0000"/><rect x="621.0" y="598.5" width="2" height="4" fill="#1478e6"/><rect x="630.0" y="595.1" width="2" height="2" fill="#ff0000"/><rect x="681.8" y="585.8" width="2.5" height="1.9" fill="#f0ec90"/><rect x="688.8" y="592.8" width="2.5" height="1.9" fill="#f0ec90"/><rect x="712.3" y="555.8" width="2" height="6" fill="#1478e6"/><rect x="719.0" y="554.9" width="2" height="6" fill="#ff0000"/><rect x="721.5" y="558.6" width="3" height="1.9" fill="#f0ec90"/><rect x="728.0" y="558.8" width="2" height="2" fill="#1478e6"/><rect x="734.0" y="551.4" width="2" height="3" fill="#1478e6"/><rect x="740.0" y="557.9" width="2" height="2" fill="#1478e6"/><rect x="772.8" y="582.9" width="2.5" height="1.9" fill="#f0ec90"/><rect x="776.0" y="580.9" width="2" height="2" fill="#1478e6"/><rect x="782.0" y="576.3" width="2" height="2" fill="#1478e6"/><rect x="791.8" y="557.7" width="3" height="1.9" fill="#f0ec90"/><rect x="802.0" y="558.6" width="3" height="1.9" fill="#f0ec90"/><rect x="808.2" y="570.0" width="4" height="1.9" fill="#f0ec90"/><rect x="815.8" y="559.2" width="2" height="6" fill="#1478e6"/><rect x="854.0" y="534.3" width="2" height="4" fill="#1478e6"/><rect x="859.0" y="527.5" width="4" height="1.9" fill="#f0ec90"/><rect x="866.0" y="517.2" width="2" height="3" fill="#1478e6"/><rect x="899.0" y="582.2" width="2" height="2" fill="#ff0000"/><rect x="901.5" y="576.1" width="3" height="1.9" fill="#f0ec90"/><rect x="912.3" y="572.3" width="2" height="2" fill="#ff0000"/><rect x="915.7" y="588.1" width="2" height="3" fill="#ff0000"/><rect x="925.7" y="602.8" width="2" height="3" fill="#1478e6"/><rect x="943.7" y="589.2" width="2" height="3" fill="#1478e6"/><rect x="955.5" y="601.3" width="2" height="2" fill="#1478e6"/><rect x="965.0" y="615.6" width="2" height="6" fill="#1478e6"/><rect x="974.0" y="637.8" width="2" height="3" fill="#ff0000"/><rect x="987.4" y="640.2" width="2.5" height="1.9" fill="#f0ec90"/><rect x="997.5" y="626.9" width="3" height="1.9" fill="#f0ec90"/><rect x="1004.5" y="625.0" width="3" height="1.9" fill="#f0ec90"/><rect x="1011.8" y="630.9" width="3" height="1.9" fill="#f0ec90"/><rect x="1022.3" y="632.6" width="2" height="6" fill="#1478e6"/><rect x="1048.5" y="642.6" width="3" height="1.9" fill="#f0ec90"/><rect x="1057.3" y="630.3" width="4" height="1.9" fill="#f0ec90"/><rect x="1090.0" y="627.8" width="2" height="6" fill="#1478e6"/><rect x="1095.5" y="620.9" width="3" height="1.9" fill="#f0ec90"/><rect x="1102.0" y="622.6" width="2" height="2" fill="#ff0000"/><rect x="1114.3" y="607.0" width="2" height="3" fill="#1478e6"/><rect x="1117.7" y="607.7" width="2" height="6" fill="#1478e6"/><rect x="1130.0" y="603.3" width="2" height="4" fill="#1478e6"/><rect x="1135.0" y="608.0" width="4" height="1.9" fill="#f0ec90"/><rect x="1145.0" y="597.7" width="2" height="6" fill="#ff0000"/><rect x="1147.0" y="604.3" width="4" height="1.9" fill="#f0ec90"/><rect x="1168.7" y="553.5" width="4" height="1.9" fill="#f0ec90"/><rect x="1181.5" y="538.7" width="3" height="1.9" fill="#f0ec90"/><rect x="1184.8" y="535.2" width="2.5" height="1.9" fill="#f0ec90"/><rect x="1198.8" y="514.0" width="2.5" height="1.9" fill="#f0ec90"/><rect x="1210.3" y="517.0" width="2" height="2" fill="#1478e6"/><rect x="1232.3" y="515.1" width="2" height="6" fill="#1478e6"/><rect x="1243.0" y="538.3" width="4" height="1.9" fill="#f0ec90"/><rect x="1305.8" y="501.6" width="2.5" height="1.9" fill="#f0ec90"/><rect x="1311.5" y="505.7" width="3" height="1.9" fill="#f0ec90"/><rect x="1317.0" y="516.9" width="4" height="1.9" fill="#f0ec90"/><rect x="1328.5" y="552.7" width="3" height="1.9" fill="#f0ec90"/><rect x="1335.5" y="555.7" width="3" height="1.9" fill="#f0ec90"/><rect x="1343.0" y="559.7" width="2" height="3" fill="#ff0000"/><rect x="1350.0" y="547.2" width="2" height="4" fill="#1478e6"/><rect x="1362.0" y="557.5" width="2" height="2" fill="#1478e6"/><rect x="1386.8" y="521.6" width="2.5" height="1.9" fill="#f0ec90"/><rect x="1414.0" y="498.6" width="2" height="2" fill="#ff0000"/><rect x="1452.0" y="433.6" width="2" height="3" fill="#ff0000"/><rect x="1472.0" y="462.2" width="2" height="3" fill="#1478e6"/><rect x="1477.8" y="462.5" width="3" height="1.9" fill="#f0ec90"/><rect x="1493.0" y="487.9" width="4" height="1.9" fill="#f0ec90"/><rect x="1505.0" y="496.5" width="2" height="4" fill="#1478e6"/><rect x="1516.5" y="481.8" width="2" height="2" fill="#1478e6"/><rect x="1529.8" y="483.8" width="2.5" height="1.9" fill="#f0ec90"/><rect x="1545.7" y="500.7" width="2" height="2" fill="#1478e6"/><rect x="1552.3" y="504.3" width="2" height="6" fill="#1478e6"/><rect x="1555.6" y="505.8" width="2" height="4" fill="#1478e6"/><rect x="1558.9" y="504.6" width="2" height="4" fill="#ff0000"/><rect x="1561.2" y="506.8" width="4" height="1.9" fill="#f0ec90"/><rect x="1574.9" y="489.9" width="2" height="4" fill="#ff0000"/><rect x="1592.0" y="515.3" width="4" height="1.9" fill="#f0ec90"/><rect x="1666.4" y="495.0" width="2" height="3" fill="#ff0000"/><rect x="1668.6" y="500.6" width="4" height="1.9" fill="#f0ec90"/><rect x="1672.8" y="494.8" width="2" height="2" fill="#ff0000"/><rect x="1678.7" y="502.0" width="4" height="1.9" fill="#f0ec90"/><rect x="1714.0" y="471.2" width="2" height="3" fill="#1478e6"/><rect x="1735.2" y="449.3" width="2.5" height="1.9" fill="#f0ec90"/><rect x="1738.8" y="446.7" width="2" height="3" fill="#1478e6"/><rect x="1745.0" y="443.5" width="2" height="2" fill="#1478e6"/><rect x="1816.8" y="448.3" width="3" height="1.9" fill="#f0ec90"/><rect x="1833.0" y="440.7" width="2" height="4" fill="#1478e6"/><rect x="1836.0" y="446.1" width="2" height="4" fill="#ff0000"/><rect x="1839.0" y="444.4" width="2" height="6" fill="#ff0000"/><rect x="1852.5" y="438.6" width="2" height="4" fill="#ff0000"/><rect x="1860.0" y="441.2" width="2" height="3" fill="#1478e6"/><rect x="1874.0" y="436.2" width="4" height="1.9" fill="#f0ec90"/><rect x="1883.9" y="434.9" width="3" height="1.9" fill="#f0ec90"/><rect x="1891.2" y="436.2" width="2" height="4" fill="#1478e6"/><rect x="23.0" y="659.0" width="2" height="7.0" fill="#f0ec90"/><rect x="77.5" y="683.0" width="2" height="18.0" fill="#1478e6"/><rect x="112.5" y="697.0" width="2" height="12.0" fill="#1478e6"/><rect x="695.0" y="545.5" width="2" height="26.9" fill="#ff0000"/><rect x="751.0" y="551.5" width="2" height="29.8" fill="#ff0000"/><rect x="755.0" y="543.5" width="2" height="35.8" fill="#1478e6"/><rect x="761.0" y="564.4" width="2" height="16.9" fill="#1478e6"/><rect x="403.0" y="588.0" width="2" height="21.0" fill="#ff0000"/><rect x="443.0" y="587.0" width="2" height="14.0" fill="#f0ec90"/><rect x="122.0" y="599.7" width="2" height="25.8" fill="#ff0000"/><rect x="130.0" y="605.6" width="2" height="13.0" fill="#1478e6"/><rect x="145.0" y="579.8" width="2" height="15.9" fill="#ff0000"/><rect x="149.0" y="609.6" width="2" height="15.9" fill="#ff0000"/><rect x="233.0" y="598.7" width="2" height="8.9" fill="#ff0000"/><rect x="240.0" y="598.7" width="2" height="14.9" fill="#1478e6"/><rect x="269.0" y="597.7" width="2" height="15.9" fill="#1478e6"/><rect x="283.0" y="589.7" width="2" height="13.9" fill="#ff0000"/><rect x="329.0" y="642.0" width="2" height="10.0" fill="#1478e6"/><rect x="335.0" y="642.0" width="2" height="10.0" fill="#ff0000"/><rect x="349.0" y="627.5" width="2" height="13.0" fill="#ff0000"/><rect x="391.0" y="592.7" width="2" height="10.9" fill="#ff0000"/><rect x="828.0" y="478.0" width="2" height="36.0" fill="#ff0000"/><rect x="833.0" y="472.0" width="2" height="25.6" fill="#1478e6"/><rect x="799.0" y="539.0" width="2" height="12.5" fill="#ff0000"/><rect x="863.0" y="518.0" width="2" height="15.0" fill="#ff0000"/><rect x="866.0" y="518.0" width="2" height="18.0" fill="#1478e6"/><rect x="882.0" y="549.4" width="2" height="13.2" fill="#1478e6"/><rect x="885.0" y="580.0" width="2" height="10.0" fill="#1478e6"/><rect x="909.0" y="556.5" width="2" height="8.2" fill="#ff0000"/><rect x="929.0" y="600.0" width="2" height="11.0" fill="#ff0000"/><rect x="952.0" y="597.0" width="2" height="8.0" fill="#1478e6"/><rect x="968.0" y="610.4" width="2" height="16.3" fill="#1478e6"/><rect x="1001.0" y="614.5" width="2" height="12.2" fill="#1478e6"/><rect x="1159.0" y="564.7" width="2" height="17.3" fill="#ff0000"/><rect x="1162.0" y="578.0" width="2" height="22.2" fill="#ff0000"/><rect x="1173.0" y="543.0" width="2" height="15.0" fill="#ff0000"/><rect x="1191.0" y="525.0" width="2" height="20.0" fill="#1478e6"/><rect x="1203.0" y="507.5" width="2" height="10.5" fill="#ff0000"/><rect x="1227.0" y="503.5" width="2" height="8.0" fill="#ff0000"/><rect x="1269.0" y="510.0" width="2" height="13.4" fill="#ff0000"/><rect x="1273.0" y="499.5" width="2" height="15.5" fill="#ff0000"/><rect x="1281.0" y="475.6" width="2" height="21.9" fill="#ff0000"/><rect x="1284.0" y="477.6" width="2" height="17.9" fill="#1478e6"/><rect x="1286.0" y="475.6" width="2" height="19.9" fill="#f0ec90"/><rect x="1296.0" y="467.7" width="2" height="11.9" fill="#ff0000"/><rect x="1326.0" y="541.0" width="2" height="38.0" fill="#1478e6"/><rect x="1399.0" y="499.5" width="2" height="20.9" fill="#ff0000"/><rect x="1423.0" y="464.7" width="2" height="14.9" fill="#ff0000"/><rect x="1430.0" y="427.0" width="2" height="11.8" fill="#ff0000"/><rect x="1455.0" y="419.0" width="2" height="21.8" fill="#ff0000"/><rect x="1459.0" y="426.0" width="2" height="20.8" fill="#1478e6"/><rect x="1488.0" y="459.7" width="2" height="8.0" fill="#1478e6"/><rect x="1489.0" y="479.6" width="2" height="8.0" fill="#1478e6"/><rect x="1497.0" y="485.6" width="2" height="9.9" fill="#ff0000"/><rect x="1499.0" y="497.5" width="2" height="8.9" fill="#1478e6"/><rect x="1539.0" y="489.5" width="2" height="12.0" fill="#1478e6"/><rect x="1604.0" y="524.0" width="2" height="8.7" fill="#ff0000"/><rect x="1630.0" y="513.5" width="2" height="9.5" fill="#1478e6"/><rect x="1729.0" y="451.8" width="2" height="6.9" fill="#ff0000"/></g>
<g clip-path="url(#c2)"><path d="M11.5 873V872H13.1V873H14.7V871H16.2V870H17.8V870H19.4V869H21.0V870H22.6V868H24.1V864H25.7V863H27.3V862H28.9V862H30.5V862H32.0V859H33.6V862H35.2V864H36.8V860H38.4V859H39.9V859H41.5V860H43.1V860H44.7V857H46.3V857H47.8V862H49.4V871H51.0V872H52.6V868H54.2V866H55.7V864H57.3V865H58.9V868H60.5V870H62.1V871H63.6V875H65.2V875H66.8V871H68.4V863H70.0V864H71.5V867H73.1V904H74.7V900H76.3V899H77.9V896H79.4V898H81.0V904H82.6V918H84.2V926H85.8V926H87.3V928H88.9V926H90.5V923H92.1V921H93.7V921H95.2V920H96.8V924H98.4V929H100.0V933H101.6V937H103.1V940H104.7V940H106.3V933H107.9V926H109.5V930H111.0V938H112.6V946H114.2V949H115.8V949H117.4V945H118.9V940H120.5V930H122.1V920H123.7V914H125.3V910H126.8V904H128.4V899H130.0V898H131.6V900H133.2V902H134.7V900H136.3V901H137.9V902H139.5V901H141.1V899H142.6V899H144.2V897H145.8V900H147.4V901H149.0V903H150.5V904H152.1V905H153.7V906H155.3V916H156.9V921H158.4V932H160.0V932H161.6V931H163.2V930H164.8V929H166.3V926H167.9V924H169.5V925H171.1V924H172.7V926H174.2V933H175.8V932H177.4V931H179.0V928H180.6V923H182.1V926H183.7V929H185.3V933H186.9V934H188.5V933H190.0V929H191.6V930H193.2V927H194.8V923H196.4V922H197.9V917H199.5V914H201.1V910H202.7V910H204.3V908H205.8V909H207.4V909H209.0V907H210.6V908H212.2V909H213.7V909H215.3V907H216.9V907H218.5V904H220.1V904H221.6V902H223.2V902H224.8V900H226.4V901H228.0V907H229.5V910H231.1V911H232.7V912H234.3V913H235.9V915H237.4V915H239.0V915H240.6V919H242.2V923H243.8V928H245.3V933H246.9V939H248.5V944H250.1V948H251.7V952H253.2V953H254.8V956H256.4V961H258.0V965H259.6V970H261.1V970H262.7V967H264.3V966H265.9V968H267.5V968H269.0V968H270.6V967H272.2V969H273.8V969H275.4V967H276.9V964H278.5V964H280.1V969H281.7V969H283.3V969H284.8V973H286.4V977H288.0V983H289.6V982H291.2V982H292.7V983H294.3V980H295.9V980H297.5V979H299.1V977H300.6V977H302.2V976H303.8V975H305.4V976H307.0V977H308.5V978H310.1V976H311.7V977H313.3V978H314.9V975H316.4V975H318.0V976H319.6V976H321.2V974H322.8V975H324.3V975H325.9V980H327.5V985H329.1V988H330.7V989H332.2V989H333.8V986H335.4V982H337.0V982H338.6V980H340.1V982H341.7V982H343.3V978H344.9V977H346.5V976H348.0V977H349.6V982H351.2V987H352.8V992H354.4V991H355.9V991H357.5V990H359.1V989H360.7V989H362.3V988H363.8V985H365.4V985H367.0V985H368.6V983H370.2V984H371.7V984H373.3V982H374.9V982H376.5V980H378.1V983H379.6V987H381.2V988H382.8V989H384.4V989H386.0V989H387.5V988H389.1V991H390.7V997H392.3V1001H393.9V1005H395.4V1010H397.0V1008H398.6V1009H400.2V1010H401.8V1009H403.3V1015H404.9V1022H406.5V1022H408.1V1012H409.7V1012H411.2V1013H412.8V1014H414.4V1016H416.0V1019H417.6V1017H419.1V1015H420.7V1009H422.3V1008H423.9V1007H425.5V1002H427.0V1000H428.6V1001H430.2V1000H431.8V1002H433.4V1002H434.9V1000H436.5V1002H438.1V1001H439.7V999H441.3V1003H442.8V1005H444.4V1008H446.0V1010H447.6V1013H449.2V1015H450.7V1015H452.3V1016H453.9V1018H455.5V1014H457.1V1008H458.6V1006H460.2V1008H461.8V1008H463.4V1008H465.0V1010H466.5V1011H468.1V1013H469.7V1009H471.3V1006H472.9V1004H474.4V998H476.0V994H477.6V990H479.2V989H480.8V990H482.3V985H483.9V985H485.5V986H487.1V989H488.7V993H490.2V993H491.8V991H493.4V990H495.0V990H496.6V992H498.1V994H499.7V996H501.3V1001H502.9V997H504.5V994H506.0V993H507.6V996H509.2V998H510.8V996H512.4V992H513.9V992H515.5V992H517.1V990H518.7V988H520.3V987H521.8V987H523.4V984H525.0V980H526.6V979H528.2V973H529.7V975H531.3V974H532.9V973H534.5V971H536.1V971H537.6V970H539.2V973H540.8V973H542.4V976H544.0V979H545.5V984H547.1V985H548.7V989H550.3V990H551.9V991H553.4V989H555.0V986H556.6V989H558.2V989H559.8V987H561.3V989H562.9V994H564.5V1001H566.1V999H567.7V1001H569.2V1004H570.8V1006H572.4V1007H574.0V1005H575.6V1004H577.1V1001H578.7V1004H580.3V1003H581.9V1006H583.5V1004H585.0V1011H586.6V1016H588.2V1016H589.8V1015H591.4V1013H592.9V1014H594.5V1016H596.1V1017H597.7V1017H599.3V1022H600.8V1024H602.4V1024H604.0V1023H605.6V1022H607.2V1019H608.7V1017H610.3V1014H611.9V1016H613.5V1014H615.1V1013H616.6V1012H618.2V1014H619.8V1011H621.4V1009H623.0V1011H624.5V1011H626.1V1014H627.7V1013H629.3V1015H630.9V1018H632.4V1019H634.0V1021H635.6V1025H637.2V1025H638.8V1023H640.3V1022H641.9V1021H643.5V1020H645.1V1020H646.7V1021H648.2V1023H649.8V1025H651.4V1026H653.0V1028H654.6V1033H656.1V1032H657.7V1033H659.3V1032H660.9V1032H662.5V1028H664.0V1024H665.6V1022H667.2V1017H668.8V1020H670.4V1024H671.9V1027H673.5V1031H675.1V1034H676.7V1033H678.3V1029H679.8V1028H681.4V1025H683.0V1023H684.6V1018H686.2V1015H687.7V1016H689.3V1015H690.9V1013H692.5V1015H694.1V1016H695.6V1014H697.2V1014H698.8V1015H700.4V1012H702.0V1013H703.5V1011H705.1V1011H706.7V1011H708.3V1012H709.9V1013H711.4V1014H713.0V1012H714.6V1012H716.2V1001H717.8V1002H719.3V1001H720.9V1001H722.5V1000H724.1V997H725.7V996H727.2V992H728.8V985H730.4V978H732.0V980H733.6V986H735.1V986H736.7V991H738.3V994H739.9V992H741.5V990H743.0V988H744.6V983H746.2V981H747.8V987H749.4V991H750.9V986H752.5V952H754.1V948H755.7V943H757.3V943H758.8V943H760.4V942H762.0V944H763.6V944H765.2V943H766.7V943H768.3V946H769.9V947H771.5V951H773.1V954H774.6V946H776.2V941H777.8V939H779.4V938H781.0V939H782.5V939H784.1V942H785.7V950H787.3V950H788.9V947H790.4V945H792.0V949H793.6V953H795.2V950H796.8V944H798.3V950H799.9V954H801.5V951H803.1V952H804.7V953H806.2V951H807.8V947H809.4V945H811.0V945H812.6V949H814.1V952H815.7V947H817.3V945H818.9V942H820.5V946H822.0V947H823.6V950H825.2V952H826.8V952H828.4V956H829.9V959H831.5V964H833.1V963H834.7V962H836.3V956H837.8V958H839.4V962H841.0V961H842.6V958H844.2V953H845.7V947H847.3V945H848.9V939H850.5V940H852.1V946H853.6V949H855.2V942H856.8V937H858.4V933H860.0V927H861.5V924H863.1V921H864.7V918H866.3V919H867.9V917H869.4V920H871.0V926H872.6V926H874.2V923H875.8V915H877.3V911H878.9V914H880.5V919H882.1V925H883.7V925H885.2V928H886.8V928H888.4V920H890.0V916H891.6V911H893.1V907H894.7V913H896.3V917H897.9V923H899.5V930H901.0V926H902.6V926H904.2V921H905.8V919H907.4V920H908.9V923H910.5V924H912.1V925H913.7V926H915.3V924H916.8V923H918.4V921H920.0V923H921.6V922H923.2V919H924.7V913H926.3V912H927.9V908H929.5V907H931.1V905H932.6V904H934.2V897H935.8V895H937.4V893H939.0V896H940.5V898H942.1V900H943.7V902H945.3V904H946.9V901H948.4V904H950.0V907H951.6V903H953.2V901H954.8V898H956.3V896H957.9V892H959.5V891H961.1V892H962.7V890H964.2V887H965.8V886H967.4V884H969.0V887H970.6V891H972.1V891H973.7V892H975.3V894H976.9V896H978.5V893H980.0V891H981.6V886H983.2V892H984.8V895H986.4V895H987.9V898H989.5V902H991.1V906H992.7V910H994.3V911H995.8V908H997.4V908H999.0V905H1000.6V910H1002.2V913H1003.7V913H1005.3V911H1006.9V905H1008.5V902H1010.1V900H1011.6V897H1013.2V898H1014.8V897H1016.4V903H1018.0V907H1019.5V908H1021.1V914H1022.7V921H1024.3V923H1025.9V924H1027.4V925H1029.0V918H1030.6V919H1032.2V920H1033.8V919H1035.3V915H1036.9V915H1038.5V914H1040.1V913H1041.7V913H1043.2V910H1044.8V907H1046.4V903H1048.0V896H1049.6V894H1051.1V900H1052.7V904H1054.3V906H1055.9V907H1057.5V906H1059.0V904H1060.6V904H1062.2V902H1063.8V899H1065.4V898H1066.9V897H1068.5V899H1070.1V900H1071.7V902H1073.3V903H1074.8V904H1076.4V899H1078.0V898H1079.6V898H1081.2V896H1082.7V895H1084.3V897H1085.9V902H1087.5V904H1089.1V903H1090.6V906H1092.2V909H1093.8V907H1095.4V901H1097.0V899H1098.5V896H1100.1V892H1101.7V891H1103.3V892H1104.9V892H1106.4V888H1108.0V890H1109.6V890H1111.2V894H1112.8V895H1114.3V897H1115.9V895H1117.5V895H1119.1V895H1120.7V895H1122.2V895H1123.8V898H1125.4V897H1127.0V896H1128.6V893H1130.1V890H1131.7V888H1133.3V886H1134.9V886H1136.5V885H1138.0V888H1139.6V891H1141.2V895H1142.8V899H1144.4V899H1145.9V901H1147.5V900H1149.1V893H1150.7V888H1152.3V890H1153.8V896H1155.4V900H1157.0V901H1158.6V905H1160.2V909H1161.7V908H1163.3V909H1164.9V914H1166.5V916H1168.1V918H1169.6V917H1171.2V919H1172.8V922H1174.4V922H1176.0V920H1177.5V917H1179.1V914H1180.7V916H1182.3V912H1183.9V911H1185.4V908H1187.0V911H1188.6V907H1190.2V910H1191.8V911H1193.3V908H1194.9V908H1196.5V911H1198.1V914H1199.7V914H1201.2V911H1202.8V909H1204.4V909H1206.0V904H1207.6V895H1209.1V900H1210.7V907H1212.3V909H1213.9V906H1215.5V905H1217.0V902H1218.6V900H1220.2V898H1221.8V900H1223.4V902H1224.9V903H1226.5V900H1228.1V898H1229.7V900H1231.3V900H1232.8V902H1234.4V905H1236.0V903H1237.6V899H1239.2V894H1240.7V891H1242.3V890H1243.9V890H1245.5V884H1247.1V884H1248.6V884H1250.2V878H1251.8V877H1253.4V875H1255.0V873H1256.5V874H1258.1V880H1259.7V885H1261.3V889H1262.9V886H1264.4V885H1266.0V882H1267.6V883H1269.2V885H1270.8V885H1272.3V885H1273.9V887H1275.5V893H1277.1V898H1278.7V899H1280.2V898H1281.8V902H1283.4V906H1285.0V909H1286.6V912H1288.1V915H1289.7V918H1291.3V920H1292.9V920H1294.5V916H1296.0V918H1297.6V921H1299.2V924H1300.8V930H1302.4V932H1303.9V930H1305.5V926H1307.1V925H1308.7V922H1310.3V919H1311.8V915H1313.4V913H1315.0V910H1316.6V909H1318.2V906H1319.7V907H1321.3V906H1322.9V899H1324.5V894H1326.1V891H1327.6V889H1329.2V885H1330.8V882H1332.4V881H1334.0V877H1335.5V875H1337.1V873H1338.7V872H1340.3V872H1341.9V876H1343.4V878H1345.0V883H1346.6V883H1348.2V881H1349.8V882H1351.3V882H1352.9V887H1354.5V887H1356.1V886H1357.7V886H1359.2V883H1360.8V880H1362.4V878H1364.0V878H1365.6V876H1367.1V876H1368.7V887H1370.3V901H1371.9V899H1373.5V900H1375.0V899H1376.6V904H1378.2V911H1379.8V920H1381.4V918H1382.9V910H1384.5V905H1386.1V901H1387.7V897H1389.3V892H1390.8V893H1392.4V890H1394.0V888H1395.6V888H1397.2V886H1398.7V888H1400.3V891H1401.9V894H1403.5V893H1405.1V895H1406.6V892H1408.2V891H1409.8V890H1411.4V889H1413.0V887H1414.5V882H1416.1V877H1417.7V872H1419.3V868H1420.9V870H1422.4V875H1424.0V880H1425.6V881H1427.2V880H1428.8V879H1430.3V887H1431.9V888H1433.5V885H1435.1V881H1436.7V881H1438.2V882H1439.8V884H1441.4V884H1443.0V885H1444.6V884H1446.1V885H1447.7V887H1449.3V886H1450.9V889H1452.5V893H1454.0V895H1455.6V897H1457.2V902H1458.8V903H1460.4V902H1461.9V902H1463.5V899H1465.1V897H1466.7V894H1468.3V891H1469.8V892H1471.4V890H1473.0V887H1474.6V884H1476.2V881H1477.7V880H1479.3V883H1480.9V881H1482.5V880H1484.1V877H1485.6V878H1487.2V878H1488.8V878H1490.4V878H1492.0V877H1493.5V880H1495.1V882H1496.7V884H1498.3V888H1499.9V888H1501.4V888H1503.0V887H1504.6V885H1506.2V881H1507.8V881H1509.3V884H1510.9V884H1512.5V883H1514.1V883H1515.7V885H1517.2V887H1518.8V886H1520.4V884H1522.0V882H1523.6V882H1525.1V884H1526.7V887H1528.3V887H1529.9V884H1531.5V887H1533.0V883H1534.6V881H1536.2V880H1537.8V877H1539.4V873H1540.9V870H1542.5V868H1544.1V869H1545.7V870H1547.3V868H1548.8V862H1550.4V861H1552.0V859H1553.6V855H1555.2V852H1556.7V850H1558.3V847H1559.9V849H1561.5V853H1563.1V855H1564.6V857H1566.2V855H1567.8V853H1569.4V852H1571.0V849H1572.5V847H1574.1V850H1575.7V851H1577.3V853H1578.9V862H1580.4V866H1582.0V867H1583.6V866H1585.2V862H1586.8V854H1588.3V849H1589.9V844H1591.5V841H1593.1V842H1594.7V842H1596.2V841H1597.8V846H1599.4V847H1601.0V846H1602.6V843H1604.1V841H1605.7V844H1607.3V848H1608.9V854H1610.5V855H1612.0V858H1613.6V858H1615.2V859H1616.8V865H1618.4V869H1619.9V869H1621.5V871H1623.1V864H1624.7V862H1626.3V859H1627.8V859H1629.4V859H1631.0V855H1632.6V854H1634.2V854H1635.7V856H1637.3V855H1638.9V852H1640.5V848H1642.1V850H1643.6V851H1645.2V851H1646.8V849H1648.4V851H1650.0V851H1651.5V848H1653.1V847H1654.7V845H1656.3V843H1657.9V840H1659.4V849H1661.0V857H1662.6V866H1664.2V874H1665.8V877H1667.3V885H1668.9V888H1670.5V889H1672.1V889H1673.7V884H1675.2V880H1676.8V882H1678.4V880H1680.0V881H1681.6V884H1683.1V885H1684.7V884H1686.3V883H1687.9V881H1689.5V879H1691.0V879H1692.6V877H1694.2V878H1695.8V879H1697.4V878H1698.9V881H1700.5V879H1702.1V869H1703.7V866H1705.3V861H1706.8V859H1708.4V862H1710.0V861H1711.6V863H1713.2V863H1714.7V864H1716.3V852H1717.9V835H1719.5V830H1721.1V827H1722.6V824H1724.2V824H1725.8V823H1727.4V826H1729.0V831H1730.5V834H1732.1V838H1733.7V837H1735.3V833H1736.9V832H1738.4V831H1740.0V820H1741.6V811H1743.2V812H1744.8V815H1746.3V817H1747.9V817H1749.5V818H1751.1V816H1752.7V815H1754.2V812H1755.8V810H1757.4V814H1759.0V819H1760.6V823H1762.1V822H1763.7V823H1765.3V821H1766.9V821H1768.5V823H1770.0V824H1771.6V826H1773.2V825H1774.8V827H1776.4V825H1777.9V824H1779.5V824H1781.1V819H1782.7V819H1784.3V821H1785.8V823H1787.4V826H1789.0V826H1790.6V830H1792.2V832H1793.7V832H1795.3V830H1796.9V826H1798.5V828H1800.1V831H1801.6V835H1803.2V838H1804.8V835H1806.4V833H1808.0V829H1809.5V827H1811.1V826H1812.7V827H1814.3V823H1815.9V821H1817.4V818H1819.0V815H1820.6V817H1822.2V815H1823.8V818H1825.3V818H1826.9V817H1828.5V817H1830.1V813H1831.7V809H1833.2V805H1834.8V806H1836.4V806H1838.0V807H1839.6V807H1841.1V811H1842.7V810H1844.3V814H1845.9V814H1847.5V810H1849.0V807H1850.6V805H1852.2V806H1853.8V806H1855.4V804H1856.9V804H1858.5V804H1860.1V802H1861.7V803H1863.3V805H1864.8V802H1866.4V803H1868.0V795H1869.6V784H1871.2V786H1872.7V784H1874.3V781H1875.9V778H1877.5V777H1879.1V776H1880.6V772H1882.2V771H1883.8V776H1885.4V779H1887.0V777H1888.5V780H1890.1V779H1891.7V778H1893.3V779H1894.9V781H1896.4V782H1898.0V782H1899.6V783H1901.2V782H1902.8" fill="none" stroke="#ff0000" stroke-width="3" stroke-linejoin="miter" stroke-linecap="square"/></g>
</svg>
<div class="m" style="left:12px;top:80.5px;color:#dcdcdc;font-size:16px;font-weight:normal;transform:scale(1.0,1.27)"><i style="left:0.0px;width:19.2px;transform:scale(1.12,0.92)">時</i><i style="left:19.2px;width:19.2px;transform:scale(1.12,0.92)">刻</i><i style="left:38.4px;width:9.6px;transform:scaleX(0.86)">:</i><i style="left:48.0px;width:9.6px;transform:scaleX(0.86)">0</i><i style="left:57.6px;width:9.6px;transform:scaleX(0.86)">6</i><i style="left:67.2px;width:9.6px;transform:scaleX(0.86)">:</i><i style="left:76.8px;width:9.6px;transform:scaleX(0.86)">0</i><i style="left:86.4px;width:9.6px;transform:scaleX(0.86)">0</i><i style="left:105.6px;width:19.2px;transform:scale(1.12,0.92)">始</i><i style="left:124.8px;width:19.2px;transform:scale(1.12,0.92)">値</i><i style="left:144.0px;width:9.6px;transform:scaleX(0.86)">:</i><i style="left:153.6px;width:9.6px;transform:scaleX(0.86)">2</i><i style="left:163.2px;width:9.6px;transform:scaleX(0.86)">1</i><i style="left:172.8px;width:9.6px;transform:scaleX(0.86)">,</i><i style="left:182.4px;width:9.6px;transform:scaleX(0.86)">1</i><i style="left:192.0px;width:9.6px;transform:scaleX(0.86)">1</i><i style="left:201.6px;width:9.6px;transform:scaleX(0.86)">2</i><i style="left:220.8px;width:19.2px;transform:scale(1.12,0.92)">高</i><i style="left:240.0px;width:19.2px;transform:scale(1.12,0.92)">値</i><i style="left:259.2px;width:9.6px;transform:scaleX(0.86)">:</i><i style="left:268.8px;width:9.6px;transform:scaleX(0.86)">2</i><i style="left:278.4px;width:9.6px;transform:scaleX(0.86)">1</i><i style="left:288.0px;width:9.6px;transform:scaleX(0.86)">,</i><i style="left:297.6px;width:9.6px;transform:scaleX(0.86)">1</i><i style="left:307.2px;width:9.6px;transform:scaleX(0.86)">1</i><i style="left:316.8px;width:9.6px;transform:scaleX(0.86)">2</i><i style="left:336.0px;width:19.2px;transform:scale(1.12,0.92)">安</i><i style="left:355.2px;width:19.2px;transform:scale(1.12,0.92)">値</i><i style="left:374.4px;width:9.6px;transform:scaleX(0.86)">:</i><i style="left:384.0px;width:9.6px;transform:scaleX(0.86)">2</i><i style="left:393.6px;width:9.6px;transform:scaleX(0.86)">1</i><i style="left:403.2px;width:9.6px;transform:scaleX(0.86)">,</i><i style="left:412.8px;width:9.6px;transform:scaleX(0.86)">1</i><i style="left:422.4px;width:9.6px;transform:scaleX(0.86)">1</i><i style="left:432.0px;width:9.6px;transform:scaleX(0.86)">2</i><i style="left:451.2px;width:19.2px;transform:scale(1.12,0.92)">終</i><i style="left:470.4px;width:19.2px;transform:scale(1.12,0.92)">値</i><i style="left:489.6px;width:9.6px;transform:scaleX(0.86)">:</i><i style="left:499.2px;width:9.6px;transform:scaleX(0.86)">2</i><i style="left:508.8px;width:9.6px;transform:scaleX(0.86)">1</i><i style="left:518.4px;width:9.6px;transform:scaleX(0.86)">,</i><i style="left:528.0px;width:9.6px;transform:scaleX(0.86)">1</i><i style="left:537.6px;width:9.6px;transform:scaleX(0.86)">1</i><i style="left:547.2px;width:9.6px;transform:scaleX(0.86)">2</i></div>
<div class="m" style="left:124px;top:346.5px;color:#d8d8d8;font-size:16px;font-weight:normal;transform:scale(1.0,1.35)"><i style="left:0.0px;width:9.6px;transform:scaleX(0.9)">2</i><i style="left:9.6px;width:9.6px;transform:scaleX(0.9)">4</i></div>
<div class="m" style="left:1412px;top:346.5px;color:#d8d8d8;font-size:16px;font-weight:normal;transform:scale(1.0,1.35)"><i style="left:0.0px;width:9.6px;transform:scaleX(0.9)">2</i><i style="left:9.6px;width:9.6px;transform:scaleX(0.9)">5</i></div>
<div class="m" style="left:43.0px;top:371.5px;color:#e0e0e0;font-size:16px;font-weight:normal;transform:scale(0.88,1.27)"><i style="left:0.0px;width:11.1px">0</i><i style="left:11.1px;width:11.1px">5</i></div>
<div class="m" style="left:96.5px;top:371.5px;color:#e0e0e0;font-size:16px;font-weight:normal;transform:scale(0.88,1.27)"><i style="left:0.0px;width:11.1px">0</i><i style="left:11.1px;width:11.1px">6</i></div>
<div class="m" style="left:96.5px;top:371.5px;color:#e0e0e0;font-size:16px;font-weight:normal;transform:scale(0.88,1.27)"><i style="left:0.0px;width:11.1px">0</i><i style="left:11.1px;width:11.1px">8</i></div>
<div class="m" style="left:147.5px;top:371.5px;color:#e0e0e0;font-size:16px;font-weight:normal;transform:scale(0.88,1.27)"><i style="left:0.0px;width:11.1px">0</i><i style="left:11.1px;width:11.1px">9</i></div>
<div class="m" style="left:240.5px;top:371.5px;color:#e0e0e0;font-size:16px;font-weight:normal;transform:scale(0.88,1.27)"><i style="left:0.0px;width:11.1px">1</i><i style="left:11.1px;width:11.1px">0</i></div>
<div class="m" style="left:334.5px;top:371.5px;color:#e0e0e0;font-size:16px;font-weight:normal;transform:scale(0.88,1.27)"><i style="left:0.0px;width:11.1px">1</i><i style="left:11.1px;width:11.1px">1</i></div>
<div class="m" style="left:425.5px;top:371.5px;color:#e0e0e0;font-size:16px;font-weight:normal;transform:scale(0.88,1.27)"><i style="left:0.0px;width:11.1px">1</i><i style="left:11.1px;width:11.1px">2</i></div>
<div class="m" style="left:517.5px;top:371.5px;color:#e0e0e0;font-size:16px;font-weight:normal;transform:scale(0.88,1.27)"><i style="left:0.0px;width:11.1px">1</i><i style="left:11.1px;width:11.1px">3</i></div>
<div class="m" style="left:608.5px;top:371.5px;color:#e0e0e0;font-size:16px;font-weight:normal;transform:scale(0.88,1.27)"><i style="left:0.0px;width:11.1px">1</i><i style="left:11.1px;width:11.1px">4</i></div>
<div class="m" style="left:693.0px;top:371.5px;color:#e0e0e0;font-size:16px;font-weight:normal;transform:scale(0.88,1.27)"><i style="left:0.0px;width:11.1px">1</i><i style="left:11.1px;width:11.1px">5</i></div>
<div class="m" style="left:755.0px;top:371.5px;color:#e0e0e0;font-size:16px;font-weight:normal;transform:scale(0.88,1.27)"><i style="left:0.0px;width:11.1px">1</i><i style="left:11.1px;width:11.1px">7</i></div>
<div class="m" style="left:847.5px;top:371.5px;color:#e0e0e0;font-size:16px;font-weight:normal;transform:scale(0.88,1.27)"><i style="left:0.0px;width:11.1px">1</i><i style="left:11.1px;width:11.1px">8</i></div>
<div class="m" style="left:941.0px;top:371.5px;color:#e0e0e0;font-size:16px;font-weight:normal;transform:scale(0.88,1.27)"><i style="left:0.0px;width:11.1px">1</i><i style="left:11.1px;width:11.1px">9</i></div>
<div class="m" style="left:1034.5px;top:371.5px;color:#e0e0e0;font-size:16px;font-weight:normal;transform:scale(0.88,1.27)"><i style="left:0.0px;width:11.1px">2</i><i style="left:11.1px;width:11.1px">0</i></div>
<div class="m" style="left:1128.5px;top:371.5px;color:#e0e0e0;font-size:16px;font-weight:normal;transform:scale(0.88,1.27)"><i style="left:0.0px;width:11.1px">2</i><i style="left:11.1px;width:11.1px">1</i></div>
<div class="m" style="left:1223.0px;top:371.5px;color:#e0e0e0;font-size:16px;font-weight:normal;transform:scale(0.88,1.27)"><i style="left:0.0px;width:11.1px">2</i><i style="left:11.1px;width:11.1px">2</i></div>
<div class="m" style="left:1317.5px;top:371.5px;color:#e0e0e0;font-size:16px;font-weight:normal;transform:scale(0.88,1.27)"><i style="left:0.0px;width:11.1px">2</i><i style="left:11.1px;width:11.1px">3</i></div>
<div class="m" style="left:1412.0px;top:371.5px;color:#e0e0e0;font-size:16px;font-weight:normal;transform:scale(0.88,1.27)"><i style="left:0.0px;width:11.1px">0</i><i style="left:11.1px;width:11.1px">0</i></div>
<div class="m" style="left:1504.5px;top:371.5px;color:#e0e0e0;font-size:16px;font-weight:normal;transform:scale(0.88,1.27)"><i style="left:0.0px;width:11.1px">0</i><i style="left:11.1px;width:11.1px">1</i></div>
<div class="m" style="left:1595.5px;top:371.5px;color:#e0e0e0;font-size:16px;font-weight:normal;transform:scale(0.88,1.27)"><i style="left:0.0px;width:11.1px">0</i><i style="left:11.1px;width:11.1px">2</i></div>
<div class="m" style="left:1665.5px;top:371.5px;color:#e0e0e0;font-size:16px;font-weight:normal;transform:scale(0.88,1.27)"><i style="left:0.0px;width:11.1px">0</i><i style="left:11.1px;width:11.1px">3</i></div>
<div class="m" style="left:1754.5px;top:371.5px;color:#e0e0e0;font-size:16px;font-weight:normal;transform:scale(0.88,1.27)"><i style="left:0.0px;width:11.1px">0</i><i style="left:11.1px;width:11.1px">4</i></div>
<div class="m" style="left:1833.5px;top:371.5px;color:#e0e0e0;font-size:16px;font-weight:normal;transform:scale(0.88,1.27)"><i style="left:0.0px;width:11.1px">0</i><i style="left:11.1px;width:11.1px">5</i></div>
<div class="m" style="left:1878.0px;top:371.5px;color:#e0e0e0;font-size:16px;font-weight:normal;transform:scale(0.88,1.27)"><i style="left:0.0px;width:11.1px">0</i><i style="left:11.1px;width:11.1px">6</i></div>
<div class="abs" style="left:1907px;top:77px;width:92px;height:319px;overflow:hidden">
<div class="m" style="left:1px;top:78.65px;color:#d8d8d8;font-size:16px;font-weight:normal;transform:scale(1.0,1.27)"><i style="left:0.0px;width:9.6px;transform:scaleX(0.88)">2</i><i style="left:9.6px;width:9.6px;transform:scaleX(0.88)">1</i><i style="left:19.2px;width:9.6px;transform:scaleX(0.88)">,</i><i style="left:28.8px;width:9.6px;transform:scaleX(0.88)">0</i><i style="left:38.4px;width:9.6px;transform:scaleX(0.88)">0</i><i style="left:48.0px;width:9.6px;transform:scaleX(0.88)">0</i></div>
<div class="m" style="left:1px;top:138.0px;color:#d8d8d8;font-size:16px;font-weight:normal;transform:scale(1.0,1.27)"><i style="left:0.0px;width:9.6px;transform:scaleX(0.88)">2</i><i style="left:9.6px;width:9.6px;transform:scaleX(0.88)">0</i><i style="left:19.2px;width:9.6px;transform:scaleX(0.88)">,</i><i style="left:28.8px;width:9.6px;transform:scaleX(0.88)">9</i><i style="left:38.4px;width:9.6px;transform:scaleX(0.88)">0</i><i style="left:48.0px;width:9.6px;transform:scaleX(0.88)">0</i></div>
<div class="m" style="left:1px;top:197.35000000000002px;color:#d8d8d8;font-size:16px;font-weight:normal;transform:scale(1.0,1.27)"><i style="left:0.0px;width:9.6px;transform:scaleX(0.88)">2</i><i style="left:9.6px;width:9.6px;transform:scaleX(0.88)">0</i><i style="left:19.2px;width:9.6px;transform:scaleX(0.88)">,</i><i style="left:28.8px;width:9.6px;transform:scaleX(0.88)">8</i><i style="left:38.4px;width:9.6px;transform:scaleX(0.88)">0</i><i style="left:48.0px;width:9.6px;transform:scaleX(0.88)">0</i></div>
<div class="m" style="left:1px;top:256.7px;color:#d8d8d8;font-size:16px;font-weight:normal;transform:scale(1.0,1.27)"><i style="left:0.0px;width:9.6px;transform:scaleX(0.88)">2</i><i style="left:9.6px;width:9.6px;transform:scaleX(0.88)">0</i><i style="left:19.2px;width:9.6px;transform:scaleX(0.88)">,</i><i style="left:28.8px;width:9.6px;transform:scaleX(0.88)">7</i><i style="left:38.4px;width:9.6px;transform:scaleX(0.88)">0</i><i style="left:48.0px;width:9.6px;transform:scaleX(0.88)">0</i></div>
<div class="m" style="left:1px;top:316.0px;color:#d8d8d8;font-size:16px;font-weight:normal;transform:scale(1.0,1.27)"><i style="left:0.0px;width:9.6px;transform:scaleX(0.88)">2</i><i style="left:9.6px;width:9.6px;transform:scaleX(0.88)">0</i><i style="left:19.2px;width:9.6px;transform:scaleX(0.88)">,</i><i style="left:28.8px;width:9.6px;transform:scaleX(0.88)">6</i><i style="left:38.4px;width:9.6px;transform:scaleX(0.88)">0</i><i style="left:48.0px;width:9.6px;transform:scaleX(0.88)">0</i></div>
</div>
<div class="abs" style="left:1906px;top:92px;width:93px;height:33px;background:#d4d4d4"></div>
<div class="m" style="left:1920.9px;top:97.5px;color:#000;font-size:16px;font-weight:bold;transform:scale(1.0,1.2)"><i style="left:0.0px;width:10.2px">2</i><i style="left:10.2px;width:10.2px">1</i><i style="left:20.4px;width:10.2px">,</i><i style="left:30.6px;width:10.2px">1</i><i style="left:40.8px;width:10.2px">1</i><i style="left:51.0px;width:10.2px">2</i></div>
<div class="m" style="left:12px;top:409.0px;color:#dcdcdc;font-size:16px;font-weight:normal;transform:scale(1.0,1.27)"><i style="left:0.0px;width:19.2px;transform:scale(1.12,0.92)">時</i><i style="left:19.2px;width:19.2px;transform:scale(1.12,0.92)">刻</i><i style="left:38.4px;width:9.6px;transform:scaleX(0.86)">:</i><i style="left:48.0px;width:9.6px;transform:scaleX(0.86)">0</i><i style="left:57.6px;width:9.6px;transform:scaleX(0.86)">6</i><i style="left:67.2px;width:9.6px;transform:scaleX(0.86)">:</i><i style="left:76.8px;width:9.6px;transform:scaleX(0.86)">0</i><i style="left:86.4px;width:9.6px;transform:scaleX(0.86)">0</i><i style="left:105.6px;width:19.2px;transform:scale(1.12,0.92)">始</i><i style="left:124.8px;width:19.2px;transform:scale(1.12,0.92)">値</i><i style="left:144.0px;width:9.6px;transform:scaleX(0.86)">:</i><i style="left:153.6px;width:9.6px;transform:scaleX(0.86)">7</i><i style="left:163.2px;width:9.6px;transform:scaleX(0.86)">,</i><i style="left:172.8px;width:9.6px;transform:scaleX(0.86)">2</i><i style="left:182.4px;width:9.6px;transform:scaleX(0.86)">5</i><i style="left:192.0px;width:9.6px;transform:scaleX(0.86)">9</i><i style="left:211.2px;width:19.2px;transform:scale(1.12,0.92)">高</i><i style="left:230.4px;width:19.2px;transform:scale(1.12,0.92)">値</i><i style="left:249.6px;width:9.6px;transform:scaleX(0.86)">:</i><i style="left:259.2px;width:9.6px;transform:scaleX(0.86)">7</i><i style="left:268.8px;width:9.6px;transform:scaleX(0.86)">,</i><i style="left:278.4px;width:9.6px;transform:scaleX(0.86)">2</i><i style="left:288.0px;width:9.6px;transform:scaleX(0.86)">5</i><i style="left:297.6px;width:9.6px;transform:scaleX(0.86)">9</i><i style="left:316.8px;width:19.2px;transform:scale(1.12,0.92)">安</i><i style="left:336.0px;width:19.2px;transform:scale(1.12,0.92)">値</i><i style="left:355.2px;width:9.6px;transform:scaleX(0.86)">:</i><i style="left:364.8px;width:9.6px;transform:scaleX(0.86)">7</i><i style="left:374.4px;width:9.6px;transform:scaleX(0.86)">,</i><i style="left:384.0px;width:9.6px;transform:scaleX(0.86)">2</i><i style="left:393.6px;width:9.6px;transform:scaleX(0.86)">5</i><i style="left:403.2px;width:9.6px;transform:scaleX(0.86)">9</i><i style="left:422.4px;width:19.2px;transform:scale(1.12,0.92)">終</i><i style="left:441.6px;width:19.2px;transform:scale(1.12,0.92)">値</i><i style="left:460.8px;width:9.6px;transform:scaleX(0.86)">:</i><i style="left:470.4px;width:9.6px;transform:scaleX(0.86)">7</i><i style="left:480.0px;width:9.6px;transform:scaleX(0.86)">,</i><i style="left:489.6px;width:9.6px;transform:scaleX(0.86)">2</i><i style="left:499.2px;width:9.6px;transform:scaleX(0.86)">5</i><i style="left:508.8px;width:9.6px;transform:scaleX(0.86)">9</i></div>
<div class="m" style="left:124px;top:702.5px;color:#d8d8d8;font-size:16px;font-weight:normal;transform:scale(1.0,1.35)"><i style="left:0.0px;width:9.6px;transform:scaleX(0.9)">2</i><i style="left:9.6px;width:9.6px;transform:scaleX(0.9)">4</i></div>
<div class="m" style="left:1412px;top:702.5px;color:#d8d8d8;font-size:16px;font-weight:normal;transform:scale(1.0,1.35)"><i style="left:0.0px;width:9.6px;transform:scaleX(0.9)">2</i><i style="left:9.6px;width:9.6px;transform:scaleX(0.9)">5</i></div>
<div class="m" style="left:43.0px;top:727.5px;color:#e0e0e0;font-size:16px;font-weight:normal;transform:scale(0.88,1.27)"><i style="left:0.0px;width:11.1px">0</i><i style="left:11.1px;width:11.1px">5</i></div>
<div class="m" style="left:96.5px;top:727.5px;color:#e0e0e0;font-size:16px;font-weight:normal;transform:scale(0.88,1.27)"><i style="left:0.0px;width:11.1px">0</i><i style="left:11.1px;width:11.1px">6</i></div>
<div class="m" style="left:96.5px;top:727.5px;color:#e0e0e0;font-size:16px;font-weight:normal;transform:scale(0.88,1.27)"><i style="left:0.0px;width:11.1px">0</i><i style="left:11.1px;width:11.1px">8</i></div>
<div class="m" style="left:147.5px;top:727.5px;color:#e0e0e0;font-size:16px;font-weight:normal;transform:scale(0.88,1.27)"><i style="left:0.0px;width:11.1px">0</i><i style="left:11.1px;width:11.1px">9</i></div>
<div class="m" style="left:240.5px;top:727.5px;color:#e0e0e0;font-size:16px;font-weight:normal;transform:scale(0.88,1.27)"><i style="left:0.0px;width:11.1px">1</i><i style="left:11.1px;width:11.1px">0</i></div>
<div class="m" style="left:334.5px;top:727.5px;color:#e0e0e0;font-size:16px;font-weight:normal;transform:scale(0.88,1.27)"><i style="left:0.0px;width:11.1px">1</i><i style="left:11.1px;width:11.1px">1</i></div>
<div class="m" style="left:425.5px;top:727.5px;color:#e0e0e0;font-size:16px;font-weight:normal;transform:scale(0.88,1.27)"><i style="left:0.0px;width:11.1px">1</i><i style="left:11.1px;width:11.1px">2</i></div>
<div class="m" style="left:517.5px;top:727.5px;color:#e0e0e0;font-size:16px;font-weight:normal;transform:scale(0.88,1.27)"><i style="left:0.0px;width:11.1px">1</i><i style="left:11.1px;width:11.1px">3</i></div>
<div class="m" style="left:608.5px;top:727.5px;color:#e0e0e0;font-size:16px;font-weight:normal;transform:scale(0.88,1.27)"><i style="left:0.0px;width:11.1px">1</i><i style="left:11.1px;width:11.1px">4</i></div>
<div class="m" style="left:693.0px;top:727.5px;color:#e0e0e0;font-size:16px;font-weight:normal;transform:scale(0.88,1.27)"><i style="left:0.0px;width:11.1px">1</i><i style="left:11.1px;width:11.1px">5</i></div>
<div class="m" style="left:755.0px;top:727.5px;color:#e0e0e0;font-size:16px;font-weight:normal;transform:scale(0.88,1.27)"><i style="left:0.0px;width:11.1px">1</i><i style="left:11.1px;width:11.1px">7</i></div>
<div class="m" style="left:847.5px;top:727.5px;color:#e0e0e0;font-size:16px;font-weight:normal;transform:scale(0.88,1.27)"><i style="left:0.0px;width:11.1px">1</i><i style="left:11.1px;width:11.1px">8</i></div>
<div class="m" style="left:941.0px;top:727.5px;color:#e0e0e0;font-size:16px;font-weight:normal;transform:scale(0.88,1.27)"><i style="left:0.0px;width:11.1px">1</i><i style="left:11.1px;width:11.1px">9</i></div>
<div class="m" style="left:1034.5px;top:727.5px;color:#e0e0e0;font-size:16px;font-weight:normal;transform:scale(0.88,1.27)"><i style="left:0.0px;width:11.1px">2</i><i style="left:11.1px;width:11.1px">0</i></div>
<div class="m" style="left:1128.5px;top:727.5px;color:#e0e0e0;font-size:16px;font-weight:normal;transform:scale(0.88,1.27)"><i style="left:0.0px;width:11.1px">2</i><i style="left:11.1px;width:11.1px">1</i></div>
<div class="m" style="left:1223.0px;top:727.5px;color:#e0e0e0;font-size:16px;font-weight:normal;transform:scale(0.88,1.27)"><i style="left:0.0px;width:11.1px">2</i><i style="left:11.1px;width:11.1px">2</i></div>
<div class="m" style="left:1317.5px;top:727.5px;color:#e0e0e0;font-size:16px;font-weight:normal;transform:scale(0.88,1.27)"><i style="left:0.0px;width:11.1px">2</i><i style="left:11.1px;width:11.1px">3</i></div>
<div class="m" style="left:1412.0px;top:727.5px;color:#e0e0e0;font-size:16px;font-weight:normal;transform:scale(0.88,1.27)"><i style="left:0.0px;width:11.1px">0</i><i style="left:11.1px;width:11.1px">0</i></div>
<div class="m" style="left:1504.5px;top:727.5px;color:#e0e0e0;font-size:16px;font-weight:normal;transform:scale(0.88,1.27)"><i style="left:0.0px;width:11.1px">0</i><i style="left:11.1px;width:11.1px">1</i></div>
<div class="m" style="left:1595.5px;top:727.5px;color:#e0e0e0;font-size:16px;font-weight:normal;transform:scale(0.88,1.27)"><i style="left:0.0px;width:11.1px">0</i><i style="left:11.1px;width:11.1px">2</i></div>
<div class="m" style="left:1665.5px;top:727.5px;color:#e0e0e0;font-size:16px;font-weight:normal;transform:scale(0.88,1.27)"><i style="left:0.0px;width:11.1px">0</i><i style="left:11.1px;width:11.1px">3</i></div>
<div class="m" style="left:1754.5px;top:727.5px;color:#e0e0e0;font-size:16px;font-weight:normal;transform:scale(0.88,1.27)"><i style="left:0.0px;width:11.1px">0</i><i style="left:11.1px;width:11.1px">4</i></div>
<div class="m" style="left:1833.5px;top:727.5px;color:#e0e0e0;font-size:16px;font-weight:normal;transform:scale(0.88,1.27)"><i style="left:0.0px;width:11.1px">0</i><i style="left:11.1px;width:11.1px">5</i></div>
<div class="m" style="left:1878.0px;top:727.5px;color:#e0e0e0;font-size:16px;font-weight:normal;transform:scale(0.88,1.27)"><i style="left:0.0px;width:11.1px">0</i><i style="left:11.1px;width:11.1px">6</i></div>
<div class="abs" style="left:1907px;top:405.5px;width:92px;height:346.0px;overflow:hidden">
<div class="m" style="left:1px;top:124.39999999999998px;color:#d8d8d8;font-size:16px;font-weight:normal;transform:scale(1.0,1.27)"><i style="left:0.0px;width:9.6px;transform:scaleX(0.88)">7</i><i style="left:9.6px;width:9.6px;transform:scaleX(0.88)">,</i><i style="left:19.2px;width:9.6px;transform:scaleX(0.88)">2</i><i style="left:28.8px;width:9.6px;transform:scaleX(0.88)">0</i><i style="left:38.4px;width:9.6px;transform:scaleX(0.88)">0</i></div>
<div class="m" style="left:1px;top:202.0px;color:#d8d8d8;font-size:16px;font-weight:normal;transform:scale(1.0,1.27)"><i style="left:0.0px;width:9.6px;transform:scaleX(0.88)">7</i><i style="left:9.6px;width:9.6px;transform:scaleX(0.88)">,</i><i style="left:19.2px;width:9.6px;transform:scaleX(0.88)">1</i><i style="left:28.8px;width:9.6px;transform:scaleX(0.88)">5</i><i style="left:38.4px;width:9.6px;transform:scaleX(0.88)">0</i></div>
<div class="m" style="left:1px;top:279.5999999999999px;color:#d8d8d8;font-size:16px;font-weight:normal;transform:scale(1.0,1.27)"><i style="left:0.0px;width:9.6px;transform:scaleX(0.88)">7</i><i style="left:9.6px;width:9.6px;transform:scaleX(0.88)">,</i><i style="left:19.2px;width:9.6px;transform:scaleX(0.88)">1</i><i style="left:28.8px;width:9.6px;transform:scaleX(0.88)">0</i><i style="left:38.4px;width:9.6px;transform:scaleX(0.88)">0</i></div>
</div>
<div class="abs" style="left:1906px;top:441px;width:93px;height:33px;background:#d4d4d4"></div>
<div class="m" style="left:1926.0px;top:446.5px;color:#000;font-size:16px;font-weight:bold;transform:scale(1.0,1.2)"><i style="left:0.0px;width:10.2px">7</i><i style="left:10.2px;width:10.2px">,</i><i style="left:20.4px;width:10.2px">2</i><i style="left:30.6px;width:10.2px">5</i><i style="left:40.8px;width:10.2px">9</i></div>
<div class="m" style="left:12px;top:765.0px;color:#dcdcdc;font-size:16px;font-weight:normal;transform:scale(1.0,1.27)"><i style="left:0.0px;width:9.6px;transform:scaleX(0.86)">[</i><i style="left:9.6px;width:19.2px;transform:scale(1.12,0.92)">金</i><i style="left:38.4px;width:9.6px;transform:scaleX(0.86)">2</i><i style="left:48.0px;width:9.6px;transform:scaleX(0.86)">6</i><i style="left:57.6px;width:9.6px;transform:scaleX(0.86)">/</i><i style="left:67.2px;width:9.6px;transform:scaleX(0.86)">1</i><i style="left:76.8px;width:9.6px;transform:scaleX(0.86)">0</i><i style="left:96.0px;width:9.6px;transform:scaleX(0.86)">2</i><i style="left:105.6px;width:9.6px;transform:scaleX(0.86)">1</i><i style="left:115.2px;width:9.6px;transform:scaleX(0.86)">,</i><i style="left:124.8px;width:9.6px;transform:scaleX(0.86)">1</i><i style="left:134.4px;width:9.6px;transform:scaleX(0.86)">1</i><i style="left:144.0px;width:9.6px;transform:scaleX(0.86)">2</i><i style="left:153.6px;width:19.2px;transform:scale(1.7,1.25)">×</i><i style="left:172.8px;width:9.6px;transform:scaleX(0.86)">1</i><i style="left:182.4px;width:9.6px;transform:scaleX(0.86)">.</i><i style="left:192.0px;width:9.6px;transform:scaleX(0.86)">0</i><i style="left:201.6px;width:9.6px;transform:scaleX(0.86)">0</i><i style="left:211.2px;width:9.6px;transform:scaleX(0.86)">]</i><i style="left:220.8px;width:19.2px;transform:scale(1.12,0.92)">－</i><i style="left:240.0px;width:9.6px;transform:scaleX(0.86)">[</i><i style="left:249.6px;width:19.2px;transform:scale(1.12,0.92)">白</i><i style="left:268.8px;width:19.2px;transform:scale(1.12,0.92)">金</i><i style="left:297.6px;width:9.6px;transform:scaleX(0.86)">2</i><i style="left:307.2px;width:9.6px;transform:scaleX(0.86)">6</i><i style="left:316.8px;width:9.6px;transform:scaleX(0.86)">/</i><i style="left:326.4px;width:9.6px;transform:scaleX(0.86)">1</i><i style="left:336.0px;width:9.6px;transform:scaleX(0.86)">0</i><i style="left:355.2px;width:9.6px;transform:scaleX(0.86)">7</i><i style="left:364.8px;width:9.6px;transform:scaleX(0.86)">,</i><i style="left:374.4px;width:9.6px;transform:scaleX(0.86)">2</i><i style="left:384.0px;width:9.6px;transform:scaleX(0.86)">5</i><i style="left:393.6px;width:9.6px;transform:scaleX(0.86)">9</i><i style="left:403.2px;width:19.2px;transform:scale(1.7,1.25)">×</i><i style="left:422.4px;width:9.6px;transform:scaleX(0.86)">1</i><i style="left:432.0px;width:9.6px;transform:scaleX(0.86)">.</i><i style="left:441.6px;width:9.6px;transform:scaleX(0.86)">0</i><i style="left:451.2px;width:9.6px;transform:scaleX(0.86)">0</i><i style="left:460.8px;width:9.6px;transform:scaleX(0.86)">]</i><i style="left:480.0px;width:19.2px;transform:scale(1.12,0.92)">終</i><i style="left:499.2px;width:19.2px;transform:scale(1.12,0.92)">値</i><i style="left:528.0px;width:19.2px;transform:scale(1.12,0.92)">時</i><i style="left:547.2px;width:19.2px;transform:scale(1.12,0.92)">刻</i><i style="left:566.4px;width:9.6px;transform:scaleX(0.86)">:</i><i style="left:576.0px;width:9.6px;transform:scaleX(0.86)">0</i><i style="left:585.6px;width:9.6px;transform:scaleX(0.86)">6</i><i style="left:595.2px;width:9.6px;transform:scaleX(0.86)">:</i><i style="left:604.8px;width:9.6px;transform:scaleX(0.86)">0</i><i style="left:614.4px;width:9.6px;transform:scaleX(0.86)">0</i><i style="left:633.6px;width:9.6px;transform:scaleX(0.86)">1</i><i style="left:643.2px;width:9.6px;transform:scaleX(0.86)">3</i><i style="left:652.8px;width:9.6px;transform:scaleX(0.86)">,</i><i style="left:662.4px;width:9.6px;transform:scaleX(0.86)">8</i><i style="left:672.0px;width:9.6px;transform:scaleX(0.86)">5</i><i style="left:681.6px;width:9.6px;transform:scaleX(0.86)">3</i></div>
<div class="m" style="left:124px;top:1024.5px;color:#d8d8d8;font-size:16px;font-weight:normal;transform:scale(1.0,1.35)"><i style="left:0.0px;width:9.6px;transform:scaleX(0.9)">2</i><i style="left:9.6px;width:9.6px;transform:scaleX(0.9)">4</i></div>
<div class="m" style="left:1412px;top:1024.5px;color:#d8d8d8;font-size:16px;font-weight:normal;transform:scale(1.0,1.35)"><i style="left:0.0px;width:9.6px;transform:scaleX(0.9)">2</i><i style="left:9.6px;width:9.6px;transform:scaleX(0.9)">5</i></div>
<div class="m" style="left:43.0px;top:1049.5px;color:#e0e0e0;font-size:16px;font-weight:normal;transform:scale(0.88,1.27)"><i style="left:0.0px;width:11.1px">0</i><i style="left:11.1px;width:11.1px">5</i></div>
<div class="m" style="left:96.5px;top:1049.5px;color:#e0e0e0;font-size:16px;font-weight:normal;transform:scale(0.88,1.27)"><i style="left:0.0px;width:11.1px">0</i><i style="left:11.1px;width:11.1px">6</i></div>
<div class="m" style="left:96.5px;top:1049.5px;color:#e0e0e0;font-size:16px;font-weight:normal;transform:scale(0.88,1.27)"><i style="left:0.0px;width:11.1px">0</i><i style="left:11.1px;width:11.1px">8</i></div>
<div class="m" style="left:147.5px;top:1049.5px;color:#e0e0e0;font-size:16px;font-weight:normal;transform:scale(0.88,1.27)"><i style="left:0.0px;width:11.1px">0</i><i style="left:11.1px;width:11.1px">9</i></div>
<div class="m" style="left:240.5px;top:1049.5px;color:#e0e0e0;font-size:16px;font-weight:normal;transform:scale(0.88,1.27)"><i style="left:0.0px;width:11.1px">1</i><i style="left:11.1px;width:11.1px">0</i></div>
<div class="m" style="left:334.5px;top:1049.5px;color:#e0e0e0;font-size:16px;font-weight:normal;transform:scale(0.88,1.27)"><i style="left:0.0px;width:11.1px">1</i><i style="left:11.1px;width:11.1px">1</i></div>
<div class="m" style="left:425.5px;top:1049.5px;color:#e0e0e0;font-size:16px;font-weight:normal;transform:scale(0.88,1.27)"><i style="left:0.0px;width:11.1px">1</i><i style="left:11.1px;width:11.1px">2</i></div>
<div class="m" style="left:517.5px;top:1049.5px;color:#e0e0e0;font-size:16px;font-weight:normal;transform:scale(0.88,1.27)"><i style="left:0.0px;width:11.1px">1</i><i style="left:11.1px;width:11.1px">3</i></div>
<div class="m" style="left:608.5px;top:1049.5px;color:#e0e0e0;font-size:16px;font-weight:normal;transform:scale(0.88,1.27)"><i style="left:0.0px;width:11.1px">1</i><i style="left:11.1px;width:11.1px">4</i></div>
<div class="m" style="left:693.0px;top:1049.5px;color:#e0e0e0;font-size:16px;font-weight:normal;transform:scale(0.88,1.27)"><i style="left:0.0px;width:11.1px">1</i><i style="left:11.1px;width:11.1px">5</i></div>
<div class="m" style="left:755.0px;top:1049.5px;color:#e0e0e0;font-size:16px;font-weight:normal;transform:scale(0.88,1.27)"><i style="left:0.0px;width:11.1px">1</i><i style="left:11.1px;width:11.1px">7</i></div>
<div class="m" style="left:847.5px;top:1049.5px;color:#e0e0e0;font-size:16px;font-weight:normal;transform:scale(0.88,1.27)"><i style="left:0.0px;width:11.1px">1</i><i style="left:11.1px;width:11.1px">8</i></div>
<div class="m" style="left:941.0px;top:1049.5px;color:#e0e0e0;font-size:16px;font-weight:normal;transform:scale(0.88,1.27)"><i style="left:0.0px;width:11.1px">1</i><i style="left:11.1px;width:11.1px">9</i></div>
<div class="m" style="left:1034.5px;top:1049.5px;color:#e0e0e0;font-size:16px;font-weight:normal;transform:scale(0.88,1.27)"><i style="left:0.0px;width:11.1px">2</i><i style="left:11.1px;width:11.1px">0</i></div>
<div class="m" style="left:1128.5px;top:1049.5px;color:#e0e0e0;font-size:16px;font-weight:normal;transform:scale(0.88,1.27)"><i style="left:0.0px;width:11.1px">2</i><i style="left:11.1px;width:11.1px">1</i></div>
<div class="m" style="left:1223.0px;top:1049.5px;color:#e0e0e0;font-size:16px;font-weight:normal;transform:scale(0.88,1.27)"><i style="left:0.0px;width:11.1px">2</i><i style="left:11.1px;width:11.1px">2</i></div>
<div class="m" style="left:1317.5px;top:1049.5px;color:#e0e0e0;font-size:16px;font-weight:normal;transform:scale(0.88,1.27)"><i style="left:0.0px;width:11.1px">2</i><i style="left:11.1px;width:11.1px">3</i></div>
<div class="m" style="left:1412.0px;top:1049.5px;color:#e0e0e0;font-size:16px;font-weight:normal;transform:scale(0.88,1.27)"><i style="left:0.0px;width:11.1px">0</i><i style="left:11.1px;width:11.1px">0</i></div>
<div class="m" style="left:1504.5px;top:1049.5px;color:#e0e0e0;font-size:16px;font-weight:normal;transform:scale(0.88,1.27)"><i style="left:0.0px;width:11.1px">0</i><i style="left:11.1px;width:11.1px">1</i></div>
<div class="m" style="left:1595.5px;top:1049.5px;color:#e0e0e0;font-size:16px;font-weight:normal;transform:scale(0.88,1.27)"><i style="left:0.0px;width:11.1px">0</i><i style="left:11.1px;width:11.1px">2</i></div>
<div class="m" style="left:1665.5px;top:1049.5px;color:#e0e0e0;font-size:16px;font-weight:normal;transform:scale(0.88,1.27)"><i style="left:0.0px;width:11.1px">0</i><i style="left:11.1px;width:11.1px">3</i></div>
<div class="m" style="left:1754.5px;top:1049.5px;color:#e0e0e0;font-size:16px;font-weight:normal;transform:scale(0.88,1.27)"><i style="left:0.0px;width:11.1px">0</i><i style="left:11.1px;width:11.1px">4</i></div>
<div class="m" style="left:1833.5px;top:1049.5px;color:#e0e0e0;font-size:16px;font-weight:normal;transform:scale(0.88,1.27)"><i style="left:0.0px;width:11.1px">0</i><i style="left:11.1px;width:11.1px">5</i></div>
<div class="m" style="left:1878.0px;top:1049.5px;color:#e0e0e0;font-size:16px;font-weight:normal;transform:scale(0.88,1.27)"><i style="left:0.0px;width:11.1px">0</i><i style="left:11.1px;width:11.1px">6</i></div>
<div class="abs" style="left:1907px;top:761.5px;width:92px;height:311.5px;overflow:hidden">
<div class="m" style="left:1px;top:41.59999999999991px;color:#d8d8d8;font-size:16px;font-weight:normal;transform:scale(1.0,1.27)"><i style="left:0.0px;width:9.6px;transform:scaleX(0.88)">1</i><i style="left:9.6px;width:9.6px;transform:scaleX(0.88)">3</i><i style="left:19.2px;width:9.6px;transform:scaleX(0.88)">,</i><i style="left:28.8px;width:9.6px;transform:scaleX(0.88)">8</i><i style="left:38.4px;width:9.6px;transform:scaleX(0.88)">0</i><i style="left:48.0px;width:9.6px;transform:scaleX(0.88)">0</i></div>
<div class="m" style="left:1px;top:119.19999999999993px;color:#d8d8d8;font-size:16px;font-weight:normal;transform:scale(1.0,1.27)"><i style="left:0.0px;width:9.6px;transform:scaleX(0.88)">1</i><i style="left:9.6px;width:9.6px;transform:scaleX(0.88)">3</i><i style="left:19.2px;width:9.6px;transform:scaleX(0.88)">,</i><i style="left:28.8px;width:9.6px;transform:scaleX(0.88)">7</i><i style="left:38.4px;width:9.6px;transform:scaleX(0.88)">0</i><i style="left:48.0px;width:9.6px;transform:scaleX(0.88)">0</i></div>
<div class="m" style="left:1px;top:196.79999999999995px;color:#d8d8d8;font-size:16px;font-weight:normal;transform:scale(1.0,1.27)"><i style="left:0.0px;width:9.6px;transform:scaleX(0.88)">1</i><i style="left:9.6px;width:9.6px;transform:scaleX(0.88)">3</i><i style="left:19.2px;width:9.6px;transform:scaleX(0.88)">,</i><i style="left:28.8px;width:9.6px;transform:scaleX(0.88)">6</i><i style="left:38.4px;width:9.6px;transform:scaleX(0.88)">0</i><i style="left:48.0px;width:9.6px;transform:scaleX(0.88)">0</i></div>
<div class="m" style="left:1px;top:274.39999999999986px;color:#d8d8d8;font-size:16px;font-weight:normal;transform:scale(1.0,1.27)"><i style="left:0.0px;width:9.6px;transform:scaleX(0.88)">1</i><i style="left:9.6px;width:9.6px;transform:scaleX(0.88)">3</i><i style="left:19.2px;width:9.6px;transform:scaleX(0.88)">,</i><i style="left:28.8px;width:9.6px;transform:scaleX(0.88)">5</i><i style="left:38.4px;width:9.6px;transform:scaleX(0.88)">0</i><i style="left:48.0px;width:9.6px;transform:scaleX(0.88)">0</i></div>
</div>
<div class="abs" style="left:1906px;top:767px;width:93px;height:32px;background:#d4d4d4"></div>
<div class="m" style="left:1920.9px;top:772.0px;color:#000;font-size:16px;font-weight:bold;transform:scale(1.0,1.2)"><i style="left:0.0px;width:10.2px">1</i><i style="left:10.2px;width:10.2px">3</i><i style="left:20.4px;width:10.2px">,</i><i style="left:30.6px;width:10.2px">8</i><i style="left:40.8px;width:10.2px">5</i><i style="left:51.0px;width:10.2px">3</i></div>
</body></html>
